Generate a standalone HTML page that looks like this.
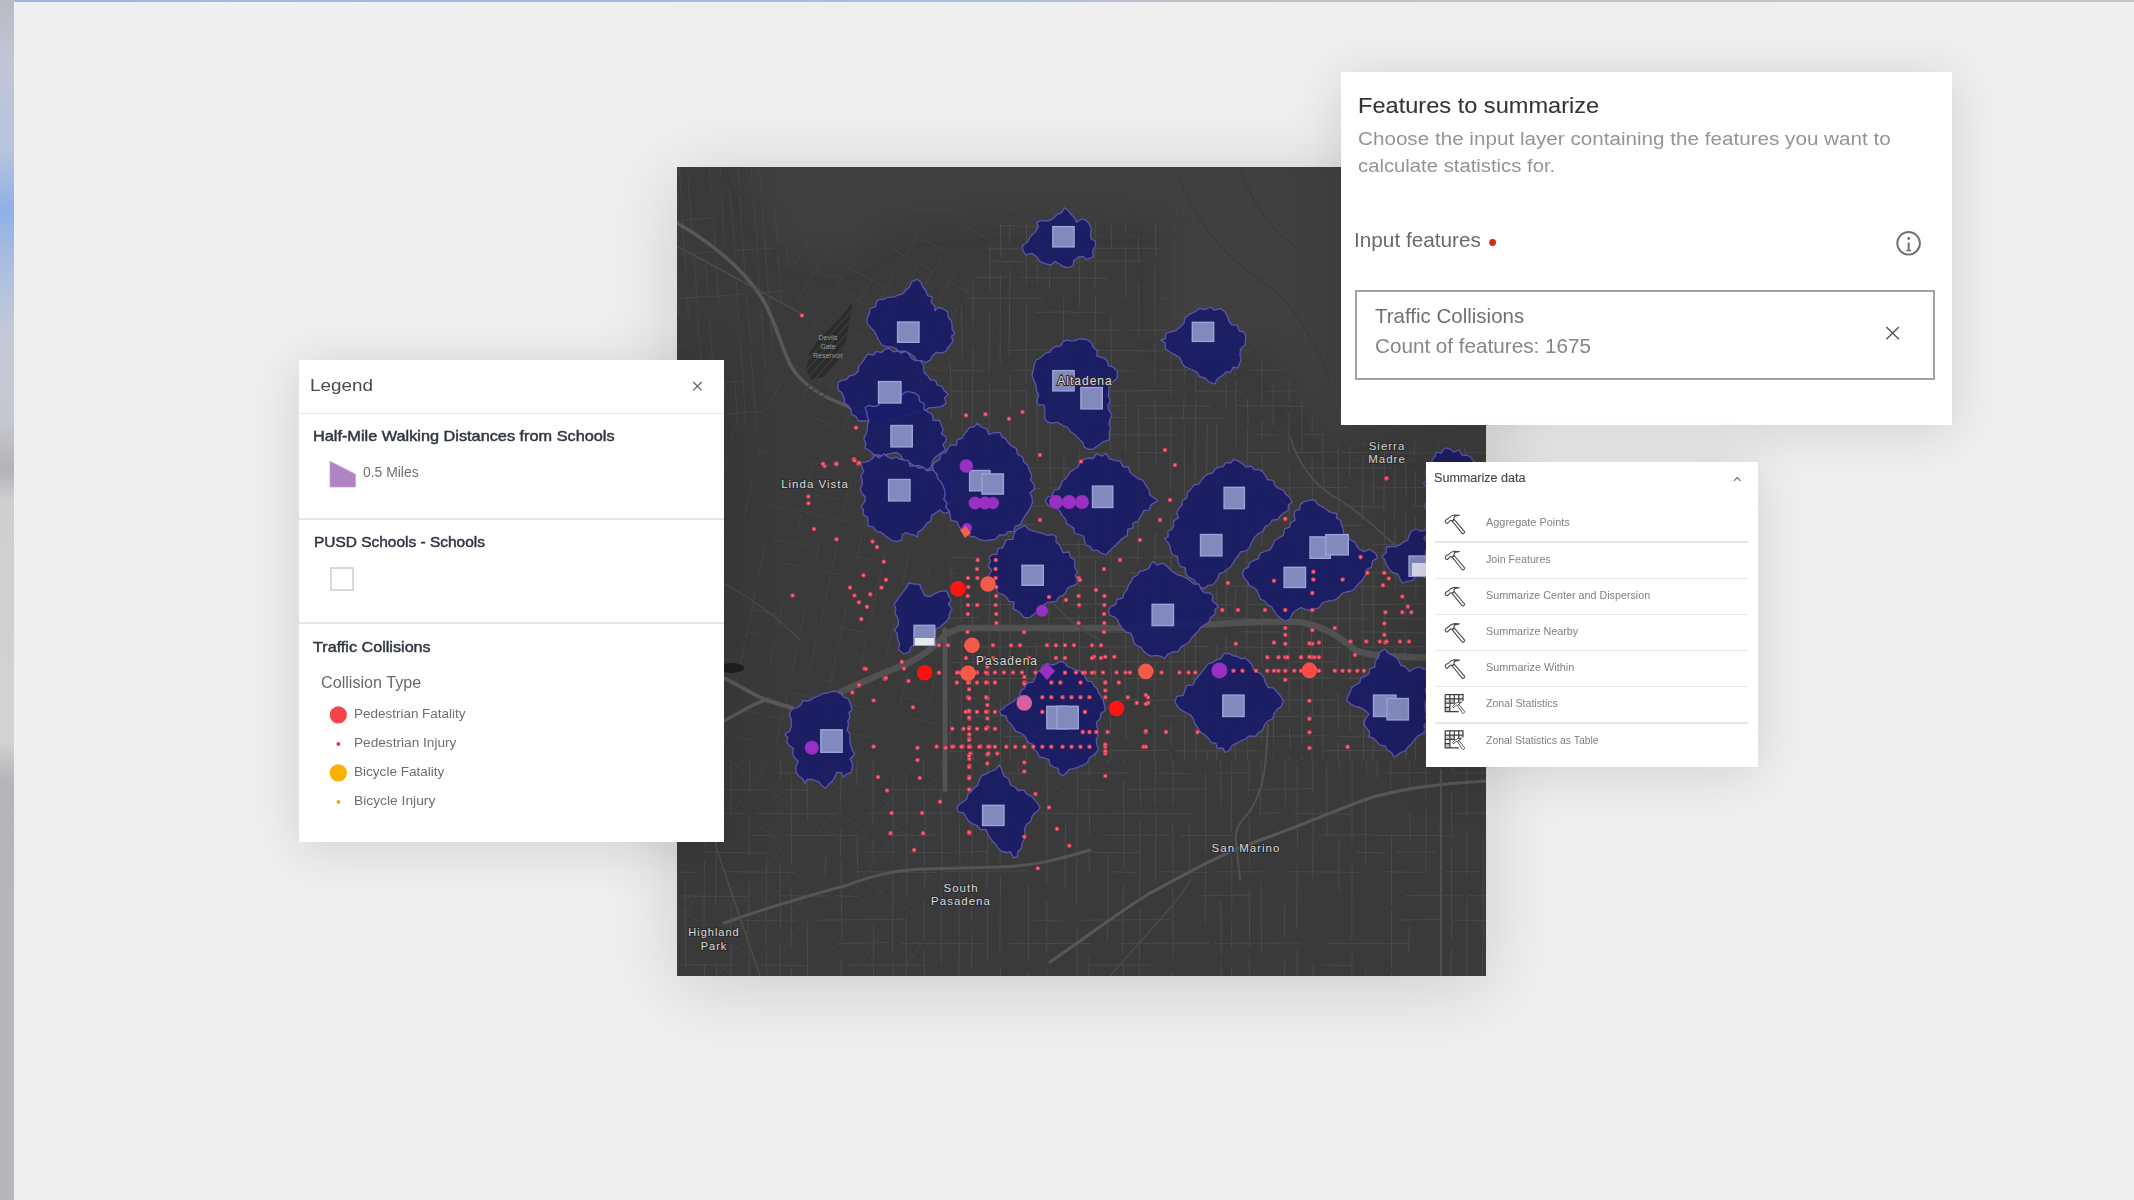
<!DOCTYPE html>
<html><head><meta charset="utf-8">
<style>
html,body{margin:0;padding:0;}
body{width:2134px;height:1200px;overflow:hidden;position:relative;background:#efefef;font-family:"Liberation Sans",sans-serif;}
.abs{position:absolute;}
#strip{left:0;top:0;width:14px;height:1200px;background:linear-gradient(to bottom,#b9bbc2 0px,#c0c6d6 60px,#b7c4dc 150px,#8fb0e6 210px,#a9bde0 260px,#c3c9d8 330px,#c6c8cf 420px,#b3b3b7 470px,#cfcfd1 500px,#d3d3d4 740px,#b6b6ba 780px,#b7b7bb 1200px);}
#topline{left:14px;top:0;width:2120px;height:1.5px;background:linear-gradient(to right,#9db6e2 0px,#a8bde0 900px,#c4c2bc 1300px,#c9c6be 2120px);}
.panel{position:absolute;background:#fff;box-shadow:0 6px 50px rgba(0,0,0,0.13);}
.t{position:absolute;white-space:nowrap;line-height:1;}
.hr{position:absolute;height:1.5px;background:#e6e6e6;}
svg{position:absolute;overflow:visible;}
</style></head>
<body>
<div id="strip" class="abs"></div>
<div id="topline" class="abs"></div>

<!-- MAP -->
<div id="map" class="abs" style="left:677px;top:167px;width:809px;height:809px;background:#393939;box-shadow:0 10px 70px rgba(0,0,0,0.15);overflow:hidden;">
<svg width="809" height="809" viewBox="677 167 809 809" style="left:0;top:0"><rect x="677.0" y="167.0" width="809.0" height="809.0" fill="#3a3a3a"/>
<filter id="mblur" x="-10%" y="-10%" width="120%" height="120%"><feGaussianBlur stdDeviation="14"/></filter>
<polygon points="745.0,150.0 1500.0,150.0 1500.0,445.0 1420.0,440.0 1330.0,440.0 1268.0,345.0 1166.0,341.0 1166.0,217.0 1000.0,212.0 900.0,222.0 840.0,258.0 790.0,248.0 760.0,200.0" fill="#3f4140" filter="url(#mblur)"/>
<clipPath id="z3"><polygon points="950.0,330.0 1000.0,222.0 1166.0,222.0 1166.0,341.0 1268.0,345.0 1330.0,445.0 1420.0,440.0 1486.0,450.0 1486.0,760.0 950.0,760.0"/></clipPath>
<path d="M786.0,58.0 L786.3,100.7 M786.0,102.5 L785.1,160.0 M786.0,172.7 L785.1,195.3 M786.0,250.4 L786.9,286.0 M786.0,349.4 L785.3,429.5 M786.0,478.5 L785.7,539.2 M786.0,552.9 L785.4,577.3 M786.0,594.3 L786.2,644.3 M786.0,655.6 L786.4,696.6 M786.0,702.7 L786.8,762.9 M786.0,824.2 L785.3,873.5 M786.0,885.7 L786.5,908.5 M801.9,58.0 L802.1,100.0 M801.9,190.0 L801.1,243.2 M801.9,346.6 L802.3,386.5 M801.9,387.1 L801.2,439.4 M801.9,440.9 L801.4,514.6 M801.9,524.4 L801.8,605.4 M801.9,722.6 L801.6,762.1 M801.9,784.2 L801.3,871.2 M801.9,877.0 L802.1,913.4 M801.9,919.9 L801.7,940.2 M818.5,58.0 L818.7,126.3 M818.5,186.5 L818.2,267.7 M818.5,277.7 L817.6,305.0 M818.5,306.6 L818.1,341.3 M818.5,342.6 L817.7,362.6 M818.5,408.8 L818.2,439.2 M818.5,501.7 L817.6,554.4 M818.5,556.9 L819.1,600.9 M818.5,639.8 L817.5,670.0 M818.5,789.1 L817.8,827.4 M818.5,846.7 L818.1,904.0 M833.9,58.0 L833.3,135.3 M833.9,148.2 L832.9,193.1 M833.9,200.1 L834.8,238.2 M833.9,358.9 L833.3,404.4 M833.9,409.3 L834.7,443.6 M833.9,464.6 L834.4,518.2 M833.9,606.1 L833.2,678.6 M833.9,765.9 L834.7,813.6 M833.9,831.8 L833.2,863.7 M833.9,886.3 L834.5,962.7 M848.1,58.0 L847.3,102.5 M848.1,102.9 L848.1,190.8 M848.1,285.2 L847.7,320.0 M848.1,326.0 L847.9,387.0 M848.1,390.3 L848.0,474.0 M848.1,488.6 L848.9,571.9 M848.1,584.4 L847.1,641.7 M848.1,652.7 L848.7,685.5 M848.1,689.8 L848.2,743.0 M848.1,751.1 L848.6,807.4 M848.1,810.0 L847.6,869.3 M848.1,888.6 L848.6,944.1 M860.6,58.0 L860.7,120.9 M860.6,138.2 L860.6,189.9 M860.6,305.9 L861.5,344.1 M860.6,365.1 L860.5,394.7 M860.6,396.5 L861.0,433.3 M860.6,452.9 L861.1,535.7 M860.6,726.7 L860.7,758.0 M860.6,766.4 L861.1,800.1 M860.6,800.6 L859.7,859.4 M860.6,867.7 L859.8,931.4 M875.9,58.0 L875.4,146.0 M875.9,147.0 L875.1,221.5 M875.9,367.1 L875.0,436.1 M875.9,453.3 L876.8,503.1 M875.9,518.9 L876.6,595.1 M875.9,596.7 L875.6,677.1 M875.9,690.9 L875.1,775.8 M875.9,789.0 L875.2,825.7 M875.9,826.9 L875.5,861.1 M875.9,880.0 L875.2,920.3 M885.1,58.0 L885.6,95.5 M885.1,109.3 L886.0,142.6 M885.1,145.2 L885.1,222.6 M885.1,243.4 L885.5,290.9 M885.1,377.2 L884.8,441.7 M885.1,443.0 L885.6,472.1 M885.1,478.5 L885.8,509.9 M885.1,531.7 L884.6,598.6 M885.1,606.0 L885.0,658.1 M885.1,810.6 L884.9,855.5 M885.1,867.4 L885.1,922.6 M896.3,58.0 L895.4,84.3 M896.3,84.8 L896.5,126.1 M896.3,139.4 L896.7,211.9 M896.3,233.9 L897.3,281.2 M896.3,284.9 L895.4,355.6 M896.3,376.5 L896.8,458.9 M896.3,479.2 L896.3,509.0 M896.3,620.8 L896.7,703.3 M896.3,709.0 L896.0,731.2 M896.3,733.8 L896.5,812.3 M896.3,828.0 L895.3,895.6 M896.3,915.6 L896.4,987.9 M905.9,58.0 L905.0,129.6 M905.9,136.2 L906.4,207.3 M905.9,231.7 L905.9,286.2 M905.9,303.3 L906.2,377.0 M905.9,379.0 L906.4,409.3 M905.9,416.9 L905.0,476.6 M905.9,483.3 L906.3,550.4 M905.9,557.7 L905.8,613.8 M905.9,616.8 L906.9,699.3 M905.9,722.7 L906.5,744.0 M905.9,768.2 L905.3,819.6 M905.9,843.3 L905.2,878.0 M905.9,891.1 L906.5,977.8 M921.9,58.0 L922.7,127.2 M921.9,139.4 L921.9,161.1 M921.9,172.4 L921.6,213.5 M921.9,221.4 L922.4,300.2 M921.9,367.5 L921.7,450.6 M921.9,460.4 L921.6,550.3 M921.9,561.0 L921.1,600.3 M921.9,667.4 L921.3,706.0 M921.9,910.2 L921.0,968.7 M934.5,58.0 L934.1,130.7 M934.5,131.9 L934.5,216.8 M934.5,225.4 L935.5,266.2 M934.5,272.7 L934.6,338.6 M934.5,348.5 L934.0,380.2 M934.5,402.9 L935.3,457.7 M934.5,482.6 L933.9,534.1 M934.5,536.3 L934.0,580.3 M934.5,665.3 L934.6,714.2 M934.5,723.7 L934.1,767.3 M934.5,791.5 L934.8,820.3 M934.5,841.9 L934.0,877.0 M950.4,58.0 L950.9,79.5 M950.4,101.9 L949.4,155.0 M950.4,271.1 L949.7,359.2 M950.4,363.0 L951.3,419.6 M950.4,437.6 L950.4,502.9 M950.4,516.7 L949.9,539.5 M950.4,562.5 L949.7,627.7 M950.4,634.0 L949.7,698.5 M950.4,700.3 L950.2,757.0 M950.4,762.6 L950.0,824.6 M950.4,836.2 L951.2,923.3 M961.4,112.9 L961.4,154.4 M961.4,171.3 L961.7,220.7 M961.4,243.8 L961.1,279.7 M961.4,290.2 L962.0,358.0 M961.4,376.5 L962.3,431.8 M961.4,439.6 L960.8,517.0 M961.4,589.1 L961.2,622.2 M961.4,638.8 L961.2,725.2 M961.4,730.5 L960.5,818.7 M973.0,109.6 L972.8,131.9 M973.0,141.2 L972.0,184.4 M973.0,239.1 L972.8,326.6 M973.0,347.2 L972.1,424.7 M973.0,601.6 L972.2,624.5 M973.0,647.5 L973.8,685.5 M973.0,748.4 L972.7,786.8 M973.0,793.7 L973.9,813.9 M973.0,829.8 L972.5,915.8 M989.6,58.0 L989.1,144.8 M989.6,214.6 L990.3,290.8 M989.6,310.1 L989.2,372.6 M989.6,381.7 L989.0,456.5 M989.6,475.3 L988.7,512.6 M989.6,591.3 L988.8,680.4 M989.6,682.8 L989.5,737.7 M989.6,743.6 L990.0,792.8 M989.6,811.5 L988.8,890.8 M989.6,911.8 L989.4,952.3 M1000.3,58.0 L999.6,95.3 M1000.3,117.4 L1000.1,177.9 M1000.3,202.7 L1000.9,258.2 M1000.3,274.6 L1000.2,363.9 M1000.3,464.3 L999.6,504.8 M1000.3,599.3 L999.8,679.9 M1000.3,699.3 L1000.5,785.5 M1000.3,801.0 L999.5,836.3 M1000.3,841.4 L1000.6,879.2 M1000.3,884.3 L1000.6,905.1 M1000.3,909.7 L1000.9,951.6 M1009.9,58.0 L1010.0,85.1 M1009.9,101.1 L1010.2,127.5 M1009.9,137.7 L1010.8,177.5 M1009.9,185.3 L1009.7,245.0 M1009.9,266.6 L1009.2,356.4 M1009.9,374.6 L1010.7,408.8 M1009.9,419.4 L1010.6,496.8 M1009.9,508.4 L1010.0,539.7 M1009.9,555.8 L1010.1,639.4 M1009.9,648.7 L1009.4,704.0 M1009.9,717.1 L1009.8,801.8 M1009.9,822.0 L1009.1,909.6 M1026.6,58.0 L1027.4,111.8 M1026.6,121.5 L1027.2,204.8 M1026.6,208.8 L1026.4,283.8 M1026.6,305.0 L1026.0,383.0 M1026.6,393.0 L1025.8,449.2 M1026.6,527.2 L1025.6,586.6 M1026.6,607.5 L1026.7,635.8 M1026.6,651.4 L1026.7,692.9 M1026.6,703.5 L1026.4,769.6 M1026.6,770.2 L1026.0,833.5 M1026.6,852.6 L1025.9,927.2 M1036.5,58.0 L1035.7,87.0 M1036.5,98.0 L1036.8,153.8 M1036.5,155.8 L1036.5,227.2 M1036.5,228.5 L1037.4,283.8 M1036.5,385.5 L1037.5,462.5 M1036.5,642.7 L1035.8,687.3 M1036.5,812.9 L1036.1,851.3 M1036.5,852.2 L1037.4,885.0 M1036.5,902.0 L1037.1,984.7 M1049.7,58.0 L1050.5,122.5 M1049.7,199.6 L1049.5,289.1 M1049.7,362.1 L1049.6,407.3 M1049.7,411.7 L1050.4,483.7 M1049.7,569.5 L1048.7,635.9 M1049.7,636.8 L1049.6,667.2 M1049.7,680.1 L1049.2,762.7 M1049.7,779.1 L1049.4,800.6 M1049.7,803.3 L1049.9,848.3 M1049.7,863.0 L1049.7,897.3 M1049.7,900.7 L1049.0,986.2 M1063.8,58.0 L1063.6,139.0 M1063.8,145.6 L1063.9,166.4 M1063.8,175.2 L1064.7,240.4 M1063.8,297.2 L1063.3,354.4 M1063.8,355.9 L1063.9,430.4 M1063.8,453.9 L1064.0,483.9 M1063.8,565.8 L1062.9,607.5 M1063.8,629.7 L1062.8,704.5 M1063.8,725.6 L1064.3,797.8 M1063.8,809.1 L1063.3,844.9 M1063.8,845.9 L1064.2,889.4 M1063.8,910.5 L1063.9,980.3 M1079.1,58.0 L1079.3,114.6 M1079.1,174.3 L1079.6,212.6 M1079.1,236.2 L1079.8,308.4 M1079.1,369.1 L1080.0,437.6 M1079.1,449.4 L1079.8,528.1 M1079.1,539.1 L1078.7,609.8 M1079.1,615.1 L1079.9,678.7 M1079.1,682.3 L1079.9,704.2 M1079.1,712.8 L1078.1,742.7 M1079.1,760.0 L1079.5,824.4 M1079.1,826.1 L1079.7,887.4 M1079.1,907.9 L1079.8,990.3 M1095.5,58.0 L1094.8,85.5 M1095.5,181.6 L1095.1,259.3 M1095.5,261.8 L1094.9,288.7 M1095.5,296.6 L1095.0,346.3 M1095.5,353.4 L1095.2,423.5 M1095.5,518.3 L1095.4,540.5 M1095.5,559.8 L1095.6,604.1 M1095.5,609.5 L1096.2,689.8 M1095.5,694.1 L1096.1,714.2 M1095.5,738.6 L1095.5,758.9 M1095.5,778.8 L1095.2,811.8 M1095.5,877.9 L1095.5,912.9 M1095.5,915.7 L1096.1,980.2 M1110.8,58.0 L1110.6,122.0 M1110.8,131.8 L1111.5,214.1 M1110.8,214.8 L1111.6,249.2 M1110.8,314.1 L1111.3,366.4 M1110.8,385.2 L1110.4,450.5 M1110.8,454.3 L1111.3,533.4 M1110.8,537.6 L1110.9,588.3 M1110.8,649.8 L1111.2,683.2 M1110.8,704.3 L1110.3,735.1 M1110.8,743.2 L1110.4,799.8 M1110.8,804.5 L1110.0,892.8 M1110.8,916.8 L1111.7,944.0 M1125.6,58.0 L1125.9,108.4 M1125.6,111.1 L1124.7,145.6 M1125.6,155.5 L1125.6,230.9 M1125.6,246.7 L1125.8,299.2 M1125.6,391.9 L1125.4,452.1 M1125.6,633.7 L1125.2,698.6 M1125.6,714.3 L1126.2,741.1 M1125.6,759.0 L1125.4,823.0 M1125.6,834.4 L1125.9,897.9 M1125.6,921.2 L1126.1,954.0 M1138.5,58.0 L1138.6,146.2 M1138.5,238.0 L1138.6,265.0 M1138.5,283.0 L1139.2,338.8 M1138.5,405.8 L1139.0,473.7 M1138.5,476.8 L1137.6,565.7 M1138.5,572.6 L1138.3,620.5 M1138.5,631.1 L1138.0,699.9 M1138.5,835.8 L1139.1,870.6 M1138.5,890.8 L1138.6,955.2 M1155.1,58.0 L1155.8,102.7 M1155.1,123.1 L1155.2,175.9 M1155.1,179.0 L1155.8,257.4 M1155.1,264.1 L1155.0,310.4 M1155.1,315.0 L1154.7,335.2 M1155.1,341.4 L1155.0,382.5 M1155.1,398.4 L1156.0,464.6 M1155.1,532.6 L1155.8,607.4 M1155.1,623.3 L1156.0,644.3 M1155.1,660.7 L1154.4,698.2 M1155.1,704.1 L1154.4,778.4 M1155.1,801.0 L1155.9,876.4 M1155.1,891.6 L1155.9,966.3 M1170.8,58.0 L1170.8,91.8 M1170.8,174.9 L1170.0,213.5 M1170.8,225.8 L1170.1,249.9 M1170.8,262.2 L1171.5,317.0 M1170.8,317.2 L1170.9,396.1 M1170.8,412.7 L1170.6,491.5 M1170.8,515.5 L1171.0,540.8 M1170.8,541.5 L1171.6,604.2 M1170.8,612.5 L1170.7,701.2 M1170.8,723.6 L1171.0,746.0 M1170.8,754.5 L1170.7,834.8 M1170.8,847.9 L1170.6,921.9 M1184.2,58.0 L1184.8,135.9 M1184.2,146.0 L1184.2,201.2 M1184.2,225.6 L1183.9,291.4 M1184.2,299.3 L1184.5,340.3 M1184.2,359.9 L1185.0,382.7 M1184.2,396.3 L1183.2,419.8 M1184.2,424.6 L1184.5,509.1 M1184.2,528.8 L1184.4,612.5 M1184.2,628.1 L1184.6,696.9 M1184.2,702.2 L1184.7,768.9 M1184.2,771.4 L1184.7,804.1 M1184.2,827.0 L1184.8,892.9 M1184.2,912.5 L1183.8,971.9 M1195.8,58.0 L1196.6,108.1 M1195.8,109.5 L1195.0,169.2 M1195.8,260.9 L1196.0,281.9 M1195.8,305.4 L1195.6,394.0 M1195.8,396.6 L1195.1,461.7 M1195.8,462.1 L1195.0,482.4 M1195.8,536.0 L1195.3,557.2 M1195.8,575.5 L1196.3,608.7 M1195.8,626.5 L1194.9,706.4 M1195.8,722.1 L1196.6,791.7 M1195.8,798.1 L1194.8,885.6 M1207.3,58.0 L1208.0,129.1 M1207.3,141.2 L1207.5,165.4 M1207.3,176.4 L1207.9,243.8 M1207.3,252.8 L1207.1,318.0 M1207.3,422.3 L1206.4,482.0 M1207.3,667.0 L1207.2,729.1 M1207.3,751.3 L1207.5,797.7 M1207.3,820.1 L1206.3,896.6 M1207.3,903.2 L1207.9,952.7 M1216.7,158.0 L1217.4,218.0 M1216.7,314.8 L1217.3,340.8 M1216.7,424.1 L1216.7,486.6 M1216.7,491.8 L1217.3,529.6 M1216.7,586.6 L1217.5,622.9 M1216.7,645.0 L1216.9,701.5 M1216.7,706.2 L1217.1,739.7 M1216.7,748.8 L1216.8,808.3 M1216.7,844.5 L1217.3,871.9 M1216.7,875.8 L1216.8,937.6 M1226.1,159.5 L1226.7,219.2 M1226.1,229.8 L1226.7,316.1 M1226.1,340.2 L1225.5,378.0 M1226.1,382.5 L1226.2,408.3 M1226.1,504.9 L1225.9,529.4 M1226.1,532.4 L1226.2,619.6 M1226.1,635.6 L1225.9,722.5 M1226.1,789.7 L1225.6,825.2 M1235.6,58.0 L1235.9,133.0 M1235.6,157.7 L1236.1,181.6 M1235.6,205.1 L1235.7,272.5 M1235.6,291.4 L1235.1,318.8 M1235.6,321.9 L1235.0,375.6 M1235.6,379.2 L1236.0,446.6 M1235.6,587.1 L1234.8,616.9 M1235.6,640.1 L1235.5,719.1 M1235.6,727.6 L1235.8,805.2 M1235.6,808.7 L1236.0,844.3 M1235.6,894.9 L1235.1,943.7 M1247.3,58.0 L1246.9,89.7 M1247.3,141.7 L1246.7,224.4 M1247.3,236.3 L1246.7,276.4 M1247.3,398.0 L1248.1,424.8 M1247.3,426.2 L1248.2,497.1 M1247.3,497.5 L1246.6,574.0 M1247.3,574.0 L1246.6,652.3 M1247.3,663.2 L1247.4,747.0 M1247.3,750.5 L1247.7,783.1 M1247.3,788.0 L1247.5,813.5 M1247.3,825.9 L1247.5,865.1 M1247.3,882.8 L1246.7,959.6 M1262.1,58.0 L1261.2,106.6 M1262.1,191.9 L1262.9,246.4 M1262.1,258.3 L1261.5,339.4 M1262.1,360.2 L1261.8,405.9 M1262.1,420.7 L1262.0,441.1 M1262.1,454.0 L1262.7,482.4 M1262.1,504.0 L1261.8,546.5 M1262.1,613.4 L1262.1,668.1 M1262.1,708.5 L1261.6,741.3 M1262.1,761.7 L1262.5,783.8 M1262.1,788.7 L1262.2,810.0 M1262.1,823.0 L1262.8,892.2 M1262.1,910.1 L1262.1,933.3 M1273.4,58.0 L1272.6,86.5 M1273.4,101.3 L1273.5,181.6 M1273.4,255.2 L1274.0,302.4 M1273.4,382.7 L1273.0,426.4 M1273.4,706.7 L1273.6,744.2 M1273.4,753.3 L1273.2,810.5 M1273.4,823.1 L1274.3,844.5 M1273.4,864.0 L1274.0,949.5 M1289.4,58.0 L1288.9,80.4 M1289.4,97.4 L1290.2,136.5 M1289.4,152.0 L1289.2,189.6 M1289.4,213.4 L1289.7,253.5 M1289.4,330.9 L1289.4,369.7 M1289.4,373.4 L1289.0,402.1 M1289.4,412.3 L1288.5,452.5 M1289.4,466.1 L1289.5,544.9 M1289.4,561.1 L1289.3,595.2 M1289.4,608.9 L1289.0,671.8 M1289.4,677.9 L1289.1,713.4 M1289.4,728.0 L1290.1,748.9 M1289.4,754.8 L1288.9,813.8 M1289.4,838.5 L1288.7,879.2 M1289.4,880.8 L1288.5,961.8 M1301.9,58.0 L1301.3,129.5 M1301.9,153.5 L1301.6,225.2 M1301.9,234.0 L1302.6,301.3 M1301.9,321.8 L1302.4,378.0 M1301.9,397.0 L1302.3,450.3 M1301.9,502.2 L1301.9,575.8 M1301.9,599.8 L1302.5,659.9 M1301.9,681.7 L1301.8,744.2 M1301.9,755.7 L1301.7,826.3 M1301.9,840.2 L1302.5,887.1 M1301.9,908.3 L1301.3,963.3 M1312.1,58.0 L1311.3,118.3 M1312.1,204.9 L1312.0,292.0 M1312.1,314.8 L1312.3,335.5 M1312.1,348.0 L1312.2,432.4 M1312.1,457.3 L1312.5,513.6 M1312.1,523.3 L1311.8,568.3 M1312.1,592.0 L1311.3,659.4 M1312.1,668.8 L1312.3,716.8 M1312.1,738.8 L1312.0,826.3 M1312.1,841.9 L1312.2,931.7 M1322.6,120.9 L1323.3,176.8 M1322.6,293.7 L1322.1,343.1 M1322.6,355.9 L1321.9,411.3 M1322.6,427.0 L1323.5,489.3 M1322.6,505.2 L1323.1,528.1 M1322.6,535.8 L1322.2,604.1 M1322.6,625.2 L1322.0,686.2 M1322.6,698.7 L1322.9,757.4 M1322.6,770.7 L1322.4,860.5 M1322.6,863.5 L1321.8,894.5 M1322.6,897.0 L1323.2,928.9 M1338.0,58.0 L1338.5,82.3 M1338.0,90.4 L1337.3,160.5 M1338.0,208.7 L1337.7,253.1 M1338.0,254.5 L1338.9,336.8 M1338.0,347.8 L1337.0,411.2 M1338.0,434.5 L1338.7,514.3 M1338.0,534.7 L1338.9,576.0 M1338.0,588.4 L1337.7,674.8 M1338.0,692.8 L1338.7,728.3 M1338.0,740.4 L1337.3,815.9 M1338.0,865.2 L1338.0,924.5 M1350.2,58.0 L1350.8,82.6 M1350.2,91.4 L1349.8,128.5 M1350.2,134.4 L1349.9,156.9 M1350.2,160.8 L1349.7,230.2 M1350.2,251.1 L1350.9,280.0 M1350.2,300.1 L1350.6,331.3 M1350.2,340.7 L1351.1,427.8 M1350.2,440.4 L1349.5,476.3 M1350.2,546.9 L1350.4,592.7 M1350.2,598.0 L1350.2,679.1 M1350.2,692.6 L1350.0,731.6 M1350.2,748.0 L1350.0,807.7 M1350.2,850.3 L1350.3,916.7 M1363.2,58.0 L1362.8,98.8 M1363.2,104.4 L1362.8,133.3 M1363.2,143.4 L1364.0,227.0 M1363.2,248.5 L1362.3,277.8 M1363.2,294.8 L1363.0,361.2 M1363.2,377.7 L1363.9,446.6 M1363.2,455.4 L1362.4,519.5 M1363.2,542.3 L1362.3,613.7 M1363.2,614.7 L1362.8,646.0 M1363.2,655.5 L1363.5,678.3 M1363.2,682.8 L1363.6,761.5 M1363.2,767.9 L1362.9,818.3 M1363.2,818.4 L1362.8,896.8 M1363.2,897.8 L1362.3,977.6 M1373.2,58.0 L1374.0,133.4 M1373.2,152.1 L1373.0,178.2 M1373.2,196.9 L1372.3,274.9 M1373.2,452.9 L1373.6,504.6 M1373.2,574.3 L1373.6,647.7 M1373.2,667.8 L1374.1,706.1 M1373.2,722.0 L1372.3,780.1 M1373.2,789.0 L1372.8,837.9 M1373.2,841.3 L1372.6,910.8 M1373.2,916.8 L1374.0,972.9 M1384.6,58.0 L1384.7,139.9 M1384.6,148.3 L1385.1,225.3 M1384.6,229.6 L1384.5,296.2 M1384.6,315.4 L1384.2,393.6 M1384.6,402.6 L1384.2,437.0 M1384.6,442.0 L1383.8,511.1 M1384.6,519.2 L1383.9,572.0 M1384.6,613.3 L1385.6,639.2 M1384.6,653.3 L1384.5,680.9 M1384.6,685.6 L1385.4,743.6 M1384.6,840.0 L1383.9,877.6 M1395.2,145.8 L1395.8,177.6 M1395.2,196.2 L1395.8,239.1 M1395.2,247.1 L1394.9,292.9 M1395.2,313.6 L1395.3,350.4 M1395.2,366.1 L1396.0,443.5 M1395.2,467.1 L1394.5,521.7 M1395.2,529.2 L1395.5,589.9 M1395.2,647.2 L1394.5,670.0 M1395.2,729.7 L1394.7,804.8 M1395.2,821.3 L1394.8,877.3 M1405.5,58.0 L1405.7,98.7 M1405.5,107.4 L1405.2,141.1 M1405.5,365.9 L1405.9,442.7 M1405.5,457.9 L1406.4,498.7 M1405.5,510.7 L1405.2,576.1 M1405.5,598.2 L1405.9,620.1 M1405.5,631.3 L1405.3,657.3 M1405.5,671.8 L1405.7,720.9 M1405.5,730.9 L1406.3,758.9 M1405.5,806.8 L1405.0,833.4 M1405.5,845.6 L1405.7,904.4 M1405.5,907.2 L1404.7,963.2 M1415.2,122.5 L1414.4,192.6 M1415.2,217.3 L1415.9,287.8 M1415.2,343.7 L1415.8,417.9 M1415.2,419.4 L1414.2,456.0 M1415.2,470.8 L1415.6,505.7 M1415.2,516.4 L1416.0,598.6 M1415.2,701.1 L1415.7,773.3 M1415.2,790.3 L1415.0,868.1 M1415.2,886.5 L1414.3,972.9 M1425.1,119.2 L1424.6,204.0 M1425.1,274.7 L1424.3,302.6 M1425.1,322.6 L1424.7,355.6 M1425.1,372.8 L1425.8,419.4 M1425.1,524.9 L1424.4,545.8 M1425.1,690.1 L1424.4,737.6 M1425.1,821.6 L1424.5,846.9 M1425.1,869.2 L1424.4,930.5 M1437.8,58.0 L1437.5,118.4 M1437.8,118.5 L1436.9,179.1 M1437.8,190.6 L1437.1,279.6 M1437.8,296.4 L1437.8,335.5 M1437.8,342.0 L1438.7,401.9 M1437.8,426.7 L1438.4,449.0 M1437.8,470.9 L1438.1,545.1 M1437.8,554.1 L1438.6,593.8 M1437.8,617.3 L1438.4,685.0 M1437.8,703.5 L1437.5,759.1 M1437.8,772.9 L1437.5,821.3 M1437.8,829.4 L1437.6,918.6 M1448.8,58.0 L1447.8,102.4 M1448.8,124.2 L1448.9,175.9 M1448.8,183.5 L1448.4,215.3 M1448.8,223.0 L1449.6,293.9 M1448.8,302.4 L1447.9,386.9 M1448.8,460.9 L1449.5,535.1 M1448.8,597.6 L1448.1,635.7 M1448.8,642.4 L1448.6,711.7 M1448.8,795.1 L1449.7,828.9 M1448.8,891.3 L1448.1,935.2 M1464.7,128.1 L1465.0,171.0 M1464.7,181.1 L1463.8,248.6 M1464.7,259.0 L1464.4,282.2 M1464.7,294.5 L1464.6,356.4 M1464.7,356.7 L1465.7,441.5 M1464.7,442.9 L1464.4,505.9 M1464.7,508.2 L1465.2,539.1 M1464.7,541.4 L1464.8,618.4 M1464.7,633.1 L1464.9,691.9 M1464.7,700.2 L1465.1,772.1 M1464.7,791.2 L1465.2,865.5 M1464.7,889.9 L1464.7,941.6 M1474.8,58.0 L1475.1,78.6 M1474.8,149.1 L1473.9,222.0 M1474.8,225.4 L1474.9,249.6 M1474.8,254.1 L1474.1,339.9 M1474.8,420.1 L1474.3,442.1 M1474.8,466.6 L1474.5,521.6 M1474.8,541.6 L1475.6,593.8 M1474.8,596.5 L1475.1,667.8 M1474.8,677.9 L1474.9,758.4 M1474.8,868.6 L1474.3,904.3 M1474.8,915.1 L1475.3,951.3 M1486.2,58.0 L1486.4,147.6 M1486.2,318.3 L1487.0,361.5 M1486.2,365.5 L1486.2,433.3 M1486.2,447.8 L1487.0,529.6 M1486.2,705.7 L1487.2,727.4 M1486.2,727.6 L1486.7,811.4 M1486.2,813.9 L1485.4,845.7 M1486.2,854.2 L1487.0,938.5 M1495.6,58.0 L1496.0,94.4 M1495.6,95.4 L1495.5,150.7 M1495.6,182.6 L1495.6,264.1 M1495.6,267.5 L1496.0,317.5 M1495.6,321.2 L1494.8,392.9 M1495.6,522.3 L1495.0,593.5 M1495.6,600.2 L1495.6,625.0 M1495.6,635.2 L1494.6,694.2 M1495.6,711.4 L1495.7,777.1 M1495.6,901.0 L1495.4,949.0 M1507.7,58.0 L1507.0,105.0 M1507.7,129.9 L1508.6,150.3 M1507.7,156.7 L1507.2,219.4 M1507.7,272.1 L1508.1,355.7 M1507.7,363.8 L1507.4,429.1 M1507.7,453.4 L1508.4,473.4 M1507.7,553.5 L1507.5,617.6 M1507.7,635.4 L1508.0,682.9 M1507.7,699.8 L1507.8,742.4 M1507.7,748.0 L1508.5,810.9 M1507.7,822.7 L1507.7,893.2 M1520.9,251.6 L1520.7,332.4 M1520.9,353.2 L1520.2,430.4 M1520.9,436.7 L1521.5,463.9 M1520.9,477.0 L1520.7,528.7 M1520.9,553.6 L1520.9,622.2 M1520.9,642.2 L1521.3,715.3 M1520.9,724.5 L1520.7,780.9 M1520.9,789.4 L1520.3,836.1 M1520.9,850.4 L1521.3,874.4 M1520.9,881.3 L1521.6,924.0 M1535.0,58.0 L1534.8,138.1 M1535.0,157.9 L1534.1,221.2 M1535.0,232.2 L1534.6,277.9 M1535.0,362.3 L1535.8,409.3 M1535.0,414.1 L1534.7,502.1 M1535.0,518.7 L1535.5,561.8 M1535.0,571.3 L1535.8,628.1 M1535.0,647.0 L1534.9,668.8 M1535.0,680.4 L1534.9,759.1 M1535.0,781.4 L1535.0,832.2 M1535.0,852.8 L1534.8,919.7 M1535.0,920.7 L1535.5,988.3 M1545.0,58.0 L1545.6,93.4 M1545.0,96.0 L1545.1,122.2 M1545.0,123.5 L1545.0,191.2 M1545.0,192.6 L1545.2,261.0 M1545.0,366.7 L1544.0,410.1 M1545.0,434.8 L1544.6,474.1 M1545.0,480.4 L1545.0,560.6 M1545.0,571.1 L1545.7,594.7 M1545.0,614.7 L1544.4,694.7 M1545.0,696.0 L1544.9,753.6 M1545.0,765.8 L1545.6,826.6 M1545.0,831.6 L1544.1,916.0 M1558.3,58.0 L1557.9,106.6 M1558.3,113.5 L1558.7,189.2 M1558.3,209.3 L1559.1,270.7 M1558.3,281.8 L1558.1,363.3 M1558.3,404.5 L1559.1,466.2 M1558.3,480.3 L1558.6,556.3 M1558.3,573.2 L1558.9,613.8 M1558.3,617.5 L1557.5,701.7 M1558.3,789.4 L1559.1,855.5 M1558.3,872.6 L1558.6,903.5 M1558.3,904.5 L1557.7,983.0 M1569.8,58.0 L1570.7,117.2 M1569.8,125.4 L1570.4,204.2 M1569.8,228.7 L1569.6,276.1 M1569.8,292.2 L1569.0,327.8 M1569.8,339.4 L1570.2,410.4 M1569.8,413.3 L1570.7,491.2 M1569.8,516.1 L1569.4,601.9 M1569.8,610.6 L1570.7,683.1 M1569.8,754.3 L1569.1,812.2 M1569.8,907.2 L1570.0,991.9 M1581.6,58.0 L1580.7,144.1 M1581.6,152.4 L1582.1,203.9 M1581.6,208.4 L1580.8,283.5 M1581.6,297.5 L1582.2,324.2 M1581.6,339.1 L1581.7,391.4 M1581.6,393.8 L1581.8,459.1 M1581.6,467.9 L1581.0,514.1 M1581.6,518.4 L1582.3,604.3 M1581.6,626.1 L1580.8,679.7 M1581.6,701.7 L1581.7,729.9 M1581.6,732.9 L1581.7,785.6 M1581.6,798.3 L1581.4,844.0 M1581.6,849.0 L1582.4,877.9 M1581.6,890.5 L1582.5,972.8 M1596.9,58.0 L1596.4,117.9 M1596.9,136.7 L1596.0,167.4 M1596.9,177.3 L1597.7,233.5 M1596.9,235.6 L1597.1,296.1 M1596.9,315.7 L1596.4,385.5 M1596.9,400.5 L1597.1,489.3 M1596.9,506.6 L1597.5,583.6 M1596.9,595.1 L1597.8,679.6 M1596.9,689.9 L1596.4,738.4 M1596.9,756.7 L1596.6,824.3 M1596.9,827.8 L1596.6,861.6 M1596.9,886.0 L1596.9,975.9 M1612.1,58.0 L1612.3,141.6 M1612.1,230.0 L1611.8,256.4 M1612.1,260.5 L1612.6,348.1 M1612.1,544.3 L1612.7,605.6 M1612.1,625.2 L1613.0,706.2 M1612.1,719.5 L1613.0,805.7 M1612.1,868.8 L1611.5,902.7 M1612.1,915.0 L1612.5,998.6 M1627.3,58.0 L1628.2,133.6 M1627.3,154.2 L1627.6,202.6 M1627.3,223.5 L1628.0,267.3 M1627.3,287.1 L1626.3,307.5 M1627.3,310.2 L1627.5,387.1 M1627.3,398.5 L1627.0,442.0 M1627.3,463.1 L1626.5,526.5 M1627.3,533.2 L1627.6,602.3 M1627.3,622.5 L1626.4,650.9 M1627.3,671.5 L1628.2,704.4 M1627.3,764.4 L1627.3,847.0 M1642.9,58.0 L1641.9,89.4 M1642.9,93.7 L1643.5,179.9 M1642.9,186.2 L1643.0,230.8 M1642.9,252.4 L1643.7,308.3 M1642.9,330.7 L1643.1,397.3 M1642.9,408.4 L1643.2,495.5 M1642.9,511.3 L1643.2,557.6 M1642.9,580.3 L1643.8,635.1 M1642.9,636.6 L1643.0,715.0 M1642.9,817.0 L1642.5,889.5 M786.0,58.0 L846.4,57.8 M868.8,58.0 L933.7,58.5 M942.4,58.0 L1000.5,59.0 M1215.9,58.0 L1255.3,58.2 M1280.1,58.0 L1355.6,57.3 M1371.1,58.0 L1452.5,58.5 M1457.7,58.0 L1499.5,57.6 M786.0,73.2 L836.7,72.7 M951.3,73.2 L1029.9,73.7 M1165.8,73.2 L1205.0,74.0 M1220.9,73.2 L1261.1,72.7 M1376.9,73.2 L1413.9,73.3 M1436.5,73.2 L1504.0,73.8 M1072.5,89.1 L1101.9,88.2 M1189.5,89.1 L1249.9,89.2 M1589.1,89.1 L1670.6,89.5 M786.0,107.2 L825.3,107.4 M850.0,107.2 L889.1,106.7 M1030.6,107.2 L1109.3,106.2 M1128.2,107.2 L1157.9,106.4 M1231.3,107.2 L1309.3,106.7 M1328.1,107.2 L1371.9,107.4 M1378.5,107.2 L1454.0,107.9 M1478.3,107.2 L1535.9,107.8 M1536.7,107.2 L1592.1,106.4 M1611.0,107.2 L1681.7,107.0 M937.9,125.1 L1026.9,125.1 M1104.0,125.1 L1155.8,124.5 M1167.9,125.1 L1207.7,125.6 M1223.1,125.1 L1273.8,125.6 M1279.7,125.1 L1318.3,125.6 M1519.9,125.1 L1554.3,125.9 M1576.0,125.1 L1640.1,124.9 M786.0,137.5 L818.3,138.3 M842.4,137.5 L894.3,136.7 M898.9,137.5 L973.3,138.5 M1000.6,137.5 L1076.3,138.1 M1080.1,137.5 L1107.7,137.5 M1114.0,137.5 L1151.7,138.3 M1272.2,137.5 L1343.5,138.1 M1368.7,137.5 L1398.1,136.9 M1415.7,137.5 L1462.2,138.2 M1485.8,137.5 L1538.2,138.3 M1554.3,137.5 L1579.2,137.7 M1605.8,137.5 L1659.7,136.9 M786.0,158.6 L832.8,158.8 M836.6,158.6 L870.6,158.8 M889.7,158.6 L959.1,157.8 M980.9,158.6 L1004.6,158.4 M1024.8,158.6 L1094.8,158.9 M1115.6,158.6 L1168.6,159.5 M1186.5,158.6 L1210.9,159.6 M1406.1,158.6 L1428.8,158.1 M1592.6,158.6 L1623.3,159.2 M786.0,178.8 L817.4,178.0 M923.4,178.8 L1002.9,179.4 M1018.0,178.8 L1081.4,179.4 M1083.7,178.8 L1107.5,178.4 M1267.3,178.8 L1317.3,179.7 M1333.7,178.8 L1378.4,179.2 M1403.9,178.8 L1483.3,178.5 M1492.3,178.8 L1565.7,179.0 M1595.1,178.8 L1668.9,177.9 M786.0,197.7 L847.9,197.6 M1209.2,197.7 L1290.6,198.6 M1303.9,197.7 L1373.4,197.3 M1383.8,197.7 L1426.5,197.6 M1645.8,197.7 L1684.9,197.6 M978.5,212.0 L1054.1,211.2 M1078.9,212.0 L1120.9,211.7 M1137.0,212.0 L1224.6,212.0 M1427.0,212.0 L1453.3,211.6 M1480.5,212.0 L1501.4,212.4 M1531.1,212.0 L1563.4,212.4 M951.0,226.5 L1019.6,225.6 M1021.6,226.5 L1042.7,225.8 M1165.7,226.5 L1192.7,226.3 M1267.4,226.5 L1352.7,227.2 M1353.6,226.5 L1431.6,227.2 M1455.7,226.5 L1522.6,225.5 M1528.3,226.5 L1611.7,226.8 M1629.3,226.5 L1695.6,225.8 M849.9,248.4 L885.5,247.5 M951.1,248.4 L1021.7,249.0 M1029.3,248.4 L1074.9,247.7 M1082.3,248.4 L1158.1,248.2 M1181.0,248.4 L1216.7,247.9 M1287.9,248.4 L1368.8,248.8 M1393.9,248.4 L1430.3,248.3 M1488.8,248.4 L1517.1,247.8 M1524.0,248.4 L1574.8,247.6 M988.6,261.1 L1025.3,261.8 M1031.7,261.1 L1057.5,261.9 M1071.4,261.1 L1142.5,261.0 M1240.1,261.1 L1272.7,261.4 M1288.2,261.1 L1309.9,261.5 M1326.0,261.1 L1362.4,261.3 M1523.3,261.1 L1606.5,260.5 M1624.4,261.1 L1707.5,260.5 M786.0,277.4 L815.8,277.9 M833.3,277.4 L919.1,277.8 M919.5,277.4 L1005.9,277.4 M1021.2,277.4 L1107.6,278.4 M1167.4,277.4 L1257.4,276.9 M1286.2,277.4 L1328.8,277.1 M1348.8,277.4 L1370.4,276.8 M1395.3,277.4 L1415.3,277.0 M1492.4,277.4 L1529.2,278.4 M1533.7,277.4 L1563.3,277.6 M1589.9,277.4 L1613.9,276.8 M1631.4,277.4 L1683.1,278.2 M786.0,298.1 L873.0,299.0 M912.0,298.1 L933.2,297.7 M962.2,298.1 L1043.1,298.2 M1160.5,298.1 L1188.6,298.4 M1311.2,298.1 L1344.6,298.9 M1402.1,298.1 L1438.7,298.2 M1579.9,298.1 L1600.6,298.5 M1621.8,298.1 L1687.2,299.0 M1035.3,312.4 L1070.9,311.9 M1072.0,312.4 L1101.5,312.2 M1239.9,312.4 L1272.2,311.4 M1292.5,312.4 L1323.7,313.3 M1519.5,312.4 L1593.1,311.9 M786.0,330.3 L819.9,330.4 M841.7,330.3 L880.7,329.3 M885.9,330.3 L954.6,329.8 M1090.0,330.3 L1120.4,330.3 M1130.0,330.3 L1179.3,329.8 M1180.9,330.3 L1206.8,329.5 M1225.5,330.3 L1294.3,330.9 M1316.1,330.3 L1360.1,329.7 M1387.9,330.3 L1447.1,329.6 M1600.4,330.3 L1661.4,330.7 M786.0,350.3 L822.2,350.6 M839.1,350.3 L868.8,350.4 M872.0,350.3 L936.4,349.8 M1007.4,350.3 L1078.1,349.8 M1097.3,350.3 L1165.7,351.1 M1221.4,350.3 L1252.4,350.8 M1371.2,350.3 L1412.9,350.7 M1414.5,350.3 L1477.2,349.4 M1549.5,350.3 L1601.8,349.5 M1617.0,350.3 L1673.5,350.7 M786.0,370.1 L813.4,369.9 M872.3,370.1 L914.6,370.5 M937.7,370.1 L983.7,370.9 M1011.7,370.1 L1075.0,370.0 M1094.1,370.1 L1133.6,371.0 M1160.9,370.1 L1189.9,370.3 M1246.9,370.1 L1297.5,369.9 M1300.3,370.1 L1387.7,369.7 M1410.8,370.1 L1440.2,369.2 M1552.4,370.1 L1596.0,369.6 M1625.2,370.1 L1653.4,370.6 M857.2,391.2 L897.4,391.6 M919.4,391.2 L948.5,392.1 M951.7,391.2 L1028.7,390.7 M1093.6,391.2 L1173.4,390.5 M1195.8,391.2 L1239.7,391.0 M1264.3,391.2 L1344.8,390.2 M1526.1,391.2 L1564.8,391.0 M1575.3,391.2 L1621.8,390.7 M1649.1,391.2 L1697.8,392.0 M1044.6,405.6 L1123.4,405.7 M1133.5,405.6 L1210.9,406.3 M1236.3,405.6 L1317.9,406.5 M1409.0,405.6 L1489.9,405.5 M1601.0,405.6 L1636.0,405.1 M1639.0,405.6 L1681.9,406.2 M816.7,418.2 L869.0,418.8 M897.7,418.2 L939.3,419.0 M1045.8,418.2 L1127.0,417.4 M1144.6,418.2 L1222.6,418.2 M1323.0,418.2 L1368.4,419.1 M1419.0,418.2 L1480.4,418.6 M1493.3,418.2 L1519.7,418.9 M1543.4,418.2 L1588.4,418.7 M860.5,434.5 L894.7,434.2 M916.6,434.5 L949.7,434.5 M1094.6,434.5 L1178.3,435.1 M1255.9,434.5 L1277.5,435.3 M1304.5,434.5 L1391.4,435.4 M1408.2,434.5 L1438.2,435.1 M1450.9,434.5 L1513.1,434.1 M1525.7,434.5 L1581.6,433.7 M1648.1,434.5 L1684.6,434.6 M786.0,452.6 L869.3,452.8 M1088.5,452.6 L1114.5,453.2 M1134.8,452.6 L1164.8,452.9 M1245.6,452.6 L1279.5,452.4 M1298.1,452.6 L1339.3,452.0 M1341.8,452.6 L1375.3,452.6 M1380.9,452.6 L1434.4,453.5 M1449.0,452.6 L1535.2,452.0 M1552.9,452.6 L1583.0,451.7 M1604.1,452.6 L1691.8,452.3 M786.0,468.1 L854.3,467.4 M880.3,468.1 L940.4,468.8 M962.2,468.1 L1007.0,468.9 M1019.1,468.1 L1069.4,468.2 M1305.9,468.1 L1392.0,467.9 M1449.6,468.1 L1471.5,468.0 M1618.7,468.1 L1672.1,467.8 M786.0,488.0 L824.2,487.8 M835.1,488.0 L919.0,487.5 M929.0,488.0 L1006.5,488.4 M1007.2,488.0 L1040.7,488.6 M1045.1,488.0 L1081.0,487.5 M1263.1,488.0 L1347.9,487.4 M1370.3,488.0 L1450.4,487.2 M1476.6,488.0 L1549.4,488.9 M1550.5,488.0 L1574.4,487.0 M1595.7,488.0 L1659.8,487.3 M863.9,506.1 L952.4,505.9 M1026.2,506.1 L1095.6,505.5 M1342.3,506.1 L1385.9,507.0 M1411.6,506.1 L1495.7,505.4 M973.2,524.8 L1036.3,524.6 M1299.5,524.8 L1362.3,525.5 M1508.3,524.8 L1581.6,525.6 M786.0,544.7 L813.2,543.9 M1033.0,544.7 L1098.8,544.4 M1372.0,544.7 L1458.5,543.9 M1512.7,544.7 L1601.9,545.1 M1605.8,544.7 L1670.4,544.2 M786.0,556.9 L839.5,557.6 M866.3,556.9 L888.7,556.8 M910.2,556.9 L981.3,557.8 M1020.0,556.9 L1053.0,556.6 M1057.9,556.9 L1143.0,557.5 M1150.5,556.9 L1234.4,557.7 M1637.3,556.9 L1722.0,557.3 M786.0,572.9 L817.7,572.9 M832.5,572.9 L871.3,573.0 M894.1,572.9 L955.4,573.7 M1130.1,572.9 L1188.5,572.0 M1194.6,572.9 L1223.3,573.2 M1337.4,572.9 L1423.9,573.0 M1449.7,572.9 L1516.6,573.1 M1525.6,572.9 L1613.5,573.9 M1615.4,572.9 L1636.1,572.3 M990.3,586.0 L1060.2,585.1 M1073.0,586.0 L1160.9,586.2 M1227.9,586.0 L1305.6,585.4 M1311.0,586.0 L1389.3,586.9 M1397.3,586.0 L1478.9,585.7 M1639.7,586.0 L1712.0,585.3 M971.0,604.7 L1041.8,604.4 M1068.8,604.7 L1106.7,604.0 M1177.2,604.7 L1232.4,604.8 M1244.8,604.7 L1302.8,603.8 M1359.3,604.7 L1437.0,603.9 M1451.3,604.7 L1498.4,605.2 M786.0,618.4 L810.9,618.1 M813.5,618.4 L878.9,618.1 M894.3,618.4 L979.9,617.7 M1052.9,618.4 L1102.9,617.5 M1190.6,618.4 L1254.4,618.4 M1313.1,618.4 L1368.9,618.8 M1381.9,618.4 L1448.2,619.2 M1448.3,618.4 L1483.9,617.8 M786.0,631.9 L810.9,632.9 M838.5,631.9 L865.5,631.9 M871.3,631.9 L938.2,632.5 M1046.6,631.9 L1076.5,631.2 M1097.0,631.9 L1165.9,632.9 M1240.7,631.9 L1283.2,632.1 M1360.3,631.9 L1430.1,632.9 M1443.3,631.9 L1463.5,632.4 M1489.4,631.9 L1554.0,632.7 M1575.5,631.9 L1603.6,632.3 M1603.7,631.9 L1626.7,632.7 M976.1,647.1 L1062.4,646.5 M1078.0,647.1 L1131.8,646.8 M1147.1,647.1 L1208.3,646.6 M1223.4,647.1 L1278.6,647.4 M1284.2,647.1 L1341.4,647.6 M1362.5,647.1 L1437.2,646.6 M1465.0,647.1 L1520.7,646.6 M1616.9,647.1 L1688.1,647.0 M853.2,662.1 L887.7,662.7 M907.3,662.1 L974.6,662.5 M982.8,662.1 L1007.1,661.2 M1121.7,662.1 L1198.0,661.8 M1291.6,662.1 L1337.4,662.1 M1467.5,662.1 L1518.2,661.7 M1547.5,662.1 L1580.3,661.7 M1608.0,662.1 L1687.7,662.8 M872.2,678.4 L920.1,677.9 M920.7,678.4 L968.0,677.4 M979.1,678.4 L1052.4,678.7 M1071.2,678.4 L1104.3,678.7 M1122.7,678.4 L1163.2,679.1 M1190.5,678.4 L1226.8,678.5 M1236.5,678.4 L1259.1,678.6 M1277.1,678.4 L1332.8,677.8 M1342.2,678.4 L1391.3,679.2 M1394.8,678.4 L1483.8,679.1 M1491.1,678.4 L1552.2,677.4 M1576.1,678.4 L1652.9,678.9 M786.0,700.3 L809.8,699.8 M1021.1,700.3 L1110.6,700.2 M1117.0,700.3 L1137.2,699.5 M1148.2,700.3 L1198.5,699.9 M1280.8,700.3 L1336.5,700.1 M1407.7,700.3 L1451.2,700.4 M1540.7,700.3 L1583.6,701.0 M837.3,716.3 L888.5,715.8 M975.5,716.3 L1046.8,715.8 M1158.3,716.3 L1211.4,715.7 M1230.7,716.3 L1299.3,716.6 M1303.4,716.3 L1366.3,716.3 M1375.7,716.3 L1434.3,716.3 M1452.8,716.3 L1482.2,716.7 M1578.9,716.3 L1614.5,717.0 M1631.5,716.3 L1704.2,716.2 M786.0,736.6 L851.7,736.8 M1004.0,736.6 L1081.9,735.6 M1243.5,736.6 L1326.4,735.7 M1336.5,736.6 L1361.1,736.9 M1364.7,736.6 L1395.9,736.2 M896.1,750.8 L965.1,751.4 M1100.5,750.8 L1169.2,750.3 M1175.7,750.8 L1262.5,750.8 M1321.8,750.8 L1403.1,750.2 M1496.9,750.8 L1553.7,751.7 M1629.2,750.8 L1699.8,751.5 M786.0,765.5 L850.5,765.3 M867.9,765.5 L903.1,764.5 M981.4,765.5 L1043.5,764.8 M1284.2,765.5 L1311.3,765.6 M1362.9,765.5 L1393.3,765.7 M1399.0,765.5 L1452.3,765.4 M1467.4,765.5 L1545.9,766.4 M1591.7,765.5 L1649.4,766.1 M786.0,784.9 L822.0,785.2 M833.1,784.9 L886.7,785.1 M907.5,784.9 L938.2,785.3 M1021.5,784.9 L1058.9,784.4 M1061.4,784.9 L1115.7,784.5 M1197.2,784.9 L1225.2,783.9 M1286.1,784.9 L1375.8,783.9 M1459.1,784.9 L1501.0,785.8 M1516.3,784.9 L1567.2,785.4 M1592.1,784.9 L1645.4,784.7 M786.0,800.9 L852.3,800.8 M869.5,800.9 L906.7,801.6 M984.2,800.9 L1005.2,801.2 M1030.5,800.9 L1083.4,800.5 M1104.7,800.9 L1175.7,801.2 M1195.4,800.9 L1261.5,800.8 M1271.2,800.9 L1333.0,800.2 M1464.1,800.9 L1535.2,801.8 M1536.0,800.9 L1606.7,800.3 M1618.5,800.9 L1673.6,800.2 M786.0,815.9 L873.7,815.7 M880.5,815.9 L968.4,816.2 M1049.2,815.9 L1076.9,815.8 M1103.1,815.9 L1137.3,816.4 M1145.6,815.9 L1176.3,815.7 M1204.5,815.9 L1287.3,816.0 M1299.8,815.9 L1322.1,816.7 M1394.1,815.9 L1478.8,815.5 M1500.3,815.9 L1521.6,815.1 M1535.8,815.9 L1557.0,815.3 M1559.4,815.9 L1585.7,815.9 M1589.8,815.9 L1667.3,815.4 M812.2,836.3 L898.3,836.5 M924.2,836.3 L951.3,836.7 M968.9,836.3 L1039.4,836.3 M1045.0,836.3 L1095.6,836.5 M1146.3,836.3 L1222.4,835.8 M1225.9,836.3 L1281.5,836.8 M1468.1,836.3 L1554.2,837.0 M1626.2,836.3 L1702.9,835.5 M786.0,850.0 L824.1,849.4 M838.0,850.0 L908.0,850.4 M985.0,850.0 L1008.0,851.0 M1019.8,850.0 L1069.5,850.4 M1091.7,850.0 L1157.2,850.2 M1323.2,850.0 L1401.9,850.5 M1588.4,850.0 L1630.3,850.6 M786.0,870.5 L852.9,869.9 M869.9,870.5 L904.7,869.8 M909.4,870.5 L979.6,871.2 M989.5,870.5 L1068.9,870.1 M1080.7,870.5 L1101.6,870.3 M1101.9,870.5 L1182.2,869.5 M1211.1,870.5 L1247.0,869.6 M1250.0,870.5 L1319.7,870.6 M1471.3,870.5 L1550.7,871.0 M1575.0,870.5 L1643.7,871.2 M1648.3,870.5 L1706.1,870.3 M951.3,889.7 L1011.0,890.5 M1022.1,889.7 L1049.2,890.1 M1170.5,889.7 L1244.9,889.6 M1267.7,889.7 L1310.0,889.9 M1398.4,889.7 L1427.3,889.7 M1537.2,889.7 L1612.7,889.0 M1641.9,889.7 L1674.1,889.6 M944.3,906.5 L981.0,906.5 M992.8,906.5 L1058.0,906.1 M1076.2,906.5 L1166.0,906.1 M1166.3,906.5 L1192.9,906.3 M1311.9,906.5 L1373.0,905.5 M1384.5,906.5 L1422.8,905.6 M1439.0,906.5 L1485.3,906.3 M1577.6,906.5 L1605.7,907.2 M1635.3,906.5 L1708.4,907.2 M897.3,921.2 L934.6,921.0 M943.5,921.2 L1016.8,920.9 M1033.0,921.2 L1118.0,922.0 M1135.0,921.2 L1224.5,921.1 M1330.6,921.2 L1384.1,921.3 M1405.2,921.2 L1491.5,920.8 M1615.4,921.2 L1662.1,921.6" stroke="#4a4a4a" stroke-width="1" fill="none" clip-path="url(#z3)"/>
<clipPath id="z1"><polygon points="677.0,167.0 760.0,167.0 790.0,250.0 760.0,430.0 677.0,430.0"/></clipPath>
<path d="M508.9,103.3 L512.8,145.9 M513.3,165.4 L519.4,251.8 M523.4,309.9 L528.4,368.8 M527.5,369.3 L531.1,408.1 M530.5,412.3 L536.1,490.9 M537.7,514.1 L538.7,538.5 M518.6,102.6 L522.7,171.5 M524.8,191.5 L529.3,246.8 M534.0,322.6 L537.2,358.5 M538.0,379.2 L540.4,405.9 M536.5,183.6 L539.3,222.8 M545.5,312.2 L549.6,380.9 M551.7,400.3 L556.0,473.8 M557.3,480.8 L563.1,554.6 M542.6,149.5 L543.5,174.7 M545.5,191.3 L547.6,217.0 M548.8,238.8 L551.3,287.4 M552.8,295.9 L555.8,332.7 M556.7,352.3 L560.0,409.4 M561.4,419.0 L564.7,459.3 M564.6,464.7 L568.3,507.3 M554.9,170.3 L559.2,221.6 M559.0,228.1 L561.6,266.1 M562.9,285.2 L566.1,316.1 M570.8,397.0 L574.3,443.2 M575.3,461.7 L580.8,546.2 M559.6,99.7 L564.0,150.8 M564.8,173.4 L571.6,258.0 M570.9,261.5 L577.6,345.8 M577.5,356.1 L584.5,445.2 M588.8,517.1 L593.7,589.6 M572.6,98.8 L578.5,169.8 M577.9,175.4 L581.3,221.5 M582.7,243.7 L588.4,329.7 M588.9,332.3 L590.8,357.1 M591.4,368.2 L597.3,456.8 M601.6,513.9 L605.1,571.8 M588.0,163.2 L589.8,197.7 M596.7,286.7 L602.0,361.2 M602.8,374.5 L604.7,397.4 M610.3,481.5 L613.3,522.6 M592.6,97.4 L593.3,120.5 M595.5,138.8 L599.9,202.5 M600.4,208.3 L603.3,241.2 M603.5,252.5 L609.0,322.4 M609.4,337.3 L614.1,402.9 M614.3,407.7 L620.5,495.6 M621.6,511.5 L622.9,538.5 M605.3,167.4 L609.7,237.6 M611.5,255.1 L614.0,295.9 M624.8,446.1 L630.6,527.3 M613.2,96.0 L616.7,137.9 M617.0,151.7 L621.2,224.5 M623.5,243.6 L624.9,278.9 M626.4,285.3 L631.3,351.7 M631.8,362.8 L636.2,433.9 M637.7,447.2 L641.4,509.0 M623.1,95.3 L625.4,121.9 M626.0,136.4 L627.4,168.4 M629.5,187.1 L631.1,217.4 M636.9,292.4 L640.0,332.2 M644.9,407.8 L646.0,428.7 M650.3,484.2 L654.8,562.6 M632.6,94.6 L634.7,129.4 M635.2,132.4 L637.6,164.9 M638.3,176.0 L641.7,217.2 M646.9,299.0 L650.7,358.2 M651.2,361.5 L656.1,443.4 M658.6,466.4 L664.7,548.3 M643.8,93.9 L649.2,172.1 M650.4,188.7 L652.6,222.0 M654.5,246.5 L655.8,279.7 M657.2,286.4 L659.3,314.6 M659.5,319.0 L665.0,394.4 M666.3,415.9 L668.8,444.6 M669.1,456.4 L674.9,541.5 M664.4,246.6 L670.5,325.8 M673.1,370.3 L678.0,445.0 M679.5,462.0 L682.0,510.7 M663.9,92.5 L669.9,168.4 M669.8,176.0 L673.8,234.0 M674.0,236.0 L679.4,316.0 M687.4,428.4 L692.5,497.5 M692.3,497.9 L698.4,582.3 M675.4,120.5 L678.0,143.3 M678.3,161.8 L681.5,196.4 M681.9,213.0 L686.0,273.7 M687.8,297.3 L688.3,317.5 M694.3,390.5 L699.7,461.6 M700.1,473.9 L704.0,528.1 M682.0,91.2 L687.2,172.4 M688.1,178.3 L691.8,230.3 M693.3,252.5 L698.1,308.1 M697.5,313.6 L698.6,334.7 M699.2,337.8 L703.5,386.9 M703.5,399.0 L709.6,480.3 M710.5,499.2 L712.8,540.3 M693.6,90.4 L698.4,164.5 M705.7,264.1 L708.6,298.7 M709.4,317.3 L714.0,382.5 M715.0,396.6 L721.2,480.8 M721.9,495.5 L725.9,550.0 M704.1,89.6 L707.6,139.0 M708.1,148.0 L711.2,195.3 M713.1,219.5 L715.4,245.8 M715.7,255.7 L719.0,307.0 M722.8,357.4 L725.2,397.3 M731.8,487.0 L735.1,524.7 M714.3,88.9 L717.6,125.1 M718.3,146.6 L721.2,174.5 M721.5,192.4 L724.3,244.4 M734.7,380.2 L739.2,443.2 M722.8,88.3 L725.4,124.3 M729.7,187.6 L735.5,257.7 M736.3,281.5 L738.5,324.4 M740.0,334.6 L744.1,398.1 M744.5,398.9 L745.8,427.6 M732.1,87.7 L737.0,148.5 M736.7,152.4 L740.2,190.6 M739.6,194.8 L741.4,228.2 M742.5,236.5 L745.7,284.0 M746.7,295.9 L750.8,343.4 M750.8,354.1 L757.6,438.3 M757.6,451.5 L761.8,519.1 M745.6,86.7 L748.7,131.8 M749.7,144.9 L751.8,179.4 M753.3,196.3 L757.8,254.2 M758.1,265.0 L759.3,289.8 M761.3,310.3 L764.9,368.7 M765.9,375.9 L769.2,415.4 M754.1,86.1 L755.2,109.2 M756.6,122.4 L761.9,199.7 M762.4,205.8 L768.3,294.3 M768.7,295.4 L775.6,383.9 M775.1,386.9 L780.5,452.4 M780.2,459.8 L782.7,486.8 M766.0,85.3 L770.3,152.9 M770.9,155.0 L777.3,243.7 M777.7,252.5 L780.8,285.4 M780.4,291.7 L782.9,323.1 M786.0,371.1 L788.2,403.2 M789.0,415.1 L793.9,473.6 M775.8,84.6 L778.4,114.5 M782.1,175.5 L784.6,203.0 M784.8,213.2 L786.5,244.0 M787.1,247.3 L788.6,278.8 M790.0,288.4 L793.9,346.9 M795.5,366.8 L798.2,392.8 M798.8,414.4 L804.8,498.7 M787.2,83.8 L788.4,112.0 M790.7,133.8 L793.8,176.2 M793.9,178.8 L799.3,248.0 M800.2,270.0 L803.7,312.1 M804.4,329.4 L806.9,375.3 M813.3,456.6 L816.7,499.0 M797.2,83.1 L802.7,151.5 M803.3,170.5 L807.0,229.2 M809.0,251.3 L813.5,327.2 M814.6,332.0 L821.3,419.2 M821.6,432.5 L825.6,491.1 M805.5,82.6 L810.7,166.8 M818.3,265.5 L823.2,350.5 M824.6,356.3 L829.9,430.7 M831.2,449.9 L834.1,480.7 M834.6,499.4 L837.5,547.2 M818.3,81.7 L823.5,149.1 M823.9,161.3 L829.9,236.9 M830.4,254.0 L834.6,305.4 M834.9,318.6 L841.8,405.6 M846.3,481.3 L850.0,524.8 M832.6,80.7 L836.4,146.0 M837.2,147.8 L841.0,207.6 M845.4,265.0 L849.2,324.0 M860.5,479.6 L861.7,508.3 M852.6,163.4 L854.6,198.9 M855.2,200.3 L859.5,257.1 M860.1,271.1 L864.9,332.7 M865.6,349.9 L870.4,419.8 M871.0,426.9 L872.8,449.6 M859.8,78.8 L863.1,132.8 M864.8,151.2 L870.1,240.0 M871.7,248.7 L874.0,293.1 M879.9,365.9 L883.7,407.1 M883.8,421.8 L889.3,499.4 M873.9,77.8 L879.7,163.1 M888.1,280.0 L892.4,339.1 M900.3,454.8 L905.5,532.1 M883.3,77.1 L886.0,122.7 M887.7,140.4 L893.1,205.8 M892.4,207.7 L896.5,276.3 M897.4,278.2 L903.5,367.8 M912.1,488.6 L915.8,527.7 M895.4,76.3 L901.0,155.1 M904.8,210.7 L908.1,268.2 M910.4,291.2 L913.8,341.8 M915.0,356.5 L917.7,406.5 M919.7,424.2 L922.4,453.4 M923.3,474.9 L928.0,556.5 M907.0,75.5 L910.1,120.9 M915.2,193.0 L916.2,218.2 M921.5,282.5 L923.8,324.5 M925.1,334.5 L930.5,403.3 M930.3,408.0 L932.1,435.0 M933.8,457.9 L936.0,485.2 M936.3,494.4 L938.8,523.3 M917.8,74.7 L922.4,142.5 M922.9,147.2 L927.3,199.4 M928.3,224.3 L931.8,283.2 M933.5,298.9 L938.9,370.4 M927.8,74.0 L933.6,162.7 M934.8,174.6 L940.7,246.5 M941.0,263.2 L941.5,283.3 M943.1,294.0 L944.9,315.9 M945.0,320.9 L951.5,400.6 M951.2,409.6 L955.2,472.9 M957.0,492.3 L958.1,512.5 M508.9,103.3 L531.5,101.9 M594.9,97.3 L651.4,93.2 M787.2,83.8 L856.0,78.1 M880.9,77.3 L947.9,72.2 M512.3,150.8 L569.3,146.5 M631.5,142.4 L708.3,136.9 M805.9,130.2 L881.1,124.0 M514.5,182.6 L594.3,176.7 M594.3,177.1 L683.0,171.4 M877.8,157.2 L950.1,151.8 M517.9,231.7 L542.0,229.2 M642.1,223.0 L715.6,217.7 M912.5,204.1 L960.9,199.8 M520.3,265.3 L548.9,263.7 M570.7,261.7 L633.7,257.8 M658.4,255.6 L721.6,251.3 M733.4,250.4 L772.2,248.4 M791.0,246.3 L876.1,239.9 M891.4,239.3 L915.4,237.7 M929.9,236.6 L1013.3,231.1 M523.4,309.7 L569.0,307.4 M592.6,304.8 L621.4,302.3 M641.1,301.4 L670.2,299.4 M670.4,299.4 L708.4,296.1 M708.5,296.7 L746.6,293.7 M759.0,293.2 L804.0,289.1 M829.1,288.3 L900.6,282.3 M907.6,282.8 L990.4,276.4 M526.6,356.5 L555.1,354.6 M558.6,354.2 L600.9,351.6 M619.7,350.0 L682.9,344.7 M819.4,336.0 L863.5,333.6 M888.0,331.2 L966.2,326.6 M529.4,396.1 L596.4,391.2 M599.4,391.2 L674.9,385.2 M683.3,385.3 L747.9,380.8 M773.5,379.0 L846.0,374.0 M851.0,373.6 L887.8,370.2 M531.6,427.6 L592.8,422.4 M595.7,423.1 L655.1,418.1 M678.3,417.3 L715.0,414.8 M725.2,414.1 L811.2,407.9 M629.2,469.4 L688.8,464.7" stroke="#464646" stroke-width="1" fill="none" clip-path="url(#z1)"/>
<clipPath id="z2"><polygon points="760.0,210.0 840.0,262.0 900.0,228.0 1000.0,222.0 950.0,330.0 900.0,400.0 830.0,440.0 760.0,425.0 790.0,250.0"/></clipPath>
<path d="M793.9,40.9 L779.1,64.5 M774.0,75.2 L757.7,101.9 M752.3,112.8 L745.8,123.8 M741.6,131.4 L726.4,157.3 M707.4,190.6 L696.5,208.8 M672.6,250.9 L664.7,264.1 M802.9,71.5 L785.7,102.8 M767.1,133.4 L757.5,151.9 M722.9,210.0 L702.7,246.5 M697.6,253.8 L677.0,291.1 M670.3,301.1 L660.1,318.6 M644.1,346.5 L621.8,385.0 M615.9,395.2 L609.5,408.0 M803.9,113.9 L787.7,143.5 M784.9,146.7 L775.2,163.7 M767.9,176.3 L753.0,200.6 M744.7,216.5 L729.5,244.1 M692.9,306.2 L679.7,328.1 M670.8,344.4 L647.7,384.4 M635.6,405.4 L612.2,444.4 M852.3,74.6 L831.2,110.2 M812.8,142.9 L793.5,178.0 M790.0,182.4 L766.7,221.0 M766.4,223.3 L760.7,235.1 M755.4,242.3 L736.1,275.8 M696.6,344.2 L688.4,356.5 M656.1,414.4 L634.3,453.3 M844.6,131.1 L835.5,147.4 M827.5,160.8 L804.5,198.7 M793.2,220.2 L783.6,238.3 M753.7,288.7 L736.7,318.5 M728.8,331.7 L707.7,366.7 M705.6,371.9 L686.9,402.8 M684.4,408.6 L663.2,444.7 M870.5,132.4 L858.3,153.9 M845.8,175.2 L828.2,206.0 M809.3,238.4 L794.3,264.8 M765.9,313.5 L755.9,331.1 M753.0,335.9 L732.5,370.9 M696.1,434.5 L686.4,451.9 M909.4,107.6 L890.5,139.7 M861.0,191.4 L850.8,207.1 M820.2,261.9 L796.9,302.4 M773.0,343.8 L767.4,352.2 M760.1,366.0 L745.7,392.8 M735.4,408.8 L729.0,420.7 M721.2,433.4 L702.4,464.2 M932.3,120.8 L914.6,149.9 M903.9,169.9 L888.4,197.6 M844.1,273.5 L837.8,285.5 M816.4,321.5 L811.3,330.5 M780.6,383.4 L763.8,411.9 M762.2,415.3 L748.2,440.1 M924.7,187.5 L900.7,230.7 M873.5,276.3 L859.1,300.8 M850.4,316.4 L840.8,332.9 M832.6,347.2 L827.0,358.6 M822.9,363.9 L801.7,398.9 M748.3,493.2 L729.4,524.5 M917.7,233.9 L906.5,255.3 M894.3,274.4 L876.9,306.1 M844.0,361.5 L824.8,396.2 M794.1,448.0 L780.2,470.4 M770.0,489.8 L751.3,522.3 M965.6,183.5 L950.2,209.2 M919.2,263.9 L894.8,306.2 M893.5,308.5 L881.3,329.6 M869.4,350.3 L848.7,385.1 M806.3,459.6 L793.7,481.8 M969.1,208.5 L963.4,220.1 M941.2,256.9 L923.6,287.6 M860.7,396.4 L841.9,430.2 M811.4,481.6 L800.3,502.4 M1014.6,168.3 L988.9,210.9 M955.1,271.2 L937.5,301.7 M925.6,322.4 L915.0,340.7 M913.3,343.8 L905.8,357.8 M892.0,380.5 L869.6,420.0 M867.5,423.0 L857.7,440.9 M851.9,450.1 L838.5,473.3 M835.0,479.3 L810.3,520.6 M1031.9,178.3 L1012.8,212.1 M1007.9,219.8 L984.3,260.6 M980.4,267.5 L965.0,294.8 M959.6,303.5 L940.4,336.7 M908.8,391.6 L901.4,402.9 M886.8,429.6 L863.2,469.5 M1050.3,188.9 L1044.2,201.2 M1038.8,208.8 L1021.5,239.9 M1010.2,258.3 L997.8,279.9 M994.6,285.4 L985.7,301.5 M878.5,486.5 L865.1,509.9 M846.9,541.1 L824.6,580.2 M1057.0,230.0 L1045.5,249.9 M1039.0,261.3 L1017.1,298.0 M1013.8,304.9 L993.0,341.5 M979.5,364.3 L973.0,377.3 M967.3,385.3 L951.2,413.3 M923.7,461.0 L913.7,479.9 M883.0,531.5 L874.4,547.3 M871.9,550.6 L854.8,578.3 M1068.4,258.3 L1053.8,285.5 M1046.9,295.6 L1025.3,334.3 M1018.8,344.3 L1008.7,360.1 M962.9,441.0 L939.2,482.8 M901.5,547.4 L885.2,577.2 M1033.1,375.3 L1027.2,384.0 M971.5,482.1 L947.6,523.6 M1137.7,239.4 L1124.9,259.9 M1068.0,360.1 L1045.5,398.3 M1039.4,409.6 L1019.5,443.2 M1009.0,462.2 L995.7,484.2 M990.2,494.9 L971.3,528.2 M937.5,586.0 L930.6,596.6 M793.9,40.9 L804.0,46.7 M888.0,95.2 L915.4,111.6 M1012.7,167.2 L1023.7,173.1 M1093.9,214.1 L1128.9,234.6 M781.9,61.7 L819.7,83.1 M841.6,96.2 L884.0,121.7 M885.4,121.4 L927.6,144.7 M961.4,165.3 L974.7,172.1 M1121.7,257.9 L1148.8,273.1 M769.6,82.9 L799.3,100.7 M814.4,108.8 L851.4,130.9 M864.9,138.0 L895.3,155.9 M1044.4,241.6 L1079.0,261.6 M1085.7,265.4 L1115.1,281.7 M1120.8,285.7 L1160.1,309.3 M756.7,105.3 L784.1,122.1 M826.3,145.5 L857.8,164.6 M950.1,217.0 L989.0,240.2 M775.9,154.6 L791.6,164.5 M918.1,236.7 L943.2,250.6 M994.9,281.0 L1033.2,304.1 M1081.7,331.1 L1114.4,348.9 M728.7,153.8 L765.4,176.0 M807.1,199.0 L833.7,215.1 M892.1,248.1 L904.9,256.1 M919.8,264.1 L933.1,271.7 M947.2,279.9 L986.4,303.1 M1052.6,340.8 L1082.2,359.0 M709.6,186.9 L729.2,197.7 M846.0,265.6 L884.0,287.8 M941.7,320.9 L966.8,335.6 M1017.0,364.3 L1056.7,386.7 M792.0,261.3 L802.9,267.6 M838.5,288.1 L852.7,295.9 M854.9,297.6 L867.5,305.6 M922.7,336.7 L953.6,355.3 M851.2,329.6 L878.3,345.3 M915.3,366.7 L948.9,386.1 M665.6,263.0 L698.1,281.2 M653.5,284.0 L675.3,295.8 M702.0,312.0 L733.6,329.6 M751.1,340.3 L770.8,352.5 M790.8,363.2 L830.1,385.3 M878.6,413.9 L906.5,429.5 M917.3,436.2 L959.8,461.0 M636.3,313.8 L651.6,321.6 M665.5,330.7 L677.3,336.7 M700.9,351.1 L736.4,372.7 M741.0,374.3 L754.2,382.6 M813.8,416.3 L834.6,427.4 M884.3,457.0 L902.3,468.2 M936.0,486.8 L960.5,501.6 M979.5,512.0 L1012.3,529.8 M780.2,435.6 L808.0,451.2 M818.0,457.4 L834.1,467.3 M931.9,523.2 L953.5,536.7 M969.8,545.1 L1001.5,562.5 M755.1,453.8 L770.1,462.9 M789.2,473.4 L820.9,491.8 M874.1,522.4 L909.4,543.2 M923.4,551.0 L934.5,557.7 M642.3,415.3 L658.5,424.0 M716.8,458.3 L758.3,482.6 M758.4,482.4 L782.0,495.1 M802.6,507.9 L815.2,515.2 M828.9,523.0 L838.4,529.0 M870.6,547.2 L914.3,571.6" stroke="#454545" stroke-width="1" fill="none" clip-path="url(#z2)"/>
<clipPath id="z5"><polygon points="677.0,430.0 760.0,425.0 830.0,440.0 900.0,400.0 950.0,330.0 950.0,760.0 677.0,760.0"/></clipPath>
<path d="M548.5,137.0 L544.2,161.9 M539.6,179.0 L533.8,205.7 M510.8,314.8 L504.6,345.7 M503.2,350.5 L496.8,377.5 M492.4,401.3 L485.7,436.7 M453.6,583.8 L451.0,596.3 M447.8,611.1 L441.7,640.5 M428.1,703.4 L421.9,732.2 M419.6,743.7 L416.7,755.3 M416.2,759.7 L409.3,795.8 M566.4,164.9 L559.5,198.7 M547.9,252.0 L540.5,291.1 M528.4,343.4 L522.0,376.0 M508.1,439.2 L504.7,450.9 M504.6,455.5 L495.7,493.9 M478.2,579.7 L472.3,602.6 M471.5,611.4 L467.3,635.8 M453.1,697.7 L448.9,721.0 M447.6,723.8 L444.4,738.6 M432.0,797.4 L427.5,820.8 M590.1,145.8 L582.0,181.0 M580.1,192.8 L571.4,231.7 M563.7,270.0 L561.1,285.4 M548.7,340.5 L541.7,373.5 M540.6,378.9 L538.5,390.6 M535.1,404.6 L531.7,416.3 M527.7,439.1 L522.0,470.7 M516.0,494.5 L512.3,508.6 M500.0,569.5 L495.2,594.0 M489.9,617.1 L487.2,626.3 M611.1,193.6 L608.4,208.5 M586.2,310.7 L581.2,332.6 M577.5,351.7 L570.3,387.3 M542.4,516.6 L539.0,533.0 M536.2,545.9 L532.8,563.0 M528.8,580.5 L523.3,610.2 M522.5,610.5 L520.0,622.4 M633.6,220.6 L627.4,251.0 M607.8,342.0 L600.2,376.0 M598.5,385.7 L593.5,414.1 M589.9,426.2 L582.5,456.7 M581.4,466.4 L576.9,492.3 M572.9,506.4 L567.7,528.5 M566.4,536.9 L560.4,565.0 M543.8,643.2 L538.3,671.7 M527.7,718.9 L522.4,747.2 M519.4,758.0 L514.5,780.0 M667.5,162.3 L662.9,188.4 M656.9,212.2 L653.7,224.0 M643.9,273.3 L641.0,283.2 M640.2,291.0 L637.3,302.9 M623.5,369.2 L617.8,397.2 M613.0,418.7 L604.8,454.1 M594.1,507.6 L588.8,534.9 M584.2,554.2 L580.9,572.2 M575.2,596.5 L569.1,623.7 M565.2,643.6 L556.6,681.7 M551.9,706.2 L547.0,727.3 M543.6,745.1 L536.1,783.8 M666.6,299.6 L658.5,336.6 M630.8,468.4 L625.8,491.7 M622.0,509.7 L616.0,540.6 M613.5,549.7 L608.1,578.8 M602.4,601.6 L595.3,633.7 M593.3,644.4 L587.7,671.1 M565.7,774.3 L558.3,805.5 M718.1,173.0 L712.9,197.0 M697.3,270.5 L690.2,306.9 M672.6,387.0 L666.0,419.4 M660.5,443.7 L657.8,460.5 M629.0,591.8 L624.3,612.7 M622.4,622.9 L616.1,657.5 M595.3,750.3 L589.9,773.7 M585.9,794.6 L580.3,822.6 M579.0,827.1 L577.5,835.1 M576.4,839.5 L570.7,864.2 M717.9,279.5 L711.1,316.0 M698.0,373.3 L692.6,399.9 M684.0,438.9 L676.3,473.0 M676.6,474.1 L674.2,485.2 M669.3,508.2 L666.2,521.4 M652.7,586.5 L650.4,598.6 M641.1,640.9 L635.9,661.3 M614.9,764.1 L608.7,792.4 M604.5,812.9 L601.2,830.2 M760.9,182.1 L755.7,203.4 M754.5,212.2 L747.5,244.7 M740.0,280.4 L735.4,303.5 M731.5,320.0 L728.0,334.7 M715.0,397.9 L710.1,418.0 M708.3,429.3 L700.1,466.9 M699.3,471.7 L692.0,506.0 M659.4,659.2 L655.5,678.4 M651.4,697.3 L649.3,708.8 M646.5,720.3 L640.5,753.1 M619.8,845.6 L612.7,879.1 M766.0,279.3 L757.9,315.7 M757.4,319.7 L750.6,347.3 M745.6,375.2 L740.9,397.6 M739.5,403.8 L736.6,414.3 M735.2,424.3 L731.7,437.2 M728.6,455.3 L720.2,490.4 M693.1,622.0 L685.8,656.4 M681.4,677.1 L676.3,696.6 M664.4,757.3 L659.5,778.7 M658.3,785.9 L651.2,823.6 M780.9,347.5 L777.1,361.2 M760.1,445.4 L757.4,459.0 M752.8,480.1 L744.2,515.6 M714.0,662.4 L712.0,673.2 M710.1,680.7 L702.2,717.8 M699.6,730.1 L692.4,767.6 M839.2,198.8 L835.8,217.6 M830.8,238.0 L824.3,269.3 M810.8,332.1 L802.4,368.0 M765.4,546.0 L758.8,575.5 M755.4,592.8 L751.2,612.1 M750.6,615.5 L746.2,638.3 M744.7,643.4 L737.0,680.6 M727.6,723.7 L721.8,750.8 M717.5,771.3 L711.4,798.4 M707.1,820.0 L705.2,829.4 M702.9,840.0 L701.9,848.0 M698.9,859.0 L694.4,875.8 M867.3,204.7 L860.2,236.3 M842.3,322.5 L836.1,347.9 M820.4,425.3 L817.0,443.8 M812.4,462.8 L806.1,492.4 M801.4,514.8 L798.8,528.1 M783.5,599.0 L778.3,625.7 M774.1,643.0 L770.2,664.0 M882.4,246.0 L874.8,282.0 M874.0,285.5 L870.4,298.5 M868.3,312.6 L863.1,340.0 M859.7,353.2 L853.1,382.3 M849.9,399.1 L844.6,425.6 M819.3,543.2 L815.8,559.8 M805.6,607.7 L799.7,634.1 M797.8,644.1 L791.8,674.4 M786.9,695.7 L785.5,706.4 M783.6,711.0 L776.0,744.2 M771.7,767.2 L770.7,775.5 M766.0,793.7 L762.5,809.5 M759.0,826.9 L755.4,843.6 M892.9,281.7 L885.3,317.9 M873.3,373.5 L869.0,391.2 M850.6,480.7 L842.5,517.1 M839.2,534.0 L832.1,570.4 M831.0,572.9 L825.4,600.8 M823.5,608.0 L821.0,621.8 M816.9,639.1 L808.3,675.3 M799.0,723.1 L793.9,744.7 M771.8,851.4 L764.5,886.5 M929.2,217.9 L923.8,240.2 M921.0,256.6 L916.1,284.2 M914.6,286.6 L911.2,301.4 M908.9,313.4 L901.4,349.6 M898.0,364.8 L894.5,380.7 M890.0,402.4 L882.3,434.3 M881.3,443.3 L874.0,476.6 M865.4,518.1 L863.7,529.6 M861.6,535.9 L856.5,560.3 M846.8,605.4 L838.5,644.5 M836.6,653.4 L829.6,688.5 M828.3,692.7 L823.8,717.7 M921.8,378.4 L915.7,407.3 M899.9,481.5 L895.8,501.9 M885.9,547.4 L884.1,559.0 M881.0,570.3 L875.7,591.7 M876.4,591.9 L868.5,627.7 M866.3,639.4 L861.2,665.2 M857.5,680.8 L848.9,719.3 M848.8,721.9 L844.3,738.6 M833.3,794.9 L826.5,827.7 M978.2,228.3 L973.7,251.0 M969.1,271.3 L962.9,299.6 M953.0,347.0 L946.8,371.3 M938.6,414.6 L933.1,445.2 M928.2,463.3 L921.2,498.6 M910.4,547.5 L902.3,584.9 M894.3,623.1 L886.0,658.6 M883.6,673.2 L879.8,688.4 M844.3,858.4 L838.4,881.9 M1001.0,233.2 L992.6,269.6 M976.5,348.8 L971.9,370.3 M963.8,408.3 L955.3,446.4 M946.7,488.7 L941.8,509.2 M929.3,570.6 L928.0,579.3 M913.0,647.2 L908.8,663.0 M907.6,672.8 L900.3,704.0 M889.9,755.9 L886.0,777.4 M863.8,878.7 L858.6,906.4 M1020.2,274.1 L1017.2,286.5 M1008.2,330.6 L1001.1,360.3 M983.3,447.6 L979.9,466.3 M959.0,562.1 L954.3,588.3 M935.7,671.9 L929.3,704.0 M905.5,813.7 L902.1,827.0 M1003.3,480.6 L998.9,499.1 M996.8,511.2 L994.6,523.6 M994.1,524.0 L988.8,551.0 M987.0,557.3 L981.2,579.9 M977.7,601.2 L974.4,620.7 M971.6,629.6 L966.2,654.3 M949.9,731.7 L946.0,746.6 M943.3,762.7 L938.5,787.7 M936.9,793.0 L930.5,819.7 M920.3,871.0 L915.2,892.4 M915.0,895.9 L908.9,925.5 M1065.2,288.5 L1062.2,303.5 M1052.5,348.5 L1045.2,382.3 M1027.5,466.2 L1025.5,478.5 M1023.2,486.0 L1020.0,501.5 M1017.1,515.0 L1014.3,529.5 M994.7,620.2 L991.7,636.7 M969.1,740.9 L965.9,752.3 M1070.9,353.8 L1066.6,373.2 M1063.9,386.5 L1056.2,418.3 M1020.8,589.5 L1017.2,609.9 M1007.3,653.1 L999.1,689.4 M974.3,808.2 L971.9,818.8 M963.5,858.9 L956.0,895.1 M1122.3,258.9 L1115.1,295.2 M1109.8,317.5 L1107.3,332.1 M1103.8,346.0 L1095.9,382.6 M1079.7,459.3 L1075.3,476.4 M1062.2,541.5 L1054.1,578.6 M1041.0,641.4 L1038.2,652.4 M1037.6,657.2 L1031.6,682.8 M1027.6,704.4 L1022.5,723.5 M984.5,907.2 L977.1,939.5 M1146.4,264.1 L1137.2,302.7 M1136.1,312.4 L1128.7,347.7 M1125.5,362.3 L1118.5,396.5 M1093.9,511.1 L1088.2,540.1 M1085.9,548.6 L1082.8,563.7 M1081.8,567.9 L1078.0,584.5 M1049.6,719.5 L1045.9,733.0 M1045.2,740.1 L1043.4,749.2 M1042.7,752.0 L1036.2,783.5 M1026.2,829.7 L1021.3,854.8 M1018.9,863.7 L1016.7,878.8 M1011.6,898.4 L1007.5,919.2 M1176.5,270.5 L1172.2,288.2 M1164.6,326.5 L1163.1,337.6 M1159.3,351.8 L1154.1,372.0 M1153.8,377.5 L1148.0,404.6 M1143.8,424.6 L1141.9,432.4 M1112.9,569.7 L1106.8,598.4 M1087.0,691.9 L1081.0,716.9 M1079.5,727.2 L1074.5,748.3 M1072.5,760.2 L1067.3,786.0 M1063.3,803.3 L1059.4,817.1 M1057.9,828.8 L1051.9,857.8 M1048.6,872.5 L1046.6,881.7 M1041.8,904.4 L1035.0,934.2 M1180.3,339.5 L1179.3,348.2 M1174.8,365.3 L1172.4,375.8 M1165.5,409.2 L1162.2,425.3 M1146.2,499.8 L1139.8,528.3 M1137.1,542.6 L1131.8,563.3 M1128.2,584.7 L1122.0,613.4 M1052.9,938.8 L1048.8,954.5 M648.5,158.3 L660.4,160.5 M670.8,163.0 L699.4,168.5 M818.5,194.4 L851.6,201.4 M868.9,205.1 L876.9,207.3 M933.9,218.9 L952.5,223.3 M1136.2,261.9 L1162.3,267.9 M1172.3,269.6 L1191.8,274.4 M856.1,233.8 L872.5,237.8 M885.2,239.9 L905.3,244.2 M1063.6,277.9 L1087.4,283.8 M1156.2,297.5 L1189.1,304.5 M537.1,190.7 L551.5,194.1 M560.7,195.7 L571.8,198.0 M691.3,223.5 L706.2,226.6 M741.2,234.1 L767.8,240.1 M790.8,244.6 L811.5,248.2 M990.8,287.1 L1013.5,291.3 M1130.8,316.9 L1145.3,320.1 M1165.7,324.3 L1185.5,328.2 M531.5,217.1 L553.6,222.3 M634.7,239.0 L650.6,243.1 M653.9,243.1 L683.1,249.8 M781.6,270.3 L804.1,274.5 M812.8,276.9 L829.1,281.1 M925.7,300.9 L959.6,308.8 M978.6,312.2 L987.3,314.4 M1065.4,330.6 L1103.8,339.6 M1104.0,338.8 L1136.8,345.8 M1182.9,355.6 L1197.7,359.3 M596.1,249.7 L629.2,257.1 M630.0,257.0 L639.8,259.3 M658.7,263.0 L668.4,264.3 M710.9,274.2 L734.8,279.4 M738.1,279.9 L765.3,286.6 M771.6,287.1 L796.8,292.3 M911.6,316.8 L930.4,320.8 M978.0,330.9 L1004.5,337.0 M1071.4,350.8 L1108.2,359.6 M522.6,259.3 L546.2,264.8 M549.3,264.9 L574.9,269.7 M675.1,291.7 L694.8,296.1 M706.4,298.3 L743.1,305.7 M811.3,320.6 L842.0,327.6 M848.7,328.6 L881.6,336.4 M907.1,341.0 L915.5,343.6 M1070.2,375.7 L1089.7,379.9 M1117.6,385.7 L1128.4,388.0 M1157.3,394.2 L1196.1,402.7 M559.3,289.0 L597.2,297.8 M635.8,305.2 L674.1,314.2 M689.3,316.6 L713.2,321.7 M776.4,335.1 L812.5,343.3 M830.2,346.5 L865.6,354.0 M889.5,359.2 L905.2,363.2 M924.3,366.6 L947.4,372.0 M959.7,374.1 L975.1,376.6 M1094.2,402.7 L1102.2,403.7 M1186.8,422.4 L1210.4,427.1 M569.2,311.0 L581.4,313.7 M586.7,314.7 L603.0,319.0 M649.6,328.1 L675.5,334.3 M710.2,341.0 L733.0,345.8 M752.3,349.9 L783.2,355.6 M971.9,396.6 L984.1,399.6 M1062.2,415.8 L1085.5,420.6 M558.2,337.1 L586.1,342.0 M606.9,347.4 L641.4,354.2 M692.2,365.6 L706.3,369.0 M755.0,378.9 L775.7,384.1 M776.5,383.5 L797.6,387.0 M1168.7,466.8 L1205.2,474.9 M549.9,368.0 L575.0,373.4 M603.7,379.4 L641.2,387.0 M648.2,388.9 L682.2,396.7 M710.2,402.1 L736.2,408.1 M738.2,408.0 L767.1,415.1 M776.9,416.3 L805.5,423.2 M862.5,434.4 L893.7,440.5 M919.7,446.6 L948.5,451.9 M967.4,456.7 L977.3,457.9 M982.1,459.9 L1013.1,467.5 M1073.3,479.2 L1099.9,485.6 M1127.1,490.7 L1151.7,495.1 M1159.1,497.5 L1197.4,505.2 M571.8,391.8 L603.3,399.5 M682.8,415.4 L710.6,420.7 M733.8,426.2 L742.2,427.2 M845.3,450.0 L859.0,453.5 M868.9,455.0 L906.1,463.1 M913.6,464.5 L944.1,470.8 M965.3,475.5 L999.2,482.0 M1058.1,495.2 L1091.3,502.2 M1117.9,507.9 L1150.6,514.7 M627.3,423.0 L651.9,427.7 M654.3,428.7 L665.7,430.7 M682.1,434.7 L715.7,442.6 M760.0,451.2 L770.0,452.7 M804.1,460.6 L839.1,467.0 M864.1,473.3 L883.6,477.9 M899.2,480.8 L917.5,483.9 M938.3,489.1 L974.6,496.2 M1020.7,506.6 L1036.8,509.9 M1096.6,522.7 L1122.1,529.0 M1145.2,533.1 L1184.2,541.3 M529.6,434.2 L565.5,441.1 M570.5,442.9 L585.7,447.1 M814.7,494.8 L837.5,499.2 M1044.9,543.8 L1060.5,547.5 M1124.0,560.6 L1139.7,563.6 M483.3,443.9 L519.6,452.2 M525.7,452.9 L542.0,456.5 M606.3,470.1 L628.3,474.1 M766.0,504.0 L781.8,508.3 M793.9,509.9 L826.8,517.1 M834.9,518.6 L850.1,521.7 M951.9,543.5 L971.9,548.6 M1108.2,576.8 L1126.8,581.5 M476.4,476.2 L490.7,478.5 M499.5,481.1 L520.4,485.4 M635.5,510.0 L644.0,511.9 M668.7,517.1 L686.8,521.4 M702.8,524.3 L725.2,529.2 M774.4,539.5 L808.2,546.5 M853.5,556.3 L876.4,560.2 M992.0,585.8 L1021.6,591.1 M1138.6,616.9 L1152.9,620.4 M472.0,497.1 L487.4,499.8 M493.9,501.7 L514.7,506.5 M543.0,512.2 L552.6,513.2 M607.6,525.9 L634.7,531.5 M647.2,534.3 L665.2,537.4 M669.3,539.0 L683.8,541.3 M782.4,563.1 L804.4,566.8 M824.5,572.0 L844.1,575.3 M909.8,590.1 L944.1,596.9 M1118.8,634.6 L1133.9,636.8 M508.9,532.2 L547.2,539.7 M650.9,562.4 L686.9,569.5 M1098.3,657.5 L1109.5,660.0 M1132.3,664.7 L1150.9,668.8 M461.3,547.5 L477.7,550.5 M537.3,563.7 L552.2,567.2 M577.6,572.3 L614.3,579.6 M617.1,580.7 L630.8,584.0 M657.7,589.3 L684.1,594.6 M719.6,602.4 L732.6,606.0 M751.3,609.2 L778.0,614.4 M836.6,627.3 L864.5,632.3 M920.1,645.1 L949.0,651.6 M975.9,656.9 L998.3,662.1 M1076.2,678.2 L1113.9,686.6 M1120.2,687.6 L1131.5,690.9 M536.3,587.0 L544.5,588.4 M611.3,602.9 L634.4,607.5 M686.3,618.9 L723.3,626.6 M747.8,632.0 L760.5,634.1 M855.6,654.9 L868.8,658.7 M892.2,662.7 L902.1,665.1 M907.2,665.8 L928.8,669.6 M967.8,678.7 L986.7,682.9 M1095.4,705.8 L1129.6,712.5 M449.9,600.8 L463.0,603.6 M493.4,610.1 L514.8,613.9 M643.9,642.1 L662.0,646.8 M679.9,649.7 L715.2,657.8 M718.8,658.0 L730.8,660.3 M821.1,679.7 L837.4,682.7 M904.3,697.4 L925.0,701.3 M996.1,716.9 L1019.4,721.7 M1076.4,734.0 L1098.3,739.6 M1102.5,739.5 L1125.4,744.3 M472.6,624.5 L490.0,627.8 M702.6,673.4 L738.8,681.2 M791.1,692.2 L812.1,697.5 M827.2,699.9 L861.8,707.1 M912.1,717.9 L938.0,724.3 M980.4,732.4 L1014.6,740.6 M1116.6,761.4 L1152.3,769.3 M532.0,665.9 L554.1,671.6 M643.8,689.7 L659.9,692.7 M686.5,698.7 L718.2,704.9 M733.4,708.7 L762.9,714.4 M766.4,715.7 L785.5,720.4 M853.1,734.1 L870.9,737.8 M1047.5,775.5 L1078.7,781.2 M434.6,673.0 L450.7,676.5 M465.7,679.6 L501.8,687.2 M514.9,690.1 L534.6,694.0 M550.5,697.6 L564.4,700.6 M592.0,706.5 L615.1,710.4 M630.1,714.6 L648.7,718.5 M704.2,730.3 L713.9,732.4 M731.7,736.1 L757.0,741.2 M972.4,787.3 L990.3,791.3 M1011.2,795.6 L1043.2,801.8 M1100.9,814.6 L1128.5,820.6 M588.5,729.8 L606.1,733.7 M612.6,734.9 L650.6,743.8 M725.7,759.0 L743.3,762.7 M830.6,781.3 L864.5,787.9 M927.5,801.9 L966.2,810.9 M1058.3,829.7 L1075.1,832.4 M1090.8,836.6 L1115.0,841.8 M424.9,718.5 L453.7,724.6 M457.6,725.4 L492.9,733.8 M520.0,738.7 L558.0,747.1 M599.4,755.6 L611.6,757.8 M639.1,764.0 L671.5,771.5 M671.9,771.0 L697.0,775.4 M771.0,792.0 L798.2,797.8 M863.3,811.7 L882.5,815.2 M887.8,816.9 L898.4,819.6 M963.6,833.0 L997.8,841.0 M512.3,763.1 L534.2,767.4 M628.6,787.9 L638.1,789.9 M650.6,792.5 L676.2,798.2 M948.7,855.9 L970.4,860.1 M988.7,864.4 L1023.9,872.2 M1079.1,883.6 L1087.2,885.4 M451.5,783.6 L484.1,791.3 M536.5,801.7 L575.7,809.1 M593.0,813.7 L607.7,817.8 M623.4,820.1 L640.5,823.2 M681.4,832.5 L700.3,837.5 M820.1,861.9 L855.4,870.2 M925.8,884.4 L951.7,889.4 M958.5,891.4 L969.6,893.4 M1035.5,907.7 L1066.4,915.1 M1075.7,916.3 L1086.6,918.0 M408.0,798.0 L446.3,805.9 M468.3,810.8 L478.3,813.7 M488.1,815.0 L501.3,818.3 M563.9,831.1 L578.2,833.8 M585.5,835.7 L618.2,842.4 M666.6,852.9 L695.0,858.4 M719.6,864.2 L757.8,873.0 M866.4,895.4 L886.2,898.7" stroke="#444444" stroke-width="1" fill="none" clip-path="url(#z5)"/>
<clipPath id="z4"><polygon points="677.0,760.0 1486.0,760.0 1486.0,976.0 677.0,976.0"/></clipPath>
<path d="M434.3,220.8 L434.3,246.0 M434.3,356.0 L434.3,396.9 M434.3,499.5 L434.3,573.6 M434.3,685.7 L434.8,774.8 M434.3,788.5 L434.5,831.0 M434.3,909.7 L434.3,943.3 M434.3,951.7 L435.2,980.1 M434.3,1001.1 L434.3,1087.7 M434.3,1089.2 L435.3,1139.1 M434.3,1140.7 L435.2,1206.7 M434.3,1211.7 L433.7,1280.3 M434.3,1291.8 L434.1,1341.4 M434.3,1426.1 L433.6,1474.1 M434.3,1492.5 L434.1,1560.9 M451.1,243.5 L451.2,321.9 M451.1,429.3 L450.4,499.4 M451.1,510.9 L451.5,596.6 M451.1,610.1 L450.6,691.9 M451.1,713.2 L450.7,740.7 M451.1,777.8 L452.0,862.0 M451.1,863.4 L451.3,929.5 M451.1,1002.8 L452.1,1079.4 M451.1,1097.4 L451.9,1150.4 M451.1,1272.4 L451.8,1342.9 M451.1,1360.8 L450.3,1387.6 M463.7,220.8 L464.1,271.7 M463.7,292.5 L463.8,364.6 M463.7,372.5 L463.0,430.9 M463.7,531.2 L464.3,567.5 M463.7,583.0 L463.1,668.3 M463.7,680.1 L464.2,721.3 M463.7,729.3 L462.7,799.2 M463.7,812.0 L464.4,892.7 M463.7,908.7 L463.5,998.3 M463.7,1003.2 L464.0,1076.2 M463.7,1092.6 L463.3,1113.8 M463.7,1120.1 L463.1,1185.3 M463.7,1203.1 L464.4,1228.3 M463.7,1356.3 L463.7,1416.2 M463.7,1439.7 L463.1,1527.4 M478.0,312.9 L477.2,338.7 M478.0,352.1 L477.9,429.4 M478.0,530.7 L477.8,554.4 M478.0,564.3 L477.2,610.8 M478.0,627.1 L478.5,683.4 M478.0,695.9 L478.1,727.2 M478.0,743.9 L477.7,808.3 M478.0,827.4 L477.2,888.2 M478.0,1003.6 L477.5,1081.2 M478.0,1088.6 L477.9,1168.9 M478.0,1182.7 L477.4,1203.9 M478.0,1223.8 L477.3,1298.8 M478.0,1369.7 L477.2,1450.7 M478.0,1470.0 L478.9,1540.0 M492.6,220.8 L492.8,277.5 M492.6,279.2 L491.8,358.9 M492.6,371.5 L493.1,404.7 M492.6,423.6 L493.6,454.9 M492.6,470.6 L492.1,503.6 M492.6,505.4 L491.9,571.5 M492.6,588.5 L493.1,676.1 M492.6,679.7 L491.7,703.8 M492.6,722.1 L491.9,805.6 M492.6,806.8 L492.0,855.3 M492.6,875.7 L491.9,903.0 M492.6,919.3 L493.6,948.4 M492.6,955.0 L493.6,1006.6 M492.6,1020.3 L493.0,1048.5 M492.6,1111.6 L493.5,1169.9 M492.6,1189.3 L492.8,1226.1 M492.6,1271.4 L491.7,1301.2 M492.6,1323.9 L493.5,1353.7 M492.6,1372.9 L493.0,1434.3 M492.6,1454.5 L492.5,1489.0 M492.6,1503.9 L492.2,1586.2 M504.5,220.8 L504.7,248.3 M504.5,262.8 L503.9,315.3 M504.5,320.6 L504.5,381.5 M504.5,404.4 L503.6,457.1 M504.5,469.3 L503.9,493.1 M504.5,541.4 L504.2,582.7 M504.5,675.9 L505.2,741.0 M504.5,752.3 L505.1,782.0 M504.5,783.5 L504.9,816.1 M504.5,827.7 L504.7,893.4 M504.5,957.6 L505.5,1001.4 M504.5,1083.5 L504.1,1119.3 M504.5,1128.2 L505.3,1204.4 M504.5,1216.5 L504.3,1297.2 M504.5,1452.5 L505.3,1493.9 M504.5,1514.0 L505.2,1570.9 M516.0,298.1 L515.4,348.0 M516.0,424.1 L515.0,490.6 M516.0,494.7 L515.2,536.0 M516.0,633.7 L516.1,712.3 M516.0,727.5 L515.7,786.1 M516.0,1024.8 L516.6,1044.9 M516.0,1108.9 L516.7,1166.9 M516.0,1178.3 L515.8,1261.2 M516.0,1276.6 L515.9,1317.6 M516.0,1383.9 L515.7,1417.8 M516.0,1462.9 L516.3,1520.7 M530.9,220.8 L530.3,300.2 M530.9,302.0 L530.4,380.5 M530.9,403.0 L531.4,435.1 M530.9,450.1 L530.3,474.7 M530.9,498.4 L530.0,581.3 M530.9,748.2 L531.4,826.4 M530.9,826.8 L531.9,895.4 M530.9,915.0 L531.1,966.7 M530.9,982.1 L530.4,1002.7 M530.9,1020.3 L531.4,1104.4 M530.9,1120.3 L531.1,1150.5 M530.9,1169.4 L530.6,1218.7 M530.9,1226.6 L531.1,1258.4 M530.9,1261.2 L531.4,1346.3 M530.9,1354.9 L530.0,1440.6 M545.4,220.8 L545.0,287.1 M545.4,291.9 L544.5,357.7 M545.4,361.7 L545.4,411.9 M545.4,480.9 L546.4,505.6 M545.4,520.7 L544.8,609.7 M545.4,617.9 L544.9,654.3 M545.4,744.6 L544.9,818.3 M545.4,818.4 L544.9,898.6 M545.4,1096.1 L544.7,1120.1 M545.4,1123.0 L544.5,1152.4 M545.4,1159.8 L545.4,1239.7 M545.4,1260.9 L545.5,1282.0 M545.4,1367.7 L545.7,1454.9 M545.4,1460.3 L545.8,1482.4 M545.4,1486.9 L545.0,1509.3 M563.7,220.8 L564.1,280.4 M563.7,370.1 L563.3,435.5 M563.7,443.0 L562.9,493.1 M563.7,510.4 L563.9,534.2 M563.7,596.1 L564.2,642.4 M563.7,664.1 L563.8,689.8 M563.7,849.6 L563.2,916.5 M563.7,925.9 L563.3,1002.6 M563.7,1097.7 L564.7,1169.1 M563.7,1181.1 L563.7,1248.3 M563.7,1252.7 L564.2,1298.5 M563.7,1302.4 L563.6,1336.3 M563.7,1358.3 L564.4,1379.7 M563.7,1398.6 L563.5,1443.3 M563.7,1443.4 L564.4,1469.1 M563.7,1473.9 L564.1,1513.8 M577.0,220.8 L577.6,264.7 M577.0,274.1 L577.0,314.5 M577.0,318.3 L576.4,361.1 M577.0,374.3 L577.7,417.2 M577.0,418.7 L576.1,467.6 M577.0,475.0 L576.5,525.9 M577.0,535.4 L576.9,618.4 M577.0,704.7 L576.9,784.3 M577.0,784.9 L576.4,821.9 M577.0,842.5 L577.6,929.1 M577.0,936.6 L577.8,997.3 M577.0,1084.6 L576.9,1138.9 M577.0,1153.3 L576.4,1194.2 M577.0,1218.5 L576.4,1279.9 M577.0,1504.1 L577.6,1568.2 M594.9,279.3 L595.1,366.6 M594.9,388.1 L594.2,461.3 M594.9,465.2 L593.9,507.5 M594.9,524.0 L594.4,552.4 M594.9,682.8 L594.1,767.1 M594.9,776.2 L594.4,811.5 M594.9,833.1 L595.9,915.8 M594.9,1010.5 L595.1,1081.9 M594.9,1101.1 L594.0,1144.8 M594.9,1148.7 L595.3,1224.4 M594.9,1235.2 L594.0,1304.9 M594.9,1321.6 L594.8,1359.6 M594.9,1372.0 L594.7,1454.3 M594.9,1465.4 L594.5,1527.3 M613.8,220.8 L614.8,282.9 M613.8,302.8 L612.9,338.4 M613.8,410.6 L613.3,485.0 M613.8,485.9 L613.9,547.5 M613.8,566.8 L613.9,596.6 M613.8,600.4 L613.2,634.5 M613.8,696.2 L613.6,724.0 M613.8,724.8 L612.9,762.4 M613.8,786.4 L614.7,826.3 M613.8,829.8 L613.5,859.0 M613.8,938.1 L614.5,961.2 M613.8,972.0 L613.3,996.3 M613.8,1005.0 L614.3,1047.3 M613.8,1100.5 L614.2,1175.7 M613.8,1177.6 L614.5,1244.8 M613.8,1265.9 L614.7,1318.6 M613.8,1341.0 L613.5,1406.3 M613.8,1423.4 L613.0,1453.2 M613.8,1455.5 L613.2,1522.2 M626.9,220.8 L626.3,278.6 M626.9,491.3 L626.1,523.7 M626.9,526.0 L626.9,595.1 M626.9,604.0 L627.4,675.0 M626.9,698.9 L627.4,739.7 M626.9,832.1 L627.1,885.1 M626.9,894.9 L627.9,983.0 M626.9,1003.2 L627.3,1080.9 M626.9,1152.6 L626.7,1184.8 M626.9,1200.3 L627.7,1261.8 M626.9,1273.1 L627.9,1347.4 M645.3,299.5 L644.7,380.1 M645.3,393.9 L644.5,460.7 M645.3,513.6 L644.8,583.1 M645.3,591.3 L644.9,628.2 M645.3,641.8 L645.7,681.5 M645.3,688.0 L644.9,774.4 M645.3,792.4 L645.8,875.5 M645.3,883.8 L644.4,973.3 M645.3,973.4 L644.9,1031.4 M645.3,1041.8 L644.7,1090.4 M645.3,1104.0 L646.1,1170.7 M645.3,1177.1 L645.7,1230.4 M645.3,1240.6 L645.4,1301.2 M645.3,1303.4 L645.0,1392.1 M645.3,1464.5 L644.9,1492.7 M663.1,220.8 L662.4,287.7 M663.1,474.9 L662.8,496.1 M663.1,579.7 L662.2,626.5 M663.1,644.3 L663.0,666.6 M663.1,689.6 L663.5,726.1 M663.1,894.1 L663.4,963.2 M663.1,972.0 L662.3,1015.6 M663.1,1035.8 L663.1,1109.3 M663.1,1109.9 L664.0,1168.1 M663.1,1176.0 L663.9,1232.7 M663.1,1232.9 L663.6,1274.1 M663.1,1283.4 L662.4,1363.7 M663.1,1375.1 L663.2,1401.1 M663.1,1415.5 L663.2,1450.4 M663.1,1461.5 L662.4,1515.3 M674.2,220.8 L673.5,296.4 M674.2,356.6 L673.3,426.6 M674.2,432.2 L674.9,497.1 M674.2,608.2 L674.0,690.0 M674.2,693.6 L673.4,756.5 M674.2,758.5 L674.0,811.0 M674.2,822.8 L674.6,887.2 M674.2,930.6 L674.4,965.0 M674.2,980.6 L674.3,1007.6 M674.2,1024.7 L673.7,1049.9 M674.2,1103.7 L673.4,1180.5 M674.2,1190.6 L674.8,1216.1 M674.2,1216.1 L674.7,1263.3 M674.2,1288.1 L675.1,1310.4 M674.2,1381.4 L674.8,1428.4 M674.2,1437.3 L674.6,1457.5 M674.2,1481.6 L674.0,1532.5 M684.9,305.5 L684.2,325.9 M684.9,345.1 L685.8,426.0 M684.9,431.7 L684.8,465.5 M684.9,562.1 L684.7,597.9 M684.9,690.7 L685.8,724.3 M684.9,880.0 L685.8,969.5 M684.9,981.7 L685.0,1062.5 M684.9,1083.9 L684.9,1109.5 M684.9,1165.3 L685.3,1209.8 M684.9,1222.8 L684.7,1302.3 M684.9,1370.2 L684.4,1402.8 M684.9,1423.0 L684.7,1491.1 M684.9,1513.5 L685.8,1600.7 M704.4,352.7 L703.9,412.8 M704.4,436.4 L704.1,517.0 M704.4,532.3 L705.1,573.6 M704.4,576.4 L704.3,640.7 M704.4,811.8 L705.1,847.6 M704.4,861.1 L703.9,943.3 M704.4,963.8 L704.5,1039.4 M704.4,1050.3 L704.0,1122.0 M704.4,1141.1 L704.8,1209.8 M704.4,1216.3 L704.1,1271.4 M704.4,1281.8 L704.1,1308.0 M704.4,1392.9 L703.6,1433.6 M704.4,1455.7 L705.2,1528.9 M716.4,220.8 L717.0,247.2 M716.4,249.3 L715.8,299.9 M716.4,387.3 L715.8,423.6 M716.4,424.4 L716.5,444.5 M716.4,455.9 L715.6,539.4 M716.4,630.8 L716.3,667.2 M716.4,678.1 L715.5,717.9 M716.4,837.6 L715.6,905.7 M716.4,962.3 L716.5,998.7 M716.4,1066.1 L715.7,1155.4 M716.4,1178.4 L715.8,1246.8 M716.4,1263.3 L715.7,1296.6 M716.4,1307.0 L716.4,1394.7 M716.4,1410.1 L716.0,1476.0 M731.3,220.8 L730.4,261.5 M731.3,351.0 L731.5,385.0 M731.3,409.1 L731.3,436.6 M731.3,456.5 L731.7,478.5 M731.3,489.0 L731.8,521.5 M731.3,534.3 L731.8,592.0 M731.3,649.5 L731.4,723.8 M731.3,730.1 L731.0,816.1 M731.3,901.2 L730.4,931.6 M731.3,944.1 L731.3,1023.4 M731.3,1047.9 L730.8,1089.2 M731.3,1104.3 L731.3,1156.9 M731.3,1181.1 L732.0,1262.5 M731.3,1274.7 L730.7,1329.4 M731.3,1344.3 L731.3,1399.4 M731.3,1403.8 L731.2,1468.8 M731.3,1470.2 L732.0,1528.0 M749.1,269.9 L748.6,300.1 M749.1,320.4 L749.3,373.8 M749.1,379.4 L748.6,417.9 M749.1,423.4 L749.0,454.5 M749.1,469.4 L749.3,528.0 M749.1,539.8 L748.6,619.6 M749.1,713.8 L749.9,792.8 M749.1,815.3 L748.9,858.5 M749.1,882.4 L748.1,935.2 M749.1,944.8 L749.7,1029.5 M749.1,1052.0 L749.1,1137.6 M749.1,1249.5 L749.5,1273.4 M749.1,1276.7 L748.6,1319.6 M749.1,1322.3 L748.1,1352.9 M749.1,1372.8 L748.6,1422.0 M749.1,1429.9 L748.9,1491.8 M766.5,220.8 L765.7,242.5 M766.5,303.3 L765.8,334.0 M766.5,343.1 L766.5,393.8 M766.5,501.4 L766.2,551.2 M766.5,572.1 L767.1,630.3 M766.5,647.7 L766.9,729.8 M766.5,858.0 L766.0,945.3 M766.5,948.4 L765.8,1031.3 M766.5,1044.5 L765.6,1114.7 M766.5,1134.2 L767.3,1201.5 M766.5,1213.9 L766.1,1287.6 M766.5,1306.5 L766.8,1374.4 M766.5,1375.1 L765.9,1455.0 M766.5,1462.5 L766.3,1517.5 M780.0,220.8 L780.6,264.9 M780.0,309.9 L780.0,396.1 M780.0,467.6 L779.7,543.4 M780.0,564.6 L780.2,649.3 M780.0,668.1 L780.4,723.6 M780.0,727.5 L780.7,780.8 M780.0,861.8 L780.5,927.6 M780.0,943.8 L779.8,1033.6 M780.0,1112.4 L779.6,1144.0 M780.0,1211.5 L780.6,1258.3 M780.0,1263.2 L780.3,1343.8 M780.0,1365.3 L780.4,1400.2 M780.0,1400.6 L779.9,1448.0 M780.0,1460.7 L780.4,1539.2 M791.2,220.8 L791.2,273.1 M791.2,277.4 L792.2,328.5 M791.2,333.7 L791.6,384.8 M791.2,388.0 L790.4,467.3 M791.2,478.1 L791.7,541.7 M791.2,647.0 L791.3,671.3 M791.2,680.9 L790.5,713.9 M791.2,776.9 L791.5,864.6 M791.2,887.4 L791.2,948.2 M791.2,968.1 L792.1,1049.3 M791.2,1050.2 L791.7,1115.0 M791.2,1161.5 L791.3,1244.6 M791.2,1255.7 L791.3,1329.0 M791.2,1334.8 L790.8,1378.4 M791.2,1385.3 L790.5,1453.6 M791.2,1477.9 L792.0,1542.9 M807.2,220.8 L806.5,308.1 M807.2,308.4 L807.3,334.7 M807.2,355.6 L806.4,380.5 M807.2,476.2 L806.7,537.6 M807.2,545.6 L806.7,582.9 M807.2,591.5 L807.7,652.9 M807.2,659.9 L806.8,681.8 M807.2,750.6 L807.3,820.8 M807.2,920.1 L807.8,1009.2 M807.2,1124.7 L806.5,1150.5 M807.2,1161.1 L806.3,1190.2 M807.2,1203.7 L807.8,1230.1 M825.5,259.6 L825.6,314.7 M825.5,336.2 L826.2,358.7 M825.5,476.4 L824.5,554.1 M825.5,554.7 L825.7,613.3 M825.5,616.6 L825.9,691.0 M825.5,696.5 L825.5,786.5 M825.5,854.9 L825.2,877.5 M825.5,1082.5 L826.3,1131.4 M825.5,1143.2 L825.7,1221.3 M825.5,1239.9 L824.6,1283.9 M825.5,1299.6 L825.1,1348.3 M825.5,1356.3 L824.8,1385.0 M841.0,220.8 L841.3,304.1 M841.0,327.5 L840.0,379.4 M841.0,474.7 L841.1,512.6 M841.0,513.1 L840.6,540.2 M841.0,551.2 L841.5,584.9 M841.0,683.9 L841.1,754.8 M841.0,775.5 L840.0,812.7 M841.0,827.7 L840.3,855.8 M841.0,858.7 L841.9,940.8 M841.0,959.3 L841.3,1020.4 M841.0,1040.7 L840.5,1074.0 M841.0,1137.3 L840.3,1187.6 M841.0,1254.4 L840.3,1308.7 M841.0,1318.0 L840.6,1368.8 M841.0,1383.1 L840.1,1445.3 M841.0,1459.6 L841.9,1490.4 M841.0,1508.7 L841.5,1594.3 M857.1,220.8 L856.9,243.2 M857.1,254.1 L856.6,314.2 M857.1,314.7 L856.6,362.9 M857.1,363.4 L857.1,442.3 M857.1,456.8 L857.7,479.7 M857.1,485.6 L857.2,549.8 M857.1,558.7 L857.0,614.6 M857.1,716.3 L856.7,746.5 M857.1,760.6 L856.4,784.7 M857.1,833.7 L857.8,878.7 M857.1,988.6 L857.5,1031.7 M857.1,1033.2 L856.5,1098.6 M857.1,1114.0 L856.4,1161.4 M857.1,1243.8 L857.3,1264.0 M857.1,1307.5 L858.1,1373.6 M857.1,1379.3 L857.5,1401.5 M857.1,1422.3 L857.1,1450.1 M857.1,1457.0 L856.2,1486.1 M857.1,1496.8 L856.3,1526.2 M873.4,316.6 L873.1,347.1 M873.4,442.2 L873.4,491.3 M873.4,561.0 L874.0,597.5 M873.4,610.0 L873.8,652.7 M873.4,657.3 L873.3,739.3 M873.4,752.3 L872.8,825.4 M873.4,837.7 L872.7,858.8 M873.4,924.6 L873.4,964.2 M873.4,964.3 L874.0,1015.0 M873.4,1039.2 L873.2,1060.4 M873.4,1071.5 L873.5,1148.9 M873.4,1167.8 L873.5,1248.7 M873.4,1251.2 L874.0,1297.5 M873.4,1314.3 L874.2,1343.8 M873.4,1365.1 L873.5,1411.4 M892.9,257.2 L892.7,295.5 M892.9,300.7 L892.1,389.0 M892.9,487.9 L893.5,536.2 M892.9,555.1 L893.7,590.4 M892.9,599.3 L893.2,635.5 M892.9,645.4 L893.3,665.7 M892.9,732.8 L893.3,761.5 M892.9,776.7 L892.9,860.3 M892.9,871.6 L892.4,951.5 M892.9,960.7 L892.3,1038.4 M892.9,1058.8 L893.5,1147.9 M892.9,1165.2 L891.9,1228.4 M892.9,1314.6 L893.4,1394.6 M906.3,220.8 L905.7,305.3 M906.3,393.5 L907.1,418.1 M906.3,438.3 L905.4,488.3 M906.3,511.7 L906.3,551.6 M906.3,563.5 L905.7,617.7 M906.3,637.6 L907.1,680.3 M906.3,780.4 L907.0,824.6 M906.3,829.0 L907.2,898.1 M906.3,915.8 L906.2,1000.4 M906.3,1006.6 L905.7,1041.2 M906.3,1056.8 L906.8,1116.6 M906.3,1140.9 L906.4,1197.8 M906.3,1209.7 L906.0,1253.6 M906.3,1266.3 L906.7,1317.4 M906.3,1410.9 L906.2,1473.5 M924.1,220.8 L923.7,274.3 M924.1,298.0 L923.9,341.5 M924.1,358.0 L923.3,417.0 M924.1,417.7 L924.1,483.2 M924.1,490.2 L923.2,562.1 M924.1,566.1 L924.5,609.3 M924.1,630.1 L923.2,716.9 M924.1,733.6 L923.4,778.4 M924.1,788.3 L925.0,825.4 M924.1,834.6 L924.6,889.9 M924.1,898.8 L923.7,937.6 M924.1,950.0 L925.0,1014.1 M924.1,1022.8 L924.9,1057.8 M924.1,1079.2 L923.5,1103.4 M924.1,1122.9 L924.7,1191.3 M924.1,1212.9 L924.7,1290.0 M924.1,1296.5 L923.9,1381.7 M924.1,1480.1 L924.3,1537.7 M941.1,220.8 L941.0,307.7 M941.1,374.2 L941.6,428.4 M941.1,436.0 L940.3,464.6 M941.1,601.8 L940.3,668.9 M941.1,671.8 L941.5,698.5 M941.1,722.1 L941.8,768.9 M941.1,788.7 L942.0,877.3 M941.1,887.6 L941.2,963.5 M941.1,982.3 L940.3,1052.7 M941.1,1113.5 L941.7,1177.1 M941.1,1243.9 L940.8,1324.1 M941.1,1329.4 L940.4,1351.8 M941.1,1364.7 L941.9,1418.5 M941.1,1434.4 L940.9,1490.6 M941.1,1513.4 L941.9,1563.0 M959.3,220.8 L958.5,245.6 M959.3,300.7 L958.5,376.2 M959.3,389.3 L958.3,472.2 M959.3,496.9 L958.3,583.3 M959.3,601.1 L959.1,664.8 M959.3,665.3 L959.8,689.6 M959.3,697.7 L958.7,728.7 M959.3,782.1 L959.2,818.2 M959.3,820.3 L959.9,867.4 M959.3,873.4 L959.1,938.1 M959.3,939.3 L958.7,996.7 M959.3,1056.1 L959.9,1078.3 M959.3,1100.7 L958.9,1139.7 M959.3,1155.6 L959.6,1196.9 M959.3,1203.7 L959.6,1233.1 M959.3,1370.7 L960.1,1418.4 M959.3,1433.0 L958.9,1514.2 M972.2,220.8 L972.7,276.1 M972.2,282.2 L972.5,355.0 M972.2,357.4 L972.5,414.3 M972.2,434.1 L972.4,480.9 M972.2,600.6 L972.6,645.0 M972.2,650.6 L972.9,719.9 M972.2,721.4 L971.9,775.2 M972.2,781.6 L972.3,859.9 M972.2,862.8 L971.4,921.8 M972.2,930.2 L971.4,968.9 M972.2,1125.1 L971.8,1171.3 M972.2,1177.5 L972.2,1261.4 M972.2,1272.9 L971.8,1348.6 M972.2,1356.4 L972.0,1405.1 M972.2,1408.0 L971.8,1474.6 M972.2,1480.1 L973.0,1517.6 M987.6,278.1 L986.6,310.0 M987.6,334.9 L987.5,406.7 M987.6,518.1 L987.8,551.9 M987.6,555.7 L988.4,579.7 M987.6,587.9 L988.4,652.5 M987.6,674.7 L988.1,715.7 M987.6,726.5 L987.2,808.2 M987.6,811.1 L987.1,889.0 M987.6,905.5 L987.4,961.3 M987.6,975.4 L987.3,1034.6 M987.6,1108.6 L987.0,1169.8 M987.6,1171.3 L986.9,1193.9 M987.6,1201.0 L987.8,1256.7 M987.6,1268.5 L987.9,1304.2 M987.6,1387.0 L987.2,1447.0 M987.6,1457.8 L988.3,1481.0 M987.6,1483.8 L987.7,1543.0 M1000.5,220.8 L1001.4,272.8 M1000.5,284.3 L999.8,313.2 M1000.5,592.7 L1001.2,639.4 M1000.5,728.9 L1000.1,797.6 M1000.5,804.8 L1000.0,872.9 M1000.5,876.5 L999.8,953.2 M1000.5,966.5 L999.9,990.3 M1000.5,1011.8 L1000.4,1070.6 M1000.5,1466.7 L1000.5,1516.9 M1017.4,220.8 L1016.8,273.0 M1017.4,283.7 L1017.5,323.9 M1017.4,334.0 L1017.4,395.6 M1017.4,501.4 L1016.7,574.4 M1017.4,635.0 L1016.6,699.9 M1017.4,719.2 L1018.3,779.4 M1017.4,994.2 L1017.6,1038.5 M1017.4,1180.6 L1017.1,1263.7 M1017.4,1360.1 L1017.0,1427.6 M1017.4,1428.9 L1017.7,1484.6 M1017.4,1494.8 L1018.3,1571.5 M1028.6,220.8 L1029.3,275.8 M1028.6,276.5 L1028.5,309.1 M1028.6,329.6 L1028.4,396.1 M1028.6,415.3 L1028.3,474.2 M1028.6,474.8 L1028.2,526.7 M1028.6,535.2 L1027.8,615.7 M1028.6,619.0 L1029.5,669.0 M1028.6,687.2 L1028.7,726.0 M1028.6,883.0 L1028.4,959.4 M1028.6,972.4 L1028.7,1055.7 M1028.6,1092.5 L1028.7,1175.4 M1028.6,1181.8 L1029.1,1249.8 M1028.6,1270.2 L1028.1,1359.4 M1028.6,1371.5 L1028.0,1456.5 M1028.6,1469.6 L1029.2,1511.7 M1046.7,220.8 L1045.9,248.1 M1046.7,269.2 L1045.8,320.5 M1046.7,331.5 L1046.1,378.7 M1046.7,403.3 L1046.6,446.3 M1046.7,454.9 L1047.5,478.9 M1046.7,503.4 L1046.1,566.4 M1046.7,574.4 L1046.2,596.8 M1046.7,605.0 L1047.7,683.6 M1046.7,734.4 L1047.3,811.6 M1046.7,814.1 L1046.8,884.6 M1046.7,900.0 L1046.6,952.4 M1046.7,967.6 L1046.8,1046.9 M1046.7,1056.6 L1045.7,1088.6 M1046.7,1110.6 L1047.2,1134.0 M1046.7,1144.9 L1047.5,1185.8 M1046.7,1253.4 L1047.3,1280.0 M1046.7,1299.9 L1046.1,1347.7 M1046.7,1464.0 L1046.4,1522.6 M1065.5,452.8 L1065.4,522.8 M1065.5,523.1 L1065.3,573.4 M1065.5,680.8 L1065.4,722.2 M1065.5,824.2 L1065.1,889.6 M1065.5,1039.7 L1065.0,1068.4 M1065.5,1171.6 L1066.0,1252.0 M1065.5,1273.7 L1066.4,1352.3 M1065.5,1376.4 L1065.8,1410.2 M1065.5,1423.8 L1064.9,1473.4 M1076.9,220.8 L1077.5,255.5 M1076.9,262.4 L1076.6,334.1 M1076.9,402.8 L1077.0,424.6 M1076.9,427.7 L1076.9,473.8 M1076.9,551.3 L1077.1,623.4 M1076.9,642.1 L1077.4,720.0 M1076.9,723.9 L1077.7,811.5 M1076.9,815.6 L1076.4,904.7 M1076.9,927.5 L1076.8,1002.9 M1076.9,1091.6 L1076.9,1161.4 M1076.9,1168.6 L1077.1,1226.0 M1076.9,1226.1 L1076.8,1267.6 M1076.9,1274.7 L1076.9,1308.2 M1076.9,1483.5 L1077.2,1567.6 M1089.0,220.8 L1088.2,260.0 M1089.0,342.6 L1089.0,376.6 M1089.0,401.2 L1088.8,431.9 M1089.0,450.1 L1088.2,511.3 M1089.0,535.8 L1088.0,610.8 M1089.0,631.1 L1089.8,705.4 M1089.0,721.2 L1088.9,777.0 M1089.0,786.5 L1089.7,837.1 M1089.0,846.3 L1089.6,873.1 M1089.0,955.1 L1088.6,1004.3 M1089.0,1007.1 L1088.6,1088.3 M1089.0,1188.2 L1088.8,1240.3 M1089.0,1253.5 L1089.1,1305.5 M1089.0,1315.4 L1089.5,1356.1 M1089.0,1360.0 L1089.8,1413.1 M1089.0,1475.4 L1089.0,1511.9 M1089.0,1514.3 L1088.5,1541.6 M1108.2,220.8 L1108.5,303.1 M1108.2,318.6 L1108.5,395.5 M1108.2,400.9 L1108.0,436.8 M1108.2,444.2 L1107.8,506.1 M1108.2,607.6 L1109.0,671.3 M1108.2,687.9 L1108.0,763.4 M1108.2,853.8 L1107.5,941.6 M1108.2,1007.5 L1107.8,1091.0 M1108.2,1094.8 L1107.8,1164.2 M1108.2,1231.8 L1108.5,1290.4 M1108.2,1462.0 L1107.3,1490.0 M1123.5,220.8 L1124.1,244.6 M1123.5,249.5 L1123.2,280.5 M1123.5,288.9 L1123.7,331.5 M1123.5,343.8 L1124.3,406.6 M1123.5,426.0 L1124.2,484.8 M1123.5,495.7 L1122.6,545.0 M1123.5,603.0 L1123.8,631.5 M1123.5,645.1 L1122.9,693.5 M1123.5,703.7 L1122.9,727.3 M1123.5,727.9 L1123.2,764.6 M1123.5,779.5 L1124.1,868.8 M1123.5,882.8 L1122.5,956.1 M1123.5,965.3 L1123.2,994.4 M1123.5,1043.1 L1123.1,1072.9 M1123.5,1077.6 L1122.5,1146.3 M1123.5,1333.1 L1122.6,1361.5 M1123.5,1381.2 L1123.6,1446.2 M1123.5,1458.7 L1122.5,1497.0 M1123.5,1514.9 L1123.3,1602.0 M1140.1,220.8 L1140.6,294.9 M1140.1,303.9 L1140.3,378.4 M1140.1,400.7 L1139.8,433.1 M1140.1,434.7 L1139.4,509.2 M1140.1,512.6 L1139.8,587.1 M1140.1,599.3 L1139.2,644.3 M1140.1,651.5 L1140.5,738.5 M1140.1,754.0 L1140.5,806.6 M1140.1,821.0 L1139.6,896.0 M1140.1,907.5 L1139.1,982.7 M1140.1,994.3 L1140.3,1076.9 M1140.1,1150.2 L1141.1,1182.3 M1140.1,1183.0 L1140.1,1224.2 M1140.1,1243.9 L1139.6,1303.2 M1140.1,1316.5 L1139.1,1388.9 M1140.1,1483.8 L1141.0,1527.7 M1155.8,220.8 L1155.6,242.1 M1155.8,244.4 L1155.2,297.4 M1155.8,417.7 L1155.7,459.0 M1155.8,482.3 L1156.5,517.2 M1155.8,587.5 L1156.3,608.2 M1155.8,625.1 L1155.7,651.1 M1155.8,655.2 L1155.6,684.4 M1155.8,751.6 L1154.9,804.4 M1155.8,811.6 L1155.4,880.3 M1155.8,1035.2 L1155.0,1116.6 M1155.8,1138.2 L1156.6,1192.8 M1155.8,1242.0 L1156.5,1268.0 M1155.8,1340.7 L1156.7,1386.7 M1172.5,220.8 L1172.9,310.3 M1172.5,331.1 L1172.3,411.6 M1172.5,477.3 L1172.4,558.9 M1172.5,728.5 L1173.2,803.8 M1172.5,822.9 L1173.0,884.3 M1172.5,886.1 L1173.0,957.8 M1172.5,972.5 L1172.5,1017.6 M1172.5,1021.0 L1171.9,1059.1 M1172.5,1082.1 L1171.9,1139.1 M1172.5,1146.0 L1172.1,1193.7 M1172.5,1412.3 L1172.8,1461.0 M1189.2,220.8 L1189.9,310.8 M1189.2,400.3 L1188.6,478.1 M1189.2,498.8 L1189.1,574.3 M1189.2,580.8 L1189.5,659.8 M1189.2,723.5 L1189.9,753.3 M1189.2,822.1 L1189.9,876.7 M1189.2,1047.3 L1189.5,1069.6 M1189.2,1090.4 L1189.1,1144.9 M1189.2,1159.4 L1189.9,1199.4 M1189.2,1213.2 L1188.8,1255.7 M1189.2,1268.7 L1188.9,1299.7 M1189.2,1309.4 L1189.9,1355.0 M1189.2,1444.4 L1190.1,1488.8 M1189.2,1502.1 L1188.8,1567.4 M1205.5,220.8 L1206.2,267.5 M1205.5,273.7 L1205.2,330.6 M1205.5,345.0 L1206.1,423.0 M1205.5,439.5 L1205.6,517.1 M1205.5,520.7 L1205.0,595.0 M1205.5,619.7 L1205.0,702.5 M1205.5,772.5 L1205.7,852.2 M1205.5,860.1 L1205.3,923.5 M1205.5,1006.0 L1206.0,1092.7 M1205.5,1102.6 L1205.3,1137.5 M1205.5,1331.2 L1206.4,1396.0 M1205.5,1420.5 L1205.6,1481.2 M1205.5,1486.3 L1205.0,1539.0 M1220.5,220.8 L1221.1,288.4 M1220.5,313.4 L1220.4,401.5 M1220.5,470.4 L1220.5,557.9 M1220.5,571.0 L1220.8,598.1 M1220.5,621.3 L1220.5,645.7 M1220.5,655.9 L1220.1,694.4 M1220.5,695.8 L1221.3,735.5 M1220.5,751.7 L1220.9,806.4 M1220.5,899.5 L1221.5,955.7 M1220.5,961.6 L1221.4,984.3 M1220.5,999.8 L1220.9,1071.1 M1220.5,1081.8 L1221.1,1138.6 M1220.5,1266.7 L1220.6,1318.9 M1220.5,1326.5 L1221.1,1409.8 M1220.5,1497.5 L1219.8,1533.3 M1231.7,266.2 L1231.3,346.7 M1231.7,405.1 L1231.7,439.0 M1231.7,448.7 L1232.4,477.2 M1231.7,490.8 L1231.2,534.5 M1231.7,535.6 L1232.2,576.9 M1231.7,587.1 L1231.3,668.3 M1231.7,672.7 L1231.8,747.9 M1231.7,760.5 L1231.2,831.9 M1231.7,855.6 L1231.8,909.4 M1231.7,922.3 L1231.7,949.0 M1231.7,966.9 L1231.2,1012.1 M1231.7,1030.3 L1232.5,1105.9 M1231.7,1116.1 L1231.4,1162.6 M1231.7,1181.7 L1231.6,1255.7 M1231.7,1270.9 L1232.4,1294.7 M1231.7,1297.9 L1231.9,1323.3 M1231.7,1406.8 L1231.3,1495.5 M1231.7,1502.1 L1231.8,1585.6 M1249.3,220.8 L1248.9,309.1 M1249.3,309.4 L1248.7,388.4 M1249.3,410.2 L1248.8,477.5 M1249.3,501.4 L1249.6,545.3 M1249.3,555.0 L1248.8,643.2 M1249.3,648.9 L1250.2,671.3 M1249.3,689.6 L1249.9,733.9 M1249.3,754.4 L1248.8,796.3 M1249.3,816.6 L1249.7,870.0 M1249.3,890.0 L1249.6,947.9 M1249.3,954.0 L1249.7,1033.8 M1249.3,1153.5 L1249.8,1231.3 M1249.3,1240.1 L1249.5,1312.8 M1249.3,1315.1 L1248.5,1347.9 M1249.3,1369.6 L1249.2,1453.3 M1249.3,1467.6 L1250.3,1536.3 M1260.8,220.8 L1261.1,291.4 M1260.8,305.4 L1261.5,359.0 M1260.8,369.1 L1261.6,442.7 M1260.8,445.4 L1259.9,486.1 M1260.8,499.7 L1260.2,551.6 M1260.8,556.6 L1260.7,638.9 M1260.8,653.2 L1260.0,703.5 M1260.8,728.1 L1261.6,789.0 M1260.8,791.5 L1260.2,815.8 M1260.8,883.0 L1261.7,953.4 M1260.8,975.4 L1261.8,1004.5 M1260.8,1025.0 L1260.0,1083.6 M1260.8,1090.4 L1261.4,1116.7 M1260.8,1129.3 L1260.5,1175.0 M1260.8,1197.9 L1260.3,1234.0 M1260.8,1257.9 L1261.7,1339.8 M1260.8,1340.6 L1260.3,1409.5 M1260.8,1424.4 L1261.3,1460.1 M1273.2,220.8 L1272.4,241.6 M1273.2,249.1 L1272.8,277.6 M1273.2,300.8 L1273.3,376.5 M1273.2,405.1 L1272.7,450.9 M1273.2,497.7 L1274.1,563.3 M1273.2,659.5 L1272.4,742.2 M1273.2,1013.3 L1272.9,1049.5 M1273.2,1056.2 L1273.0,1112.7 M1273.2,1120.6 L1273.6,1150.2 M1273.2,1251.3 L1274.0,1292.0 M1273.2,1312.4 L1272.3,1347.2 M1273.2,1370.8 L1273.8,1410.3 M1273.2,1417.6 L1273.1,1488.2 M1273.2,1488.8 L1273.9,1566.2 M1284.7,278.9 L1284.1,328.3 M1284.7,337.0 L1285.5,391.5 M1284.7,408.7 L1285.0,467.6 M1284.7,468.9 L1284.6,492.0 M1284.7,513.6 L1284.2,549.9 M1284.7,566.3 L1284.5,642.4 M1284.7,735.3 L1285.5,805.7 M1284.7,904.5 L1284.5,936.4 M1284.7,958.4 L1284.5,990.5 M1284.7,1003.8 L1284.2,1074.8 M1284.7,1076.8 L1285.3,1131.3 M1284.7,1181.2 L1285.0,1214.8 M1284.7,1224.6 L1284.4,1292.2 M1284.7,1300.1 L1285.2,1350.1 M1284.7,1435.2 L1285.3,1512.5 M1284.7,1512.8 L1285.1,1548.6 M1297.2,220.8 L1297.6,275.7 M1297.2,276.0 L1296.5,359.4 M1297.2,473.1 L1297.7,524.8 M1297.2,537.2 L1297.0,574.2 M1297.2,676.0 L1296.2,734.7 M1297.2,741.9 L1296.6,762.4 M1297.2,766.8 L1297.5,847.4 M1297.2,864.0 L1296.6,928.4 M1297.2,949.0 L1297.1,996.2 M1297.2,1091.0 L1298.0,1133.1 M1297.2,1220.5 L1296.5,1280.0 M1297.2,1405.3 L1298.1,1437.7 M1297.2,1503.2 L1297.3,1579.2 M1313.1,220.8 L1313.7,257.9 M1313.1,264.5 L1312.3,349.6 M1313.1,367.8 L1312.1,439.5 M1313.1,505.5 L1313.3,555.7 M1313.1,567.0 L1313.2,609.3 M1313.1,610.3 L1312.6,652.7 M1313.1,661.6 L1313.5,700.9 M1313.1,706.7 L1312.7,793.4 M1313.1,811.6 L1312.7,877.4 M1313.1,964.3 L1312.6,994.9 M1313.1,1009.0 L1313.8,1091.7 M1313.1,1100.2 L1312.8,1140.1 M1313.1,1153.2 L1313.3,1190.9 M1313.1,1193.7 L1313.5,1229.8 M1313.1,1286.0 L1313.1,1338.7 M1313.1,1358.1 L1312.5,1403.3 M1313.1,1479.8 L1312.7,1549.8 M1326.5,220.8 L1326.3,256.3 M1326.5,258.4 L1326.2,347.3 M1326.5,350.5 L1325.6,380.8 M1326.5,466.3 L1325.6,542.6 M1326.5,600.4 L1325.8,624.8 M1326.5,711.4 L1326.5,751.4 M1326.5,761.6 L1327.2,837.2 M1326.5,1004.5 L1327.0,1093.3 M1326.5,1114.1 L1327.3,1155.0 M1326.5,1218.8 L1326.1,1266.4 M1326.5,1266.6 L1326.8,1326.8 M1326.5,1331.0 L1326.6,1355.9 M1326.5,1356.9 L1326.2,1391.1 M1326.5,1408.3 L1326.3,1437.6 M1339.2,220.8 L1340.0,242.5 M1339.2,305.8 L1339.3,367.3 M1339.2,387.8 L1338.3,446.7 M1339.2,458.8 L1339.6,542.1 M1339.2,555.3 L1338.8,640.6 M1339.2,730.5 L1339.4,770.5 M1339.2,837.4 L1339.1,892.2 M1339.2,1011.8 L1338.5,1077.2 M1339.2,1082.7 L1339.6,1156.3 M1339.2,1174.6 L1338.6,1234.6 M1339.2,1388.3 L1339.8,1415.9 M1339.2,1421.4 L1339.6,1443.0 M1339.2,1463.6 L1339.0,1533.6 M1352.1,220.8 L1352.3,272.5 M1352.1,289.7 L1351.2,345.8 M1352.1,400.1 L1352.7,480.4 M1352.1,487.5 L1352.2,573.3 M1352.1,582.9 L1352.2,661.9 M1352.1,757.2 L1352.0,844.5 M1352.1,862.8 L1351.8,939.7 M1352.1,953.0 L1351.7,1006.6 M1352.1,1006.8 L1353.0,1092.1 M1352.1,1107.8 L1351.9,1135.5 M1352.1,1180.0 L1352.5,1210.7 M1352.1,1231.6 L1351.2,1282.0 M1352.1,1359.9 L1352.5,1383.7 M1352.1,1389.5 L1352.8,1428.8 M1352.1,1443.2 L1351.6,1482.4 M1365.7,220.8 L1366.1,305.9 M1365.7,378.1 L1365.1,466.6 M1365.7,484.0 L1366.4,528.2 M1365.7,532.2 L1365.2,567.9 M1365.7,579.2 L1366.0,614.5 M1365.7,698.4 L1366.5,773.5 M1365.7,797.4 L1365.4,866.8 M1365.7,970.9 L1364.9,1055.1 M1365.7,1067.1 L1366.4,1157.0 M1365.7,1173.3 L1365.2,1222.1 M1365.7,1334.4 L1366.0,1403.8 M1365.7,1456.0 L1365.5,1479.2 M1377.5,220.8 L1377.9,295.4 M1377.5,296.7 L1377.9,372.7 M1377.5,374.4 L1376.8,429.4 M1377.5,440.0 L1378.4,528.0 M1377.5,701.8 L1377.1,778.3 M1377.5,974.4 L1377.9,1058.7 M1377.5,1081.3 L1376.8,1166.3 M1377.5,1213.8 L1377.4,1302.2 M1377.5,1317.3 L1377.0,1363.2 M1377.5,1364.0 L1377.1,1446.1 M1377.5,1465.8 L1377.5,1493.0 M1377.5,1514.4 L1377.7,1575.4 M1391.4,220.8 L1390.6,253.9 M1391.4,260.0 L1390.7,326.1 M1391.4,430.1 L1392.3,489.2 M1391.4,514.0 L1391.7,600.3 M1391.4,623.5 L1391.5,659.6 M1391.4,667.8 L1392.2,729.1 M1391.4,740.6 L1390.4,789.1 M1391.4,833.6 L1391.6,906.5 M1391.4,910.3 L1391.7,968.0 M1391.4,971.0 L1392.4,1055.9 M1391.4,1153.9 L1392.1,1190.5 M1391.4,1208.0 L1391.0,1235.8 M1391.4,1255.7 L1391.2,1283.1 M1391.4,1348.5 L1392.1,1436.1 M1391.4,1451.8 L1391.8,1499.0 M1391.4,1512.4 L1390.5,1547.6 M1409.5,373.1 L1409.5,437.9 M1409.5,451.7 L1408.9,509.4 M1409.5,596.1 L1409.6,618.4 M1409.5,715.9 L1409.7,792.0 M1409.5,812.6 L1410.3,841.1 M1409.5,925.3 L1408.5,952.8 M1409.5,976.0 L1408.8,1029.7 M1409.5,1043.1 L1408.7,1093.9 M1409.5,1292.8 L1409.5,1338.0 M1409.5,1350.5 L1410.2,1379.9 M1409.5,1384.3 L1408.9,1447.5 M1409.5,1500.4 L1409.9,1582.7 M1426.0,220.8 L1425.9,294.8 M1426.0,309.6 L1425.7,379.5 M1426.0,395.1 L1425.8,421.6 M1426.0,438.6 L1426.4,481.6 M1426.0,489.6 L1426.9,514.5 M1426.0,527.1 L1426.2,556.9 M1426.0,567.7 L1426.1,591.0 M1426.0,605.5 L1426.3,633.1 M1426.0,633.1 L1426.8,688.8 M1426.0,702.0 L1426.7,732.3 M1426.0,738.1 L1425.7,799.8 M1426.0,808.9 L1425.7,872.3 M1426.0,979.8 L1426.5,1053.0 M1426.0,1069.8 L1425.0,1159.0 M1426.0,1171.8 L1427.0,1241.3 M1426.0,1335.8 L1425.3,1382.8 M1440.5,220.8 L1439.9,288.4 M1440.5,507.1 L1440.7,566.2 M1440.5,575.9 L1440.7,625.6 M1440.5,645.7 L1441.0,690.4 M1440.5,707.6 L1440.7,739.8 M1440.5,761.8 L1439.9,783.3 M1440.5,803.1 L1440.1,834.1 M1440.5,851.4 L1440.6,901.3 M1440.5,923.6 L1440.9,1004.0 M1440.5,1027.1 L1441.0,1096.7 M1440.5,1099.6 L1440.5,1159.6 M1440.5,1161.7 L1441.1,1201.7 M1440.5,1226.2 L1441.1,1314.5 M1440.5,1324.2 L1440.8,1352.7 M1440.5,1366.8 L1440.9,1394.7 M1440.5,1418.2 L1441.3,1469.3 M1440.5,1487.8 L1441.1,1555.0 M1451.5,220.8 L1450.7,297.5 M1451.5,321.0 L1450.6,373.4 M1451.5,377.2 L1451.6,453.6 M1451.5,536.3 L1452.0,562.4 M1451.5,579.7 L1451.3,654.4 M1451.5,666.2 L1450.8,687.8 M1451.5,700.3 L1452.3,774.0 M1451.5,792.7 L1451.8,838.1 M1451.5,848.9 L1451.7,938.6 M1451.5,947.1 L1450.9,977.4 M1451.5,990.1 L1452.2,1027.5 M1451.5,1044.4 L1452.0,1084.3 M1451.5,1094.4 L1451.7,1182.7 M1451.5,1204.1 L1451.0,1245.8 M1451.5,1246.2 L1452.1,1333.6 M1451.5,1333.7 L1452.1,1416.7 M1451.5,1424.4 L1451.3,1460.7 M1451.5,1469.0 L1450.5,1501.4 M1467.0,220.8 L1467.9,245.9 M1467.0,268.3 L1467.3,351.1 M1467.0,357.4 L1467.2,422.3 M1467.0,423.7 L1467.1,459.9 M1467.0,467.7 L1467.1,514.0 M1467.0,522.9 L1467.3,567.1 M1467.0,585.6 L1466.7,649.7 M1467.0,753.8 L1466.6,815.7 M1467.0,830.1 L1466.5,875.7 M1467.0,899.6 L1467.0,987.3 M1467.0,989.0 L1467.7,1067.0 M1467.0,1072.9 L1467.2,1128.8 M1467.0,1151.5 L1466.8,1222.9 M1467.0,1285.3 L1466.2,1326.6 M1482.7,327.6 L1482.9,362.0 M1482.7,377.3 L1483.5,404.4 M1482.7,417.9 L1483.5,450.6 M1482.7,461.1 L1482.8,486.9 M1482.7,491.0 L1483.0,545.4 M1482.7,552.3 L1482.0,585.5 M1482.7,651.7 L1482.0,708.8 M1482.7,712.1 L1482.9,771.3 M1482.7,837.0 L1483.3,875.2 M1482.7,877.3 L1483.6,942.2 M1482.7,945.6 L1481.9,999.9 M1482.7,1017.8 L1483.7,1092.9 M1482.7,1096.7 L1482.2,1137.4 M1482.7,1193.5 L1481.9,1280.5 M1482.7,1420.8 L1482.4,1508.6 M1498.7,220.8 L1498.3,275.8 M1498.7,374.6 L1497.9,430.9 M1498.7,446.2 L1499.5,529.1 M1498.7,609.2 L1498.5,680.3 M1498.7,683.9 L1498.5,766.7 M1498.7,787.9 L1498.9,836.4 M1498.7,913.2 L1499.3,1002.7 M1498.7,1015.7 L1497.9,1097.0 M1498.7,1116.3 L1499.4,1165.2 M1498.7,1180.2 L1498.9,1214.8 M1498.7,1216.1 L1498.0,1272.7 M1498.7,1295.1 L1498.3,1341.4 M1498.7,1352.2 L1498.6,1440.8 M1498.7,1447.2 L1499.6,1495.6 M1510.5,311.5 L1511.3,397.3 M1510.5,416.8 L1510.9,484.5 M1510.5,508.1 L1510.8,540.5 M1510.5,650.0 L1509.6,679.3 M1510.5,696.8 L1509.9,724.9 M1510.5,827.4 L1509.9,896.4 M1510.5,901.2 L1510.0,927.0 M1510.5,940.8 L1510.5,965.7 M1510.5,973.4 L1511.2,998.9 M1510.5,1017.3 L1509.8,1087.0 M1510.5,1106.3 L1510.2,1132.3 M1510.5,1137.1 L1510.6,1160.6 M1510.5,1173.1 L1511.4,1250.1 M1510.5,1255.8 L1509.8,1297.0 M1510.5,1304.0 L1510.1,1359.1 M1510.5,1463.1 L1511.3,1523.9 M1528.7,295.9 L1528.6,336.2 M1528.7,395.6 L1528.6,424.7 M1528.7,440.0 L1528.6,468.9 M1528.7,483.2 L1529.6,536.4 M1528.7,539.3 L1527.9,563.0 M1528.7,636.4 L1528.4,669.5 M1528.7,694.2 L1528.7,719.7 M1528.7,724.8 L1529.0,768.4 M1528.7,788.3 L1527.9,857.2 M1528.7,941.8 L1527.7,1004.0 M1528.7,1015.2 L1529.2,1043.1 M1528.7,1158.3 L1529.1,1243.8 M1528.7,1259.6 L1528.7,1318.1 M1528.7,1430.2 L1529.3,1454.8 M1528.7,1472.9 L1528.4,1527.2 M1542.3,220.8 L1541.7,273.8 M1542.3,278.0 L1542.3,342.2 M1542.3,407.4 L1542.5,464.7 M1542.3,472.3 L1542.0,521.9 M1542.3,597.6 L1542.3,640.2 M1542.3,662.9 L1543.2,748.0 M1542.3,760.5 L1542.8,823.8 M1542.3,830.4 L1542.4,889.2 M1542.3,899.1 L1542.9,980.6 M1542.3,987.0 L1542.0,1042.3 M1542.3,1052.7 L1542.0,1074.1 M1542.3,1091.1 L1541.5,1151.8 M1542.3,1157.3 L1541.7,1242.2 M1542.3,1329.8 L1542.2,1390.6 M1542.3,1415.3 L1542.9,1443.1 M1542.3,1509.8 L1543.1,1582.0 M1553.0,220.8 L1553.5,289.9 M1553.0,303.1 L1553.3,328.0 M1553.0,400.8 L1553.4,452.7 M1553.0,468.9 L1553.5,498.6 M1553.0,517.4 L1552.5,581.5 M1553.0,606.4 L1553.3,694.5 M1553.0,713.3 L1552.7,766.4 M1553.0,770.3 L1554.0,846.5 M1553.0,851.8 L1553.1,940.5 M1553.0,943.2 L1552.2,967.8 M1553.0,1076.8 L1553.3,1111.9 M1553.0,1205.7 L1553.6,1292.4 M1553.0,1372.8 L1553.7,1452.3 M1553.0,1460.6 L1552.2,1519.4 M1566.6,220.8 L1567.5,271.0 M1566.6,294.6 L1565.9,323.4 M1566.6,369.8 L1566.9,426.2 M1566.6,483.0 L1566.7,552.7 M1566.6,557.1 L1566.5,582.4 M1566.6,606.7 L1566.2,636.9 M1566.6,646.0 L1567.6,681.3 M1566.6,774.5 L1567.6,842.9 M1566.6,933.6 L1566.9,1021.6 M1566.6,1040.2 L1567.3,1065.3 M1566.6,1151.6 L1567.3,1187.6 M1566.6,1281.0 L1565.8,1342.7 M1566.6,1343.0 L1565.8,1390.5 M1566.6,1396.1 L1566.3,1476.6 M1583.3,220.8 L1583.4,288.7 M1583.3,288.7 L1582.5,331.2 M1583.3,349.4 L1583.8,400.3 M1583.3,488.2 L1583.7,539.7 M1583.3,558.4 L1582.4,580.6 M1583.3,601.0 L1583.7,663.4 M1583.3,686.7 L1582.3,768.0 M1583.3,777.2 L1582.9,815.7 M1583.3,899.6 L1583.9,957.6 M1583.3,979.0 L1582.5,1008.4 M1583.3,1016.3 L1583.6,1056.5 M1583.3,1143.1 L1583.9,1172.1 M1583.3,1291.1 L1583.3,1325.1 M1583.3,1342.2 L1582.6,1419.2 M1583.3,1437.3 L1582.9,1473.8 M1583.3,1483.4 L1583.5,1538.7 M1602.7,294.6 L1601.9,357.0 M1602.7,469.4 L1602.0,504.5 M1602.7,510.9 L1603.4,537.7 M1602.7,638.9 L1602.9,719.3 M1602.7,881.0 L1601.7,935.5 M1602.7,1035.6 L1602.7,1101.0 M1602.7,1124.8 L1603.6,1146.7 M1602.7,1221.7 L1602.8,1279.2 M1602.7,1296.0 L1602.1,1384.5 M1602.7,1390.3 L1603.3,1444.7 M1602.7,1451.5 L1603.2,1484.8 M1602.7,1485.6 L1603.3,1506.3 M1615.6,220.8 L1614.8,265.4 M1615.6,270.3 L1616.0,345.8 M1615.6,579.5 L1615.7,667.1 M1615.6,674.2 L1615.2,757.3 M1615.6,765.1 L1616.5,806.0 M1615.6,820.4 L1614.7,884.3 M1615.6,899.4 L1616.4,974.2 M1615.6,1096.6 L1615.2,1135.8 M1615.6,1153.6 L1615.4,1199.0 M1615.6,1218.4 L1616.3,1276.3 M1615.6,1287.3 L1614.8,1376.8 M1615.6,1394.2 L1615.3,1476.4 M1615.6,1494.6 L1616.0,1565.1 M1631.3,220.8 L1631.0,267.3 M1631.3,287.7 L1630.8,367.8 M1631.3,392.2 L1631.1,416.0 M1631.3,433.5 L1630.4,456.3 M1631.3,517.2 L1630.6,583.0 M1631.3,630.4 L1631.4,708.4 M1631.3,709.1 L1631.6,794.5 M1631.3,815.7 L1631.8,864.2 M1631.3,884.4 L1631.0,968.1 M1631.3,980.7 L1631.9,1042.3 M1631.3,1115.1 L1631.1,1193.7 M1631.3,1215.0 L1630.4,1262.4 M1631.3,1280.0 L1631.2,1302.1 M1631.3,1306.4 L1630.4,1358.3 M1631.3,1366.5 L1631.4,1433.2 M1631.3,1497.2 L1630.5,1537.4 M1650.3,220.8 L1650.9,286.3 M1650.3,291.3 L1650.3,313.8 M1650.3,313.8 L1649.3,403.1 M1650.3,420.2 L1649.6,508.6 M1650.3,511.5 L1649.3,557.0 M1650.3,581.1 L1650.5,654.8 M1650.3,666.8 L1651.2,742.8 M1650.3,761.1 L1650.6,824.9 M1650.3,825.5 L1649.7,907.8 M1650.3,1106.8 L1649.4,1163.1 M1650.3,1181.9 L1651.2,1225.7 M1650.3,1227.9 L1650.3,1280.7 M1650.3,1290.6 L1650.7,1362.3 M1650.3,1466.0 L1649.9,1548.4 M1662.3,220.8 L1662.1,243.4 M1662.3,260.5 L1663.3,343.8 M1662.3,367.5 L1661.4,448.2 M1662.3,509.3 L1662.7,595.5 M1662.3,741.6 L1662.5,819.3 M1662.3,821.7 L1661.8,881.0 M1662.3,904.3 L1663.1,942.3 M1662.3,955.7 L1663.1,1037.1 M1662.3,1047.6 L1662.0,1129.5 M1662.3,1138.4 L1661.5,1166.1 M1662.3,1188.7 L1662.1,1226.8 M1662.3,1238.7 L1662.0,1323.5 M1662.3,1406.7 L1662.1,1473.4 M1662.3,1484.5 L1663.3,1519.2 M1673.9,220.8 L1673.7,299.9 M1673.9,319.6 L1674.5,360.4 M1673.9,377.1 L1674.4,408.8 M1673.9,483.2 L1674.5,572.4 M1673.9,597.0 L1673.8,628.8 M1673.9,636.8 L1673.0,698.0 M1673.9,700.3 L1674.5,728.1 M1673.9,742.6 L1674.9,774.1 M1673.9,798.2 L1673.1,827.7 M1673.9,849.3 L1674.7,892.0 M1673.9,903.3 L1674.2,945.5 M1673.9,962.3 L1673.6,1030.0 M1673.9,1036.8 L1673.3,1067.8 M1673.9,1089.3 L1673.5,1170.0 M1673.9,1178.2 L1673.1,1261.3 M1673.9,1331.4 L1674.6,1358.4 M1673.9,1379.9 L1673.8,1442.5 M1673.9,1451.1 L1673.1,1536.8 M1687.8,372.0 L1687.0,444.0 M1687.8,467.6 L1687.2,538.0 M1687.8,555.9 L1686.8,628.6 M1687.8,637.4 L1688.3,695.7 M1687.8,707.4 L1687.0,742.6 M1687.8,760.4 L1687.1,848.6 M1687.8,863.1 L1687.8,900.2 M1687.8,904.8 L1687.2,972.5 M1687.8,1073.0 L1687.3,1110.9 M1687.8,1123.7 L1687.3,1195.3 M1687.8,1286.5 L1687.4,1347.6 M1687.8,1356.9 L1687.7,1377.0 M1687.8,1385.4 L1687.5,1448.6 M1707.2,220.8 L1707.9,309.2 M1707.2,313.7 L1708.0,391.0 M1707.2,578.8 L1707.0,646.7 M1707.2,664.5 L1706.5,725.7 M1707.2,841.4 L1707.8,929.7 M1707.2,944.0 L1706.5,1008.9 M1707.2,1031.6 L1708.1,1055.6 M1707.2,1071.5 L1707.8,1131.8 M1707.2,1139.1 L1707.5,1167.1 M1707.2,1172.5 L1706.9,1217.2 M1707.2,1233.4 L1707.8,1319.0 M1707.2,1410.1 L1706.7,1431.3 M1707.2,1475.1 L1706.4,1539.8 M1726.2,288.9 L1727.2,338.3 M1726.2,339.2 L1726.6,388.5 M1726.2,398.1 L1725.2,422.0 M1726.2,436.7 L1727.1,522.1 M1726.2,536.2 L1725.2,595.1 M1726.2,602.9 L1727.0,655.6 M1726.2,732.2 L1725.8,757.3 M1726.2,848.1 L1725.4,934.5 M1726.2,949.1 L1727.1,1030.4 M1726.2,1032.2 L1726.4,1095.1 M1726.2,1101.0 L1727.0,1158.0 M1726.2,1181.1 L1726.3,1237.0 M1726.2,1329.8 L1725.7,1360.0 M1726.2,1363.1 L1726.9,1395.2 M1726.2,1398.6 L1725.2,1423.6 M1726.2,1443.2 L1727.1,1516.7 M625.0,220.8 L710.9,220.5 M809.4,220.8 L843.8,221.4 M873.3,220.8 L910.8,220.7 M958.1,220.8 L1007.3,220.6 M1011.0,220.8 L1074.7,220.3 M1152.0,220.8 L1180.6,221.1 M1183.2,220.8 L1244.7,220.0 M1271.2,220.8 L1319.2,219.9 M1402.8,220.8 L1449.6,219.8 M1462.7,220.8 L1519.6,221.2 M1533.1,220.8 L1586.1,220.6 M434.3,238.6 L493.4,238.6 M508.1,238.6 L583.3,239.1 M585.6,238.6 L641.9,238.3 M719.9,238.6 L740.2,238.2 M865.0,238.6 L949.8,237.6 M1065.8,238.6 L1094.3,237.9 M1164.8,238.6 L1242.6,239.3 M1270.0,238.6 L1319.6,238.2 M1325.3,238.6 L1402.4,238.4 M1428.2,238.6 L1489.8,238.8 M1492.7,238.6 L1547.6,239.1 M1697.3,238.6 L1783.8,238.9 M434.3,255.3 L463.3,254.6 M595.0,255.3 L646.8,254.4 M897.4,255.3 L971.8,254.5 M991.0,255.3 L1079.4,254.5 M1138.5,255.3 L1191.9,255.0 M1191.9,255.3 L1221.3,254.9 M1235.6,255.3 L1303.2,256.2 M1322.0,255.3 L1380.5,256.2 M1443.3,255.3 L1477.7,256.0 M1602.8,255.3 L1687.0,255.2 M434.3,274.6 L521.3,275.1 M521.7,274.6 L549.8,273.9 M566.7,274.6 L615.8,275.4 M839.6,274.6 L884.7,273.7 M896.8,274.6 L933.0,274.2 M957.0,274.6 L1005.8,274.7 M1020.3,274.6 L1045.6,274.1 M1150.8,274.6 L1233.3,275.3 M1248.5,274.6 L1290.0,275.4 M1448.1,274.6 L1491.6,275.0 M1514.8,274.6 L1545.1,274.2 M1553.5,274.6 L1626.9,274.2 M1650.7,274.6 L1675.6,275.5 M434.3,295.4 L456.5,294.4 M527.2,295.4 L583.0,295.6 M610.3,295.4 L699.1,294.8 M788.0,295.4 L849.5,295.7 M864.5,295.4 L932.4,295.1 M942.2,295.4 L990.7,295.9 M1006.5,295.4 L1040.9,295.5 M1042.3,295.4 L1103.2,295.7 M1123.4,295.4 L1196.4,295.0 M1279.8,295.4 L1354.6,294.9 M1480.4,295.4 L1567.8,296.2 M1572.6,295.4 L1633.0,294.6 M434.3,321.6 L524.3,320.7 M549.0,321.6 L626.0,322.2 M713.9,321.6 L769.6,321.0 M1028.6,321.6 L1114.0,321.8 M1316.2,321.6 L1350.6,321.2 M1402.6,321.6 L1436.1,321.5 M1438.2,321.6 L1489.2,321.5 M1610.0,321.6 L1640.0,321.7 M1662.0,321.6 L1746.3,320.8 M434.3,344.5 L515.5,344.9 M538.1,344.5 L558.2,344.5 M661.1,344.5 L698.4,344.5 M721.9,344.5 L795.0,344.1 M811.3,344.5 L869.1,345.3 M893.2,344.5 L964.9,344.6 M969.1,344.5 L1054.1,343.7 M1069.5,344.5 L1124.0,345.0 M1196.6,344.5 L1253.4,345.1 M1321.5,344.5 L1347.7,344.7 M1456.8,344.5 L1479.2,345.1 M1625.4,344.5 L1648.7,345.0 M1660.4,344.5 L1689.5,345.3 M434.3,373.0 L475.0,373.2 M669.2,373.0 L756.8,372.9 M834.6,373.0 L906.1,373.8 M1086.9,373.0 L1116.6,372.7 M1135.5,373.0 L1216.6,373.4 M1317.9,373.0 L1389.5,373.9 M1391.5,373.0 L1437.6,373.2 M1439.0,373.0 L1464.9,372.3 M1561.6,373.0 L1641.2,373.8 M434.3,392.3 L520.7,392.2 M536.3,392.3 L558.8,392.5 M563.8,392.3 L632.9,393.2 M857.6,392.3 L887.2,391.5 M902.7,392.3 L942.0,392.6 M971.1,392.3 L1005.4,392.2 M1022.5,392.3 L1065.6,391.9 M1184.8,392.3 L1245.6,391.6 M1259.9,392.3 L1340.9,391.3 M1452.3,392.3 L1495.0,391.4 M1501.9,392.3 L1581.2,393.0 M1609.9,392.3 L1677.5,392.2 M1681.1,392.3 L1717.3,391.4 M492.7,414.3 L534.9,414.2 M544.1,414.3 L589.9,415.0 M614.1,414.3 L694.6,415.2 M776.3,414.3 L855.5,414.5 M1003.9,414.3 L1024.1,414.4 M1033.5,414.3 L1076.5,415.0 M1177.1,414.3 L1207.3,415.3 M1272.5,414.3 L1306.4,415.3 M1314.0,414.3 L1388.2,414.2 M1416.4,414.3 L1482.5,415.2 M1509.5,414.3 L1595.6,413.6 M1605.2,414.3 L1637.8,413.6 M1658.0,414.3 L1732.4,414.9 M434.3,436.4 L523.0,435.5 M625.5,436.4 L685.7,436.2 M715.1,436.4 L777.5,436.3 M794.5,436.4 L862.8,435.8 M968.0,436.4 L1051.5,436.9 M1057.8,436.4 L1102.0,437.0 M1211.5,436.4 L1280.0,436.9 M1364.5,436.4 L1391.2,435.6 M1509.4,436.4 L1557.1,436.4 M1636.1,436.4 L1678.4,436.2 M434.3,454.8 L459.8,454.1 M473.7,454.8 L504.6,454.5 M545.6,454.8 L583.9,454.6 M596.6,454.8 L659.7,455.0 M782.1,454.8 L843.0,455.6 M862.5,454.8 L924.7,454.0 M928.1,454.8 L1011.5,454.6 M1038.5,454.8 L1092.4,454.6 M1271.9,454.8 L1316.5,455.7 M1426.2,454.8 L1466.1,454.9 M1552.4,454.8 L1614.5,454.3 M1639.9,454.8 L1666.3,455.0 M434.3,470.8 L476.8,471.6 M496.5,470.8 L578.8,470.7 M604.5,470.8 L634.3,471.1 M660.3,470.8 L695.6,469.9 M712.7,470.8 L777.8,470.1 M791.7,470.8 L855.7,471.6 M946.9,470.8 L1008.6,471.3 M1024.0,470.8 L1047.7,470.0 M1074.4,470.8 L1099.8,471.3 M1112.3,470.8 L1134.0,470.7 M1141.5,470.8 L1219.4,471.7 M1239.9,470.8 L1276.1,471.0 M1281.0,470.8 L1364.3,471.2 M1379.5,470.8 L1458.3,470.1 M1475.2,470.8 L1513.0,470.5 M1536.0,470.8 L1593.3,471.1 M1598.1,470.8 L1618.2,470.6 M1632.9,470.8 L1669.6,471.5 M591.7,494.9 L659.1,495.2 M683.3,494.9 L765.4,494.6 M814.1,494.9 L877.1,495.5 M997.2,494.9 L1086.4,495.2 M1301.7,494.9 L1333.0,495.8 M1433.9,494.9 L1463.4,494.4 M1521.2,494.9 L1591.7,495.2 M1690.0,494.9 L1736.0,494.7 M559.8,515.8 L616.4,515.9 M916.1,515.8 L979.4,516.1 M1002.9,515.8 L1073.7,516.3 M1080.0,515.8 L1133.2,515.3 M1161.0,515.8 L1246.1,514.8 M1255.7,515.8 L1326.8,516.2 M1568.0,515.8 L1619.6,516.6 M1641.8,515.8 L1665.6,516.2 M1672.1,515.8 L1705.1,515.6 M1720.2,515.8 L1757.2,516.6 M434.3,533.8 L468.8,534.1 M483.4,533.8 L569.5,533.0 M573.1,533.8 L635.0,534.3 M722.9,533.8 L768.0,533.8 M776.7,533.8 L853.7,533.8 M866.0,533.8 L943.3,533.1 M943.8,533.8 L993.8,533.6 M1015.7,533.8 L1060.0,533.0 M1119.3,533.8 L1205.5,533.0 M1212.8,533.8 L1247.5,533.2 M1419.7,533.8 L1484.2,534.0 M1577.3,533.8 L1651.1,534.1 M1659.5,533.8 L1696.0,534.0 M434.3,550.9 L523.1,550.8 M715.5,550.9 L773.1,551.7 M781.5,550.9 L846.3,551.5 M852.1,550.9 L876.4,551.3 M894.1,550.9 L934.4,549.9 M1137.9,550.9 L1164.9,551.2 M1193.6,550.9 L1264.3,551.2 M1267.4,550.9 L1301.6,551.3 M1360.6,550.9 L1406.8,550.5 M1429.4,550.9 L1450.5,550.5 M1470.1,550.9 L1507.1,551.2 M1535.1,550.9 L1564.7,551.1 M1565.4,550.9 L1594.8,550.7 M1594.9,550.9 L1629.9,551.5 M1658.8,550.9 L1741.6,550.1 M434.3,573.2 L463.1,574.0 M477.5,573.2 L528.6,573.4 M557.4,573.2 L618.5,573.5 M634.6,573.2 L697.1,572.3 M719.9,573.2 L761.6,572.9 M768.1,573.2 L837.9,573.8 M894.9,573.2 L956.6,572.5 M1125.6,573.2 L1172.3,573.9 M1176.7,573.2 L1208.4,573.5 M1221.1,573.2 L1270.1,573.7 M1519.2,573.2 L1605.7,573.6 M1663.1,573.2 L1738.1,573.3 M476.6,597.3 L510.2,597.4 M519.6,597.3 L566.1,596.6 M582.2,597.3 L603.5,597.5 M619.3,597.3 L640.5,598.1 M715.8,597.3 L792.0,596.8 M795.5,597.3 L859.7,597.6 M934.4,597.3 L976.2,598.1 M999.1,597.3 L1050.6,596.5 M1134.5,597.3 L1217.5,597.7 M1245.6,597.3 L1314.1,598.2 M1323.7,597.3 L1371.4,596.9 M1397.8,597.3 L1450.7,597.0 M1473.3,597.3 L1556.3,597.8 M1582.2,597.3 L1602.4,598.1 M1714.1,597.3 L1793.7,596.6 M434.3,613.0 L516.3,613.7 M563.4,613.0 L620.6,612.7 M633.2,613.0 L717.0,613.7 M733.7,613.0 L777.3,613.0 M797.3,613.0 L818.9,613.3 M827.3,613.0 L915.3,613.5 M921.0,613.0 L999.5,612.2 M1012.8,613.0 L1046.1,613.8 M1171.6,613.0 L1207.2,613.3 M1209.3,613.0 L1293.9,613.7 M1401.5,613.0 L1470.7,612.0 M1487.0,613.0 L1553.8,612.5 M1556.6,613.0 L1578.8,612.1 M1579.6,613.0 L1621.1,613.4 M1723.7,613.0 L1751.0,612.0 M631.6,636.4 L664.3,637.0 M720.2,636.4 L754.4,637.0 M1074.4,636.4 L1137.3,636.1 M1237.1,636.4 L1284.4,637.4 M1293.3,636.4 L1333.4,635.5 M1343.9,636.4 L1393.2,635.5 M1421.7,636.4 L1500.3,636.3 M1522.0,636.4 L1549.3,635.9 M1648.2,636.4 L1669.9,636.2 M1727.4,636.4 L1768.4,637.1 M486.9,661.0 L538.2,661.4 M715.9,661.0 L783.3,660.2 M905.0,661.0 L966.6,661.7 M980.7,661.0 L1062.8,660.9 M1092.4,661.0 L1158.7,660.0 M1171.4,661.0 L1207.2,660.1 M1275.3,661.0 L1347.2,661.2 M1370.9,661.0 L1452.5,660.6 M1453.6,661.0 L1514.4,660.6 M1541.5,661.0 L1589.6,660.5 M1613.2,661.0 L1669.0,661.7 M472.0,677.6 L534.1,678.5 M557.1,677.6 L602.0,677.7 M621.0,677.6 L643.5,676.9 M728.5,677.6 L772.8,678.5 M799.6,677.6 L875.3,678.2 M895.6,677.6 L918.4,677.7 M924.0,677.6 L955.0,676.6 M965.1,677.6 L1021.1,677.7 M1047.9,677.6 L1100.6,678.0 M1182.8,677.6 L1266.9,678.4 M1276.9,677.6 L1321.4,678.2 M1340.4,677.6 L1370.8,677.8 M1565.2,677.6 L1605.1,677.3 M1617.0,677.6 L1702.9,677.0 M434.3,702.4 L486.8,702.6 M516.1,702.4 L577.7,702.0 M648.2,702.4 L687.0,702.5 M1048.1,702.4 L1109.7,701.7 M1123.4,702.4 L1161.1,703.3 M1167.4,702.4 L1255.0,701.9 M1267.0,702.4 L1293.5,702.0 M1293.6,702.4 L1329.0,703.2 M1335.6,702.4 L1413.5,702.1 M1425.3,702.4 L1481.2,702.6 M1503.9,702.4 L1585.9,702.6 M1652.3,702.4 L1677.6,701.9 M1688.9,702.4 L1747.2,703.4 M434.3,729.4 L470.7,729.5 M470.8,729.4 L540.4,729.8 M555.8,729.4 L634.7,730.3 M664.1,729.4 L712.8,728.4 M1154.1,729.4 L1232.3,729.6 M1468.1,729.4 L1493.8,730.0 M1494.9,729.4 L1569.4,728.7 M590.2,745.6 L652.2,746.3 M664.4,745.6 L751.4,745.4 M866.0,745.6 L888.7,745.3 M910.4,745.6 L954.4,745.5 M954.9,745.6 L1031.7,746.6 M1059.0,745.6 L1120.2,746.1 M1228.4,745.6 L1297.4,746.3 M1313.0,745.6 L1355.6,745.2 M1367.1,745.6 L1409.7,745.9 M1502.6,745.6 L1536.2,746.0 M1559.7,745.6 L1631.7,744.8 M1642.7,745.6 L1720.6,746.0 M463.9,773.0 L534.8,772.8 M635.6,773.0 L677.6,773.8 M777.6,773.0 L805.1,773.1 M986.7,773.0 L1033.9,773.5 M1049.4,773.0 L1130.5,772.9 M1155.7,773.0 L1190.0,773.7 M1213.3,773.0 L1247.8,772.7 M1385.4,773.0 L1430.3,772.6 M1453.4,773.0 L1527.7,773.5 M1617.0,773.0 L1694.6,773.6 M497.9,789.6 L551.5,789.3 M569.8,789.6 L608.9,788.6 M719.8,789.6 L767.2,789.8 M784.6,789.6 L810.2,790.4 M885.9,789.6 L972.4,789.6 M981.7,789.6 L1021.9,789.9 M1079.0,789.6 L1104.7,790.4 M1125.9,789.6 L1210.0,788.8 M1247.3,789.6 L1315.3,788.6 M1562.5,789.6 L1627.1,789.5 M1650.9,789.6 L1679.9,789.4 M500.4,813.3 L569.7,814.2 M592.6,813.3 L664.5,813.5 M678.1,813.3 L744.4,813.3 M756.7,813.3 L838.2,814.0 M866.7,813.3 L953.7,812.9 M1040.8,813.3 L1109.9,813.9 M1111.8,813.3 L1193.5,814.1 M1259.2,813.3 L1281.0,812.6 M1293.3,813.3 L1351.7,814.1 M1452.6,813.3 L1537.1,813.1 M1540.3,813.3 L1571.7,813.2 M1589.8,813.3 L1617.1,814.1 M515.5,835.3 L581.8,834.4 M599.3,835.3 L634.0,835.7 M752.2,835.3 L774.7,835.8 M785.0,835.3 L856.1,835.3 M886.1,835.3 L933.2,835.4 M1105.0,835.3 L1170.4,835.1 M1180.5,835.3 L1233.4,835.7 M1317.6,835.3 L1371.0,834.5 M1372.3,835.3 L1449.6,835.7 M1537.4,835.3 L1568.0,834.5 M1568.2,835.3 L1617.3,836.1 M1685.8,835.3 L1711.7,834.7 M478.7,852.2 L536.1,851.5 M547.7,852.2 L603.9,852.9 M706.4,852.2 L767.8,853.1 M863.9,852.2 L893.3,851.8 M909.1,852.2 L951.2,852.8 M955.1,852.2 L988.6,851.5 M1084.3,852.2 L1140.5,852.9 M1356.5,852.2 L1386.5,853.1 M1397.0,852.2 L1436.5,851.8 M1602.1,852.2 L1646.2,851.4 M1697.3,852.2 L1733.7,852.7 M434.3,871.7 L494.1,872.5 M497.7,871.7 L556.0,871.0 M584.2,871.7 L659.0,872.3 M664.5,871.7 L696.8,872.6 M723.4,871.7 L794.5,872.5 M856.6,871.7 L937.3,872.6 M944.9,871.7 L1026.0,870.7 M1111.0,871.7 L1137.1,872.7 M1158.8,871.7 L1210.2,872.6 M1214.4,871.7 L1262.4,871.9 M1287.7,871.7 L1359.5,872.3 M1382.0,871.7 L1423.4,872.5 M1445.2,871.7 L1479.9,871.6 M1525.9,871.7 L1550.8,871.4 M1576.9,871.7 L1611.2,872.6 M1679.4,871.7 L1726.4,871.9 M1726.4,871.7 L1814.0,871.9 M525.3,895.7 L555.0,896.7 M659.7,895.7 L748.7,896.7 M778.5,895.7 L828.8,896.1 M834.9,895.7 L858.3,896.5 M1197.8,895.7 L1252.4,895.0 M1405.3,895.7 L1462.7,895.1 M1468.4,895.7 L1543.4,896.5 M1705.6,895.7 L1758.1,896.6 M434.3,920.2 L454.4,920.2 M627.4,920.2 L661.4,920.3 M732.3,920.2 L797.9,921.1 M818.3,920.2 L903.8,919.2 M1034.1,920.2 L1065.4,921.2 M1083.2,920.2 L1170.4,919.5 M1397.0,920.2 L1440.1,919.3 M1452.5,920.2 L1497.4,920.8 M1499.6,920.2 L1548.5,919.8 M434.3,943.4 L471.2,943.7 M541.8,943.4 L562.5,943.7 M570.9,943.4 L633.3,944.3 M633.8,943.4 L655.4,944.0 M838.1,943.4 L888.6,942.6 M901.3,943.4 L922.2,943.2 M922.7,943.4 L981.9,943.6 M1008.3,943.4 L1091.6,943.6 M1120.5,943.4 L1209.6,943.0 M1214.4,943.4 L1301.6,942.9 M1327.7,943.4 L1409.6,943.6 M1526.3,943.4 L1564.3,942.8 M1580.7,943.4 L1653.6,944.2 M1664.5,943.4 L1720.5,944.1 M545.3,964.9 L616.6,965.2 M620.2,964.9 L650.9,964.4 M666.1,964.9 L735.7,964.8 M761.1,964.9 L805.8,965.6 M848.2,964.9 L924.8,965.1 M1086.9,964.9 L1150.5,965.0 M1322.6,964.9 L1354.7,965.7 M1485.6,964.9 L1527.3,964.2 M1531.0,964.9 L1600.2,964.3 M1609.1,964.9 L1647.2,965.0 M434.3,987.7 L491.1,987.8 M500.4,987.7 L520.5,986.9 M535.1,987.7 L588.5,988.6 M648.1,987.7 L698.8,987.0 M850.3,987.7 L901.7,987.7 M906.7,987.7 L993.2,987.2 M1018.9,987.7 L1102.5,988.5 M1129.5,987.7 L1187.1,986.8 M1386.6,987.7 L1473.0,988.7 M1551.0,987.7 L1588.4,987.1 M1690.2,987.7 L1719.5,987.6 M650.9,1012.4 L685.0,1013.0 M696.0,1012.4 L742.7,1012.1 M746.3,1012.4 L788.5,1012.1 M964.5,1012.4 L1041.8,1012.1 M1066.5,1012.4 L1137.9,1012.3 M1156.1,1012.4 L1185.7,1012.6 M1203.5,1012.4 L1275.6,1013.0 M1277.3,1012.4 L1317.6,1011.8 M1435.7,1012.4 L1518.2,1012.5 M1523.6,1012.4 L1590.2,1013.3 M1697.2,1012.4 L1780.9,1013.1 M476.4,1035.2 L510.7,1035.0 M539.0,1035.2 L580.8,1036.2 M641.5,1035.2 L720.9,1034.6 M820.7,1035.2 L886.1,1036.0 M1236.3,1035.2 L1310.8,1034.5 M1404.4,1035.2 L1482.4,1034.8 M1505.7,1035.2 L1575.0,1036.1 M1696.6,1035.2 L1758.3,1035.0 M590.5,1063.6 L654.5,1063.3 M770.5,1063.6 L805.0,1063.1 M834.7,1063.6 L855.5,1063.2 M871.9,1063.6 L933.7,1062.6 M962.6,1063.6 L1004.6,1063.5 M1012.9,1063.6 L1052.1,1064.5 M1217.7,1063.6 L1286.2,1064.0 M1368.2,1063.6 L1420.9,1064.4 M1436.6,1063.6 L1476.4,1063.9 M434.3,1088.1 L458.6,1087.6 M569.3,1088.1 L659.3,1087.5 M939.6,1088.1 L971.0,1087.8 M1057.9,1088.1 L1131.1,1087.8 M1270.1,1088.1 L1340.2,1088.2 M1456.5,1088.1 L1535.9,1088.0 M1554.1,1088.1 L1607.6,1088.1 M434.3,1103.6 L513.9,1104.4 M525.9,1103.6 L578.8,1104.1 M603.6,1103.6 L688.0,1104.6 M699.3,1103.6 L757.7,1102.9 M773.8,1103.6 L814.6,1102.7 M876.6,1103.6 L947.3,1104.3 M974.1,1103.6 L1041.4,1104.4 M1056.4,1103.6 L1097.0,1103.3 M1111.2,1103.6 L1190.4,1103.6 M1193.9,1103.6 L1224.5,1103.4 M1233.3,1103.6 L1312.0,1102.7 M1314.1,1103.6 L1335.1,1103.1 M1357.5,1103.6 L1401.3,1103.6 M1429.6,1103.6 L1486.0,1104.2 M1548.3,1103.6 L1604.0,1102.8 M1619.1,1103.6 L1669.7,1104.1 M1677.0,1103.6 L1714.9,1103.7 M434.3,1128.8 L483.0,1128.7 M483.2,1128.8 L566.4,1129.4 M841.7,1128.8 L902.8,1129.1 M921.9,1128.8 L946.2,1129.6 M1058.1,1128.8 L1086.0,1128.4 M1093.9,1128.8 L1175.1,1129.4 M1274.8,1128.8 L1356.7,1128.3 M1382.4,1128.8 L1468.4,1129.7 M1482.7,1128.8 L1539.4,1129.6 M1542.6,1128.8 L1618.1,1128.3 M434.3,1151.5 L464.1,1152.3 M481.5,1151.5 L561.0,1151.6 M815.0,1151.5 L835.9,1150.8 M865.8,1151.5 L953.4,1151.4 M1115.1,1151.5 L1153.8,1151.2 M1181.2,1151.5 L1251.1,1151.6 M1380.0,1151.5 L1422.4,1151.5 M1434.7,1151.5 L1470.3,1151.8 M1513.8,1151.5 L1555.5,1151.7 M1559.4,1151.5 L1585.3,1151.6 M1667.9,1151.5 L1726.7,1152.5 M434.3,1167.3 L502.7,1166.9 M668.7,1167.3 L745.9,1166.9 M846.2,1167.3 L891.7,1167.8 M910.9,1167.3 L934.7,1168.0 M955.7,1167.3 L1044.0,1166.5 M1059.5,1167.3 L1110.0,1168.1 M1196.9,1167.3 L1239.4,1167.8 M1244.3,1167.3 L1287.8,1167.6 M1301.2,1167.3 L1321.6,1168.2 M1339.3,1167.3 L1383.2,1166.4 M1383.9,1167.3 L1445.6,1167.4 M1542.5,1167.3 L1576.2,1167.9 M1581.3,1167.3 L1608.4,1167.1 M1682.8,1167.3 L1747.0,1166.7 M434.3,1186.3 L485.3,1186.5 M505.1,1186.3 L594.4,1186.4 M611.7,1186.3 L681.2,1185.4 M696.3,1186.3 L755.5,1186.7 M757.6,1186.3 L792.2,1186.0 M1172.7,1186.3 L1239.3,1187.3 M1255.7,1186.3 L1304.5,1186.1 M1492.7,1186.3 L1561.0,1186.7 M1568.1,1186.3 L1609.6,1186.5 M1691.5,1186.3 L1734.9,1186.6 M434.3,1203.9 L524.1,1204.6 M539.9,1203.9 L559.9,1203.5 M645.5,1203.9 L680.2,1203.5 M753.0,1203.9 L773.3,1203.6 M797.5,1203.9 L873.9,1204.9 M980.5,1203.9 L1050.9,1203.2 M1119.6,1203.9 L1157.0,1203.4 M1174.9,1203.9 L1196.4,1204.6 M1199.3,1203.9 L1280.1,1204.4 M1324.9,1203.9 L1352.7,1204.8 M1365.9,1203.9 L1441.1,1203.6 M1491.3,1203.9 L1571.5,1204.3 M1640.9,1203.9 L1687.1,1203.5 M434.3,1220.8 L458.0,1220.9 M469.7,1220.8 L546.0,1221.7 M547.8,1220.8 L614.7,1221.5 M848.7,1220.8 L907.0,1220.2 M913.3,1220.8 L997.5,1221.4 M1003.3,1220.8 L1063.2,1221.3 M1089.6,1220.8 L1114.5,1221.0 M1221.7,1220.8 L1297.7,1221.8 M1301.8,1220.8 L1384.6,1220.9 M1600.5,1220.8 L1676.0,1221.7 M1703.6,1220.8 L1752.3,1220.7 M521.6,1238.9 L609.5,1239.7 M684.9,1238.9 L705.6,1239.1 M735.1,1238.9 L758.6,1239.4 M777.3,1238.9 L854.8,1239.0 M1080.4,1238.9 L1162.8,1238.5 M1282.9,1238.9 L1350.4,1239.5 M1368.2,1238.9 L1397.9,1238.1 M1411.0,1238.9 L1442.0,1238.1 M1553.8,1238.9 L1622.4,1238.7 M1626.7,1238.9 L1702.1,1238.3 M1710.5,1238.9 L1745.3,1239.6 M534.3,1261.1 L593.8,1261.9 M609.5,1261.1 L665.4,1260.7 M846.1,1261.1 L918.9,1262.0 M989.4,1261.1 L1020.2,1260.7 M1061.4,1261.1 L1090.8,1261.8 M1095.9,1261.1 L1134.7,1261.0 M1305.9,1261.1 L1348.3,1261.1 M1434.8,1261.1 L1455.1,1261.1 M1514.6,1261.1 L1541.1,1260.3 M1551.0,1261.1 L1573.0,1260.9 M1592.6,1261.1 L1675.6,1261.8 M434.3,1282.3 L508.3,1283.0 M516.3,1282.3 L567.6,1283.0 M624.7,1282.3 L676.4,1283.2 M690.1,1282.3 L718.1,1282.4 M820.8,1282.3 L860.3,1282.1 M1091.9,1282.3 L1121.4,1282.0 M1260.4,1282.3 L1285.3,1281.9 M1408.0,1282.3 L1461.7,1282.4 M1487.0,1282.3 L1562.9,1281.5 M1629.8,1282.3 L1653.2,1281.5 M434.3,1302.7 L510.1,1303.3 M523.5,1302.7 L605.7,1302.1 M611.1,1302.7 L646.9,1302.8 M671.0,1302.7 L701.3,1303.5 M854.7,1302.7 L933.5,1301.8 M940.1,1302.7 L969.0,1303.3 M1099.6,1302.7 L1144.2,1302.5 M1159.5,1302.7 L1248.5,1303.4 M1358.2,1302.7 L1439.2,1302.5 M1461.4,1302.7 L1546.1,1302.9 M1560.5,1302.7 L1599.2,1302.7 M1601.9,1302.7 L1671.1,1303.0 M1678.1,1302.7 L1699.9,1303.7 M434.3,1319.6 L461.3,1320.5 M478.8,1319.6 L546.2,1318.8 M565.4,1319.6 L607.8,1318.8 M634.8,1319.6 L706.6,1319.1 M735.9,1319.6 L823.3,1319.5 M848.1,1319.6 L908.0,1320.6 M1097.9,1319.6 L1173.9,1319.0 M1181.6,1319.6 L1222.7,1320.3 M1267.7,1319.6 L1342.6,1320.6 M1361.8,1319.6 L1425.0,1320.3 M1427.3,1319.6 L1505.2,1319.5 M1517.3,1319.6 L1538.9,1319.6 M1550.1,1319.6 L1584.1,1319.6 M1590.6,1319.6 L1626.6,1318.7 M1692.1,1319.6 L1719.4,1320.1 M474.0,1342.5 L550.1,1343.3 M764.4,1342.5 L805.5,1341.9 M829.6,1342.5 L858.5,1341.8 M863.7,1342.5 L944.9,1341.6 M968.0,1342.5 L1009.0,1341.8 M1027.1,1342.5 L1054.9,1342.7 M1055.0,1342.5 L1105.7,1341.5 M1129.5,1342.5 L1151.2,1343.4 M1220.4,1342.5 L1308.3,1343.2 M1464.4,1342.5 L1548.6,1342.2 M1576.7,1342.5 L1622.4,1342.0 M1647.7,1342.5 L1707.3,1341.8 M1715.3,1342.5 L1752.8,1341.6 M434.3,1365.7 L506.7,1366.3 M511.8,1365.7 L590.0,1365.4 M659.9,1365.7 L730.0,1365.1 M864.8,1365.7 L937.1,1366.2 M965.6,1365.7 L1031.3,1365.8 M1045.5,1365.7 L1066.6,1366.5 M1179.4,1365.7 L1237.0,1366.1 M1241.3,1365.7 L1298.9,1366.1 M1429.9,1365.7 L1460.2,1366.2 M1472.8,1365.7 L1492.9,1365.0 M1493.6,1365.7 L1525.5,1365.2 M1621.9,1365.7 L1668.4,1365.4 M509.9,1386.9 L576.3,1387.3 M643.9,1386.9 L708.7,1387.1 M859.9,1386.9 L925.7,1387.5 M942.1,1386.9 L1027.2,1386.6 M1029.7,1386.9 L1070.8,1386.8 M1240.8,1386.9 L1303.8,1387.1 M1324.6,1386.9 L1353.3,1387.1 M1644.2,1386.9 L1695.7,1386.7 M518.9,1415.2 L545.8,1415.4 M630.1,1415.2 L675.0,1415.3 M682.9,1415.2 L714.3,1414.5 M740.4,1415.2 L820.1,1415.1 M832.2,1415.2 L891.5,1414.2 M1014.1,1415.2 L1042.4,1415.1 M1149.6,1415.2 L1221.7,1416.1 M1250.2,1415.2 L1317.3,1415.9 M1446.0,1415.2 L1521.7,1415.8 M1547.9,1415.2 L1600.0,1414.8 M1611.1,1415.2 L1698.1,1415.4 M1703.5,1415.2 L1735.6,1415.0 M434.3,1434.0 L502.4,1433.7 M512.0,1434.0 L542.0,1433.7 M833.1,1434.0 L860.3,1433.8 M1000.4,1434.0 L1036.9,1433.7 M1053.4,1434.0 L1135.3,1434.0 M1137.7,1434.0 L1166.1,1434.0 M1167.0,1434.0 L1245.4,1434.6 M1300.4,1434.0 L1352.9,1434.5 M1414.0,1434.0 L1444.7,1433.8 M1472.7,1434.0 L1512.3,1434.1 M1537.9,1434.0 L1572.3,1433.3 M1600.5,1434.0 L1672.7,1433.7 M1690.3,1434.0 L1735.5,1434.4 M471.5,1450.8 L521.2,1450.7 M728.2,1450.8 L771.2,1449.8 M860.2,1450.8 L921.0,1451.2 M927.2,1450.8 L1009.6,1451.6 M1010.6,1450.8 L1033.5,1450.8 M1036.1,1450.8 L1093.9,1450.0 M1370.1,1450.8 L1432.1,1450.0 M1548.0,1450.8 L1615.9,1451.6 M1624.1,1450.8 L1669.8,1450.7 M1689.8,1450.8 L1728.5,1450.7 M434.3,1476.9 L463.2,1476.4 M537.4,1476.9 L599.6,1476.8 M621.6,1476.9 L697.9,1476.0 M807.6,1476.9 L851.4,1477.0 M854.4,1476.9 L920.8,1476.9 M1009.5,1476.9 L1071.5,1477.2 M1091.0,1476.9 L1128.8,1476.2 M1157.0,1476.9 L1207.7,1477.6 M1220.6,1476.9 L1269.4,1476.8 M1463.2,1476.9 L1489.6,1477.0 M1507.6,1476.9 L1575.2,1477.7 M1603.3,1476.9 L1664.2,1476.6 M1674.5,1476.9 L1731.0,1477.2 M434.3,1495.7 L523.7,1494.7 M552.4,1495.7 L601.7,1496.2 M724.0,1495.7 L812.6,1495.3 M907.3,1495.7 L932.1,1495.5 M1263.9,1495.7 L1324.6,1495.6 M1546.5,1495.7 L1611.4,1496.4 M1622.5,1495.7 L1675.4,1495.1" stroke="#494949" stroke-width="1" fill="none" clip-path="url(#z4)"/>
<clipPath id="z4b"><polygon points="677.0,760.0 1100.0,760.0 900.0,976.0 677.0,976.0"/></clipPath>
<path d="M768.5,449.3 L749.5,475.8 M748.7,477.6 L730.6,504.9 M674.8,583.2 L657.2,609.4 M645.7,624.7 L632.7,642.6 M608.2,678.4 L593.4,699.1 M588.5,706.5 L572.8,728.0 M565.3,739.6 L550.5,760.7 M543.9,770.1 L531.5,787.7 M518.9,805.8 L508.4,819.8 M502.6,829.1 L485.7,854.2 M439.7,919.0 L429.9,933.7 M825.2,410.6 L804.2,440.6 M750.2,517.7 L742.8,528.9 M639.9,675.3 L628.9,692.3 M619.3,704.8 L601.5,729.1 M588.6,748.6 L579.8,760.3 M545.3,810.4 L525.7,836.6 M809.1,463.4 L790.8,489.6 M784.5,498.4 L759.0,535.5 M694.5,627.0 L678.7,649.3 M674.5,655.6 L653.5,684.2 M650.6,689.8 L632.2,714.6 M606.9,752.1 L588.9,776.8 M471.1,946.1 L462.2,958.4 M454.0,970.5 L440.3,990.6 M795.3,515.0 L772.5,548.3 M768.3,553.5 L744.9,586.5 M717.9,625.5 L708.6,637.8 M705.6,643.1 L688.8,667.5 M662.1,705.2 L641.9,732.7 M500.1,936.6 L477.6,968.5 M472.0,976.7 L459.1,996.3 M793.2,544.4 L770.5,577.0 M768.1,580.2 L751.8,602.1 M664.8,727.7 L652.7,745.9 M647.0,753.1 L631.9,772.9 M614.3,799.8 L605.9,812.6 M598.3,822.7 L592.9,832.1 M549.8,891.9 L541.4,904.9 M520.6,933.7 L505.4,956.1 M484.1,985.8 L465.3,1011.9 M883.8,451.6 L861.1,484.4 M850.9,498.5 L844.8,507.8 M681.6,740.3 L675.8,748.7 M656.7,775.9 L646.9,788.9 M642.7,795.8 L623.1,824.2 M594.9,864.2 L578.7,887.3 M511.9,982.7 L494.1,1006.6 M898.5,461.9 L886.0,478.7 M880.5,487.5 L872.2,498.9 M779.2,632.2 L767.8,648.2 M663.8,797.0 L658.1,806.6 M574.1,925.0 L568.1,934.4 M523.3,997.7 L504.9,1023.7 M902.3,497.3 L895.2,507.9 M886.1,520.5 L861.1,557.4 M829.1,602.0 L809.2,629.9 M801.2,641.7 L784.5,665.2 M734.9,736.5 L718.5,760.3 M706.9,776.5 L680.5,812.6 M663.3,838.7 L657.1,847.7 M644.2,866.0 L633.6,881.5 M534.2,1023.0 L521.2,1043.2 M934.1,486.9 L921.9,503.3 M895.6,541.9 L874.8,569.9 M866.7,583.2 L858.1,594.2 M828.8,637.4 L815.1,655.2 M757.6,739.0 L742.0,762.1 M719.3,793.7 L700.8,818.7 M549.1,1036.8 L527.6,1067.6 M884.3,596.2 L864.8,624.6 M769.8,759.6 L758.2,776.3 M756.2,779.0 L744.6,796.1 M741.6,799.9 L733.0,811.7 M652.7,926.8 L633.4,952.7 M564.7,1052.6 L552.8,1068.4 M966.7,509.6 L952.9,530.0 M941.0,546.3 L923.9,569.8 M913.0,586.4 L903.8,598.9 M892.6,615.5 L875.5,638.4 M700.7,889.6 L684.0,914.4 M678.0,921.9 L670.1,932.6 M670.3,933.0 L645.9,966.3 M636.0,982.0 L614.3,1012.3 M579.9,1062.0 L573.4,1072.9 M983.0,521.1 L968.4,543.2 M855.3,703.5 L841.7,722.0 M641.9,1008.3 L634.8,1019.4 M629.1,1026.5 L616.2,1044.5 M953.5,602.3 L943.4,617.9 M868.8,723.2 L854.8,741.7 M782.7,846.2 L762.7,874.7 M756.5,883.7 L742.4,904.7 M740.2,906.9 L722.9,930.3 M683.9,987.3 L671.1,1004.4 M660.2,1021.1 L641.9,1047.8 M617.6,1082.0 L610.9,1093.0 M1002.7,570.2 L980.4,602.5 M971.7,614.4 L958.4,631.7 M923.2,683.7 L917.6,691.9 M895.9,722.6 L870.9,758.9 M833.8,811.4 L817.9,832.7 M791.5,871.8 L769.3,905.0 M732.9,955.5 L708.5,990.5 M1039.1,560.4 L1025.7,578.4 M971.2,657.4 L964.6,667.9 M953.9,682.0 L938.4,705.8 M934.1,710.3 L911.8,740.5 M829.8,859.2 L814.7,880.5 M813.8,882.1 L791.2,913.6 M1051.3,568.9 L1026.1,604.6 M1022.3,610.3 L1016.3,618.9 M1010.4,627.3 L1004.9,636.1 M1003.8,636.7 L984.2,664.9 M913.9,765.1 L905.8,776.4 M897.3,788.8 L880.0,814.7 M866.4,833.0 L853.0,851.1 M844.5,864.2 L839.3,873.3 M804.2,921.8 L782.8,952.3 M739.3,1014.5 L721.0,1042.0 M702.4,1067.2 L694.3,1078.8 M693.0,1080.7 L681.9,1098.0 M1069.9,581.9 L1054.3,604.0 M996.4,686.9 L981.3,708.4 M888.0,841.7 L879.0,854.5 M877.9,856.2 L852.4,893.0 M786.0,987.4 L769.2,1011.9 M761.4,1022.6 L737.5,1058.2 M733.8,1062.0 L712.0,1094.6 M1088.8,595.1 L1073.7,615.7 M1066.4,627.1 L1053.9,645.6 M1042.1,661.8 L1032.4,676.6 M1026.9,683.5 L1008.2,709.4 M996.8,726.5 L988.8,736.3 M929.5,822.5 L913.3,847.1 M887.5,882.6 L877.0,898.5 M807.4,996.9 L790.2,1023.0 M784.4,1029.8 L765.3,1058.0 M735.7,1099.4 L715.1,1130.0 M1109.2,609.4 L1093.6,633.2 M1079.0,652.6 L1069.3,667.3 M1055.3,686.4 L1041.0,706.5 M1040.0,708.2 L1017.6,739.4 M878.9,938.4 L861.8,963.3 M852.0,976.8 L828.5,1011.4 M799.4,1051.9 L793.4,1060.6 M1061.6,709.4 L1047.9,728.8 M1024.4,762.5 L1011.6,781.3 M989.0,813.0 L977.5,828.1 M948.5,871.0 L937.4,886.0 M836.9,1030.3 L820.8,1053.8 M787.0,1101.6 L779.9,1112.8 M774.7,1119.2 L764.6,1133.1 M756.0,1145.9 L731.2,1182.3 M1139.6,630.7 L1129.9,643.7 M1127.2,648.5 L1110.1,673.8 M1078.0,718.8 L1059.0,745.7 M1010.6,815.1 L987.2,849.9 M927.5,933.8 L903.7,969.4 M873.9,1010.2 L863.3,1026.6 M817.9,1090.2 L802.8,1113.2 M797.3,1119.7 L778.5,1146.2 M769.0,1160.1 L754.0,1181.1 M1090.6,745.0 L1074.3,769.8 M994.0,883.0 L980.9,900.0 M971.0,915.8 L950.4,944.2 M910.4,1002.3 L894.9,1024.5 M838.5,1105.0 L814.1,1140.2 M795.8,1166.0 L787.4,1178.5 M773.5,1197.9 L755.2,1223.7 M1129.7,714.7 L1122.0,725.4 M1109.0,744.3 L1083.1,780.5 M1023.1,867.0 L1012.1,881.9 M948.9,973.0 L940.1,986.9 M927.2,1003.9 L911.5,1024.7 M904.9,1035.8 L895.3,1048.1 M1059.0,840.7 L1039.5,867.8 M1030.5,881.3 L1019.5,898.2 M934.0,1019.2 L924.1,1033.3 M856.2,1130.3 L847.0,1144.7 M1095.7,831.1 L1081.0,851.5 M1043.2,906.1 L1035.3,918.3 M1025.6,931.3 L1006.2,959.3 M1001.3,965.9 L986.8,985.5 M876.8,1143.7 L859.6,1169.3 M846.1,1187.6 L828.9,1212.0 M1176.6,743.1 L1154.6,775.9 M1146.5,786.1 L1134.8,802.7 M1061.7,907.2 L1040.4,939.3 M1026.7,957.2 L1004.7,986.9 M993.6,1004.5 L983.1,1018.2 M974.9,1031.1 L955.7,1059.5 M952.2,1063.7 L928.9,1097.3 M915.6,1115.8 L897.3,1140.5 M889.0,1153.9 L864.9,1188.9 M1234.4,697.1 L1227.2,705.9 M1216.6,722.4 L1203.1,740.2 M1201.1,744.5 L1177.0,779.8 M1146.9,822.0 L1121.5,857.7 M1114.6,868.2 L1094.5,896.7 M1083.5,912.6 L1073.4,925.7 M1051.2,958.7 L1034.8,981.1 M959.8,1089.2 L949.6,1102.0 M872.9,1213.3 L855.1,1239.3 M1246.0,705.2 L1234.7,720.5 M1230.1,728.0 L1214.8,749.2 M1110.6,898.6 L1095.8,918.4 M1077.4,946.1 L1054.1,977.7 M1043.7,994.1 L1029.2,1016.2 M1005.0,1049.5 L981.3,1082.4 M891.4,1211.6 L871.8,1238.0 M1259.2,714.4 L1236.1,747.4 M1159.2,857.2 L1140.5,885.4 M1086.6,960.9 L1071.9,983.0 M947.2,1160.0 L938.6,1173.8 M937.7,1173.5 L929.5,1185.6 M913.9,1207.5 L899.7,1228.7 M898.9,1228.9 L885.4,1249.9 M871.3,1268.4 L848.7,1302.2 M1158.4,886.4 L1148.2,899.5 M1119.4,942.1 L1107.8,960.1 M1100.6,968.9 L1079.7,1000.0 M1067.3,1016.4 L1051.5,1039.4 M1013.8,1092.9 L992.5,1122.0 M986.6,1131.7 L975.1,1148.3 M943.9,1192.6 L934.2,1207.0 M920.4,1226.3 L910.9,1239.9 M908.3,1243.5 L885.7,1276.5 M1274.2,766.3 L1257.2,790.6 M1249.0,802.2 L1241.5,814.1 M1235.2,821.9 L1217.7,847.4 M1179.3,901.9 L1164.7,921.8 M1163.3,924.6 L1147.3,947.5 M1141.8,955.3 L1123.5,980.3 M1116.5,991.4 L1104.7,1008.6 M1098.1,1017.7 L1085.2,1037.4 M983.4,1181.6 L971.6,1198.4 M961.9,1212.3 L951.0,1226.3 M915.0,1279.3 L905.7,1293.2 M1294.2,768.3 L1278.8,790.4 M1270.5,802.0 L1251.8,828.7 M1217.9,877.2 L1211.3,887.6 M1089.7,1060.3 L1076.1,1080.8 M977.0,1221.3 L970.4,1230.6 M956.8,1250.1 L946.0,1267.1 M942.9,1270.0 L920.9,1301.3 M1325.2,760.6 L1299.3,796.8 M1272.4,836.0 L1258.5,855.2 M1251.6,865.7 L1236.4,886.3 M1225.7,902.7 L1200.8,938.0 M1125.0,1046.5 L1101.3,1078.8 M1088.4,1098.8 L1067.9,1129.0 M1063.0,1135.1 L1044.0,1163.5 M957.2,1286.2 L946.5,1301.2 M1345.5,774.9 L1323.1,805.4 M1165.8,1031.6 L1154.7,1047.2 M1111.6,1109.0 L1096.1,1131.2 M1083.4,1149.2 L1072.4,1166.3 M1000.4,1267.7 L977.6,1301.3 M967.1,1315.3 L952.5,1334.7 M927.2,482.0 L936.5,488.5 M1121.8,618.3 L1156.1,642.1 M1314.8,753.4 L1330.3,763.4 M1354.2,781.0 L1387.0,802.9 M829.6,440.2 L845.5,451.4 M1005.3,563.2 L1020.4,573.1 M1109.9,636.4 L1139.2,657.2 M1275.2,752.2 L1312.1,777.5 M1129.0,667.9 L1148.6,682.8 M1172.2,698.1 L1189.1,710.1 M1322.0,803.0 L1335.3,812.9 M772.1,444.2 L805.2,468.3 M1071.8,654.0 L1091.6,667.1 M1113.2,683.0 L1146.6,705.6 M1164.1,718.6 L1183.4,733.2 M1216.2,755.1 L1241.3,773.0 M1286.2,804.1 L1305.2,818.4 M875.4,541.5 L893.6,554.8 M998.2,627.5 L1028.6,649.2 M1086.3,689.2 L1121.2,713.6 M1133.2,722.0 L1158.1,739.2 M1271.0,818.5 L1296.1,836.3 M785.3,497.7 L819.0,520.7 M833.7,531.5 L845.9,540.7 M874.0,559.7 L895.6,575.5 M961.8,621.3 L977.6,633.0 M1008.4,653.8 L1036.8,673.4 M1096.9,715.8 L1107.7,723.7 M1114.3,728.0 L1143.2,747.0 M1210.8,795.6 L1223.6,804.2 M1278.8,843.2 L1310.5,865.6 M945.2,637.0 L967.4,652.6 M1067.9,722.9 L1088.3,736.2 M1247.8,848.9 L1275.7,869.0 M842.2,586.9 L874.4,608.9 M917.1,639.3 L933.9,651.2 M1011.3,705.3 L1027.6,717.8 M1047.0,730.3 L1058.3,737.9 M1119.1,780.8 L1133.8,792.0 M1193.2,832.7 L1223.8,855.1 M891.3,647.8 L924.7,672.2 M1100.1,794.1 L1125.0,812.7 M1179.0,849.3 L1208.8,871.0 M704.6,540.6 L727.8,557.5 M760.1,579.4 L791.6,600.6 M936.7,703.1 L967.3,725.3 M1047.9,780.9 L1082.3,804.0 M690.2,561.3 L709.1,573.5 M714.7,578.5 L738.9,595.2 M781.6,625.3 L813.8,647.9 M951.1,744.0 L986.7,767.8 M1067.4,825.4 L1093.0,842.3 M1189.4,910.8 L1207.8,924.7 M764.3,643.4 L775.2,650.0 M873.8,720.0 L907.5,742.5 M1052.1,844.9 L1071.5,859.3 M1187.2,939.5 L1206.5,953.5 M1222.7,964.4 L1249.5,983.0 M679.5,601.5 L706.8,621.3 M715.1,626.4 L733.5,639.8 M748.4,649.8 L781.3,673.8 M836.9,711.7 L852.0,721.9 M863.0,729.9 L898.8,755.5 M926.1,774.2 L938.0,781.4 M1037.4,852.1 L1053.5,864.2 M653.2,614.0 L688.6,639.7 M711.8,655.0 L743.2,677.0 M799.5,716.5 L828.1,737.3 M835.9,741.9 L864.8,761.9 M1046.8,889.6 L1068.5,905.0 M676.8,655.6 L705.7,675.2 M760.9,714.5 L772.7,723.5 M822.9,757.9 L846.2,774.3 M850.0,776.9 L865.5,787.8 M880.7,798.4 L905.2,815.9 M915.9,823.1 L951.2,846.9 M1050.8,917.5 L1078.1,935.7 M632.8,643.2 L646.6,652.2 M692.9,685.3 L726.7,709.7 M737.5,716.5 L767.9,736.6 M813.8,769.9 L846.7,794.0 M890.8,823.8 L924.0,847.7 M982.6,888.1 L1005.8,903.2 M1132.3,993.0 L1150.3,1005.1 M838.8,812.4 L867.9,833.7 M886.1,845.6 L910.7,862.1 M921.7,870.5 L949.4,891.0 M1035.4,950.1 L1046.6,957.3 M1062.1,968.8 L1080.6,981.5 M1135.3,1020.1 L1170.3,1043.4 M712.4,749.5 L746.8,773.1 M767.5,788.1 L789.9,804.7 M830.5,832.1 L845.9,842.9 M983.3,939.2 L998.4,950.3 M1016.4,962.4 L1049.3,985.7 M627.4,713.7 L648.0,728.3 M652.9,731.5 L682.9,753.1 M864.3,879.5 L883.5,892.3 M894.5,900.7 L913.6,913.7 M588.3,706.7 L617.5,728.2 M629.3,735.3 L641.0,743.1 M665.2,760.5 L687.3,775.4 M705.9,789.0 L731.7,806.7 M748.6,818.9 L778.3,840.5 M928.6,944.9 L947.6,957.8 M963.8,969.6 L979.2,979.4 M988.8,987.1 L1008.5,999.6 M609.3,742.7 L641.3,765.9 M738.3,833.1 L749.9,840.0 M902.5,948.1 L923.3,962.9 M932.9,969.3 L968.7,995.0 M1051.4,1052.3 L1087.4,1076.5 M566.5,737.9 L586.5,752.8 M596.3,758.7 L621.4,775.7 M787.3,892.5 L802.6,902.2 M940.4,999.6 L965.2,1017.8 M985.6,1031.3 L1016.2,1051.9 M626.6,803.6 L642.2,815.5 M665.9,831.2 L683.8,842.7 M825.2,942.7 L840.6,952.5 M914.7,1005.4 L950.6,1031.1 M960.6,1037.6 L982.7,1052.3 M1000.0,1065.1 L1031.0,1086.7 M1042.5,1094.9 L1057.0,1105.5 M1070.6,1114.6 L1103.4,1137.9 M546.0,767.2 L566.1,780.5 M571.7,785.2 L603.8,807.0 M673.6,856.5 L685.7,865.9 M746.2,907.4 L770.8,924.3 M920.6,1029.5 L949.8,1049.5 M974.6,1067.3 L1002.0,1086.0 M534.3,783.9 L561.7,803.2 M569.3,808.4 L592.4,823.6 M724.1,916.8 L754.5,937.1 M523.8,798.8 L551.6,819.3 M613.0,861.3 L624.3,869.3 M634.2,876.1 L661.8,895.5 M668.1,899.9 L698.4,921.8 M732.5,945.0 L768.2,969.1 M813.9,1002.0 L837.1,1017.6 M885.8,1052.3 L909.2,1068.8 M974.6,1114.5 L1000.5,1133.6 M1013.1,1141.4 L1048.8,1165.9 M547.2,843.8 L565.0,856.4 M611.1,888.5 L631.7,904.1 M656.0,920.0 L683.2,939.0 M715.9,961.9 L729.6,972.6 M742.5,980.5 L752.2,986.6 M767.1,997.8 L780.6,1008.4 M794.8,1017.1 L825.8,1037.9 M963.6,1135.4 L996.6,1157.7 M1028.9,1181.1 L1046.0,1192.6 M497.4,836.6 L518.9,851.7 M577.2,892.4 L590.4,902.0 M606.0,912.6 L623.9,924.4 M845.8,1080.5 L864.9,1094.3 M956.0,1157.6 L967.5,1165.7 M564.8,908.7 L598.1,931.6 M613.0,942.4 L634.7,958.3 M654.9,971.8 L680.4,990.4 M990.1,1206.5 L1010.1,1219.7 M586.2,942.3 L600.5,952.8 M602.4,953.7 L624.9,969.7 M843.2,1122.3 L851.7,1129.3 M934.2,1186.0 L953.6,1198.9 M982.8,1220.0 L1003.1,1234.5 M1011.1,1239.8 L1036.0,1258.3 M569.5,958.6 L583.1,967.8 M625.6,997.9 L635.9,1006.3 M769.2,1098.4 L778.3,1104.3 M796.6,1117.7 L824.8,1137.7 M871.8,1170.3 L896.8,1188.3 M910.9,1197.7 L947.1,1222.4 M990.7,1253.5 L1018.2,1273.2 M451.0,902.9 L483.7,926.0 M616.3,1018.7 L628.5,1028.3 M672.4,1057.9 L702.6,1079.5 M791.6,1141.4 L813.5,1157.7 M829.4,1167.9 L862.0,1190.5 M905.6,1221.3 L941.4,1247.0 M962.2,1260.9 L996.3,1285.4 M440.5,917.8 L465.6,935.8 M468.5,937.4 L479.7,944.5 M492.6,954.3 L507.2,965.4 M615.3,1040.2 L647.1,1062.4 M682.4,1087.2 L715.8,1110.9 M470.1,961.5 L486.7,972.5 M521.5,997.4 L555.9,1020.6 M608.1,1058.1 L637.2,1079.1 M657.2,1092.5 L665.1,1098.7 M738.9,1149.7 L762.1,1165.4 M882.5,1250.2 L893.6,1257.2 M940.0,1290.5 L956.7,1303.1" stroke="#444444" stroke-width="1" fill="none" clip-path="url(#z4b)"/>
<path d="M1180,180 C1200,230 1230,260 1260,280 C1290,300 1310,330 1330,380" fill="none" stroke="#393939" stroke-width="1.20" stroke-linecap="round" stroke-linejoin="round" />
<path d="M1240,167 C1250,200 1270,230 1300,250" fill="none" stroke="#393939" stroke-width="1.10" stroke-linecap="round" stroke-linejoin="round" />
<path d="M880,190 C900,210 930,215 960,205" fill="none" stroke="#444" stroke-width="1.00" stroke-linecap="round" stroke-linejoin="round" />
<path d="M677,223 C715,245 745,272 762,298 C776,322 782,350 792,368 C804,386 822,396 842,404 L866,414" fill="none" stroke="#585858" stroke-width="3.60" stroke-linecap="round" stroke-linejoin="round" />
<path d="M677,246 L802,314" fill="none" stroke="#4e4e4e" stroke-width="1.40" stroke-linecap="round" stroke-linejoin="round" />
<path d="M724,678 C740,686 752,694 766,700 L792,708" fill="none" stroke="#585858" stroke-width="4.00" stroke-linecap="round" stroke-linejoin="round" />
<path d="M724,721 L753,705 L768,699" fill="none" stroke="#585858" stroke-width="3.50" stroke-linecap="round" stroke-linejoin="round" />
<path d="M841,692 C858,684 880,674 904,665 C920,658 934,648 946,634 L960,628 L1120,628 C1200,626 1260,620 1300,622 C1330,628 1343,640 1355,650 C1370,657 1400,657 1486,659" fill="none" stroke="#515151" stroke-width="6.50" stroke-linecap="round" stroke-linejoin="round" />
<path d="M945,630 L945,790" fill="none" stroke="#535353" stroke-width="5.00" stroke-linecap="round" stroke-linejoin="round" />
<path d="M724,923 C760,910 800,898 848,885 C870,876 900,869 926,869 L1000,867 C1030,866 1050,862 1090,850" fill="none" stroke="#555" stroke-width="3.00" stroke-linecap="round" stroke-linejoin="round" />
<path d="M1050,962 C1090,935 1107,920 1150,893 C1190,872 1216,856 1260,840 C1306,824 1340,808 1373,797 C1410,787 1441,784 1486,781" fill="none" stroke="#575757" stroke-width="3.20" stroke-linecap="round" stroke-linejoin="round" />
<path d="M1268,725 C1266,760 1266,786 1250,811 C1240,822 1234,830 1236,842 L1240,880" fill="none" stroke="#505050" stroke-width="2.20" stroke-linecap="round" stroke-linejoin="round" />
<path d="M1441,770 L1441,976" fill="none" stroke="#505050" stroke-width="2.00" stroke-linecap="round" stroke-linejoin="round" />
<path d="M1290,437 C1300,470 1320,490 1340,500 C1370,520 1395,545 1420,570" fill="none" stroke="#4e4e4e" stroke-width="1.80" stroke-linecap="round" stroke-linejoin="round" />
<path d="M677,560 C720,580 760,600 800,640" fill="none" stroke="#4a4a4a" stroke-width="1.40" stroke-linecap="round" stroke-linejoin="round" />
<path d="M690,760 C700,800 720,860 760,976" fill="none" stroke="#4c4c4c" stroke-width="1.60" stroke-linecap="round" stroke-linejoin="round" />
<path d="M1110,976 C1150,930 1180,900 1190,880" fill="none" stroke="#4c4c4c" stroke-width="1.40" stroke-linecap="round" stroke-linejoin="round" />
<path d="M1000,520 C1030,580 1060,620 1100,640" fill="none" stroke="#4a4a4a" stroke-width="1.20" stroke-linecap="round" stroke-linejoin="round" />
<ellipse cx="732" cy="668" rx="12" ry="5" fill="#1e1e1e"/>
<polygon points="852.0,303.0 840.0,318.0 822.0,336.0 810.0,352.0 806.0,370.0 812.0,380.0 826.0,376.0 838.0,360.0 846.0,340.0 850.0,320.0" fill="#2b2b2b" />
<path d="M806.0,362.0 L852.0,310.0" fill="none" stroke="#3c3c3c" stroke-width="1.20" stroke-linecap="round" stroke-linejoin="round" />
<path d="M806.0,371.0 L852.0,319.0" fill="none" stroke="#3c3c3c" stroke-width="1.20" stroke-linecap="round" stroke-linejoin="round" />
<path d="M806.0,380.0 L852.0,328.0" fill="none" stroke="#3c3c3c" stroke-width="1.20" stroke-linecap="round" stroke-linejoin="round" />
<path d="M806.0,389.0 L852.0,337.0" fill="none" stroke="#3c3c3c" stroke-width="1.20" stroke-linecap="round" stroke-linejoin="round" />
<path d="M806.0,398.0 L852.0,346.0" fill="none" stroke="#3c3c3c" stroke-width="1.20" stroke-linecap="round" stroke-linejoin="round" />
<path d="M806.0,407.0 L852.0,355.0" fill="none" stroke="#3c3c3c" stroke-width="1.20" stroke-linecap="round" stroke-linejoin="round" />
<path d="M806.0,416.0 L852.0,364.0" fill="none" stroke="#3c3c3c" stroke-width="1.20" stroke-linecap="round" stroke-linejoin="round" />
<polygon points="1064.0,207.5 1068.6,210.9 1072.0,215.4 1074.9,218.3 1076.4,222.1 1082.0,218.8 1085.9,220.3 1088.8,223.3 1091.2,228.3 1090.6,233.7 1091.0,239.0 1095.4,241.0 1095.5,245.8 1092.6,251.0 1093.3,257.0 1086.5,259.3 1083.0,256.6 1078.6,257.0 1074.0,260.4 1073.0,266.0 1068.6,267.4 1064.0,267.0 1059.6,264.1 1055.0,261.5 1051.1,265.0 1046.0,263.8 1040.4,261.9 1037.0,257.0 1031.9,253.4 1025.8,254.8 1022.9,250.7 1022.4,245.8 1027.3,242.1 1030.3,236.8 1035.9,231.1 1038.3,226.8 1037.0,222.1 1041.4,220.4 1046.0,221.0 1050.6,220.2 1054.1,217.5 1057.3,214.3 1062.0,212.2" fill="#1a1c68" stroke="#5b55a8" stroke-width="1.30" stroke-linejoin="round" fill-opacity="0.9"/>
<polygon points="916.8,279.3 921.0,282.0 922.6,286.9 925.8,290.5 927.5,295.6 932.5,297.3 931.2,302.2 935.0,306.1 934.8,310.8 938.0,307.3 942.6,308.5 947.5,311.7 948.3,317.5 951.3,320.9 952.1,325.2 952.2,329.8 955.0,333.3 951.5,336.2 953.0,341.2 950.5,344.5 947.8,347.6 946.0,351.3 941.6,353.0 936.3,352.3 932.5,355.8 930.1,360.1 925.8,362.5 921.5,360.7 916.8,360.3 913.9,356.4 910.0,353.5 904.7,350.8 898.8,351.3 895.6,348.4 891.8,346.9 887.5,346.8 881.8,345.0 878.5,340.0 876.5,335.4 874.0,331.0 869.5,326.5 867.0,322.3 867.3,317.5 869.4,313.5 870.0,308.6 875.6,306.6 876.3,301.8 879.6,299.3 884.0,299.3 887.5,297.3 893.3,297.1 898.8,295.0 902.9,293.9 905.5,290.5 909.5,287.0 911.7,281.6" fill="#1a1c68" stroke="#5b55a8" stroke-width="1.30" stroke-linejoin="round" fill-opacity="0.9"/>
<polygon points="885.3,349.0 889.5,348.4 893.2,351.9 897.4,351.0 901.2,353.2 905.5,351.3 908.8,354.0 911.0,357.8 914.5,360.3 920.0,360.6 923.5,364.8 923.5,369.1 924.5,373.1 928.0,376.0 930.2,379.8 935.6,380.4 937.0,385.0 941.9,386.6 944.4,391.1 948.3,394.0 944.7,397.9 946.0,403.0 942.9,406.0 938.9,406.9 934.8,407.5 929.5,407.6 924.9,410.4 920.0,412.0 915.3,410.8 912.3,415.5 907.7,414.6 903.5,415.0 900.0,418.0 896.1,419.5 891.5,418.8 888.3,422.7 884.6,424.7 880.0,424.0 874.9,423.3 870.3,420.7 865.0,421.0 858.3,421.0 856.0,416.5 851.5,414.3 851.0,409.5 848.5,405.9 844.8,403.0 843.9,397.8 842.2,393.0 838.0,389.5 838.0,382.8 841.6,380.3 846.3,379.5 849.3,376.0 854.3,374.8 858.3,371.5 858.7,366.1 862.2,362.2 865.0,358.0 867.8,354.2 873.4,355.0 876.3,351.3 881.4,352.6" fill="#1a1c68" stroke="#5b55a8" stroke-width="1.30" stroke-linejoin="round" fill-opacity="0.9"/>
<polygon points="865.0,407.5 869.3,405.3 874.1,406.6 878.5,405.3 881.4,401.3 886.4,401.9 890.0,399.4 894.3,398.5 898.5,397.5 902.0,394.8 905.4,391.9 910.0,391.8 915.0,393.1 919.0,396.3 919.6,401.2 924.3,403.7 923.9,409.1 928.0,412.0 932.3,414.5 933.2,420.3 939.7,420.5 941.5,425.5 943.2,429.3 941.6,434.0 946.2,437.0 946.0,441.3 942.9,444.4 945.4,449.7 941.5,452.5 938.1,455.1 934.7,457.7 932.5,461.5 931.0,467.4 925.8,470.5 922.8,467.2 919.0,465.5 914.5,466.0 910.4,463.0 905.5,461.5 902.4,458.6 900.3,454.7 896.5,452.5 892.0,453.3 887.6,454.1 883.3,456.3 878.6,454.9 874.0,454.8 869.9,450.9 865.0,448.0 865.9,443.5 863.8,438.7 866.0,434.4 867.3,430.0 867.3,425.5 868.9,420.7 867.3,416.4 866.8,411.9" fill="#1a1c68" stroke="#5b55a8" stroke-width="1.30" stroke-linejoin="round" fill-opacity="0.9"/>
<polygon points="861.0,462.8 865.2,462.1 869.2,461.1 872.4,458.5 875.0,455.0 879.0,457.9 883.6,453.9 887.6,456.6 891.6,458.8 896.0,457.0 899.6,459.1 903.9,460.0 908.4,460.3 910.2,466.2 915.0,466.0 919.0,468.2 923.6,467.6 927.3,470.9 932.0,470.0 936.4,472.2 940.6,474.9 944.2,478.4 949.0,480.0 952.1,483.6 952.3,487.7 950.9,492.0 952.2,495.9 952.0,500.0 949.6,503.7 948.0,507.5 949.0,512.0 944.0,513.4 940.0,510.0 936.0,512.7 931.9,515.4 930.7,520.9 926.5,523.5 924.4,526.9 921.5,529.9 917.7,532.2 917.5,537.0 913.9,534.9 909.8,534.2 906.0,532.5 902.3,534.8 901.7,540.2 897.0,541.5 892.3,540.7 888.6,538.0 885.0,535.5 881.5,532.5 876.4,531.4 873.1,526.8 868.0,525.8 867.9,521.5 867.6,517.4 863.1,514.4 863.5,510.0 861.4,505.8 865.1,501.3 865.2,497.0 861.6,492.9 860.4,488.6 862.4,484.2 862.2,479.9 860.8,475.7 863.8,471.3 861.9,467.1" fill="#1a1c68" stroke="#5b55a8" stroke-width="1.30" stroke-linejoin="round" fill-opacity="0.9"/>
<polygon points="1066.0,340.0 1070.6,340.8 1075.1,340.7 1079.5,338.8 1084.0,339.0 1088.3,340.2 1091.5,342.7 1093.0,347.0 1097.1,350.6 1097.0,356.0 1104.0,358.0 1107.2,360.8 1108.4,365.6 1113.0,367.0 1117.4,371.6 1117.0,378.0 1114.1,380.8 1111.4,383.8 1109.0,387.0 1108.8,391.5 1108.2,396.0 1110.3,400.6 1108.0,405.0 1108.6,410.0 1111.9,414.7 1110.0,420.0 1108.8,424.0 1110.7,428.1 1109.3,432.0 1109.5,436.0 1109.0,440.0 1104.1,441.3 1100.1,444.3 1096.0,447.0 1092.4,449.5 1088.0,449.0 1084.0,447.2 1083.0,442.7 1080.0,440.0 1077.2,437.1 1074.4,434.2 1071.0,432.0 1067.5,427.3 1062.0,425.0 1057.3,422.3 1052.0,423.1 1047.0,422.0 1044.9,418.2 1044.7,414.2 1045.0,410.0 1044.1,405.2 1037.9,404.7 1037.0,400.0 1038.7,394.9 1036.3,390.0 1036.0,385.0 1033.7,380.1 1032.0,375.0 1033.4,370.0 1034.2,364.9 1036.0,360.0 1039.8,358.5 1042.7,355.4 1045.9,352.9 1050.0,352.0 1052.2,348.3 1055.9,346.5 1060.5,346.0 1062.7,342.3" fill="#1a1c68" stroke="#5b55a8" stroke-width="1.30" stroke-linejoin="round" fill-opacity="0.9"/>
<polygon points="1195.0,312.0 1199.3,308.4 1205.3,309.6 1210.0,307.0 1214.5,310.1 1220.6,308.5 1225.0,312.0 1227.4,316.3 1228.8,321.1 1232.0,325.0 1237.3,325.2 1239.2,331.1 1244.0,332.0 1245.7,336.2 1245.4,340.6 1245.0,345.0 1240.5,349.0 1240.0,355.0 1241.2,359.6 1239.5,363.8 1238.0,368.0 1233.3,367.1 1230.5,372.2 1226.0,372.0 1223.2,374.9 1219.7,377.3 1216.6,379.9 1215.0,384.0 1209.3,382.1 1205.0,378.0 1199.7,376.7 1197.0,372.0 1192.5,370.0 1188.0,368.0 1183.7,365.9 1181.7,362.1 1180.0,358.0 1175.1,354.9 1170.0,352.0 1165.6,349.1 1165.2,343.1 1161.0,340.0 1165.4,338.9 1165.9,333.4 1170.0,332.0 1175.6,330.7 1180.0,327.0 1183.9,323.3 1185.0,318.0 1189.5,314.2" fill="#1a1c68" stroke="#5b55a8" stroke-width="1.30" stroke-linejoin="round" fill-opacity="0.9"/>
<polygon points="932.5,466.0 935.0,461.8 939.7,459.7 940.8,454.1 946.0,452.5 947.9,448.4 950.4,444.9 956.6,445.1 957.2,439.7 961.8,438.3 964.0,434.5 966.8,431.1 969.5,427.4 974.5,426.6 977.5,423.3 981.3,427.0 986.8,429.0 988.8,434.5 994.3,432.7 1000.0,432.3 1001.8,436.6 1005.8,438.9 1008.1,442.7 1011.3,445.8 1016.3,448.3 1017.6,454.4 1022.5,457.0 1023.8,462.0 1027.9,465.6 1029.3,470.5 1031.6,474.7 1030.6,480.1 1033.8,484.0 1034.6,488.7 1030.0,492.7 1032.0,497.5 1032.5,502.8 1030.4,507.5 1028.0,512.0 1024.8,516.0 1022.3,520.5 1020.0,525.0 1015.4,526.2 1013.6,531.7 1008.2,531.6 1005.0,535.0 999.4,535.0 995.4,539.4 990.0,540.0 984.7,540.6 979.7,539.7 975.0,537.0 969.9,536.1 966.9,531.2 962.0,530.0 959.0,526.3 957.0,521.7 951.0,520.3 950.0,515.0 949.4,510.9 945.9,507.5 947.0,503.0 943.9,499.5 945.0,495.0 944.8,490.2 943.1,486.0 941.1,481.9 937.7,478.5 936.7,474.0 933.5,470.5" fill="#1a1c68" stroke="#5b55a8" stroke-width="1.30" stroke-linejoin="round" fill-opacity="0.9"/>
<polygon points="1045.3,500.8 1047.8,497.0 1052.6,495.5 1053.8,490.4 1058.9,489.2 1061.0,485.0 1062.5,480.8 1066.1,478.5 1068.2,474.8 1070.6,471.4 1074.5,469.3 1078.1,466.8 1079.9,462.0 1083.4,459.3 1088.0,458.0 1092.9,458.5 1096.5,453.7 1101.9,456.1 1106.0,453.5 1109.2,458.6 1115.0,460.3 1120.2,461.1 1123.0,466.8 1128.5,467.0 1129.9,472.0 1133.6,475.3 1137.5,478.3 1142.9,480.4 1145.7,485.1 1148.8,489.5 1149.8,494.8 1153.9,497.8 1157.8,500.8 1154.1,502.9 1150.6,505.2 1149.4,510.2 1144.1,510.3 1142.0,514.3 1139.8,517.7 1137.9,521.3 1133.1,523.0 1133.0,527.8 1127.8,529.4 1127.3,535.6 1122.9,538.0 1119.5,541.3 1116.1,544.7 1112.6,547.9 1109.2,551.3 1106.0,554.8 1101.5,553.4 1097.5,550.3 1092.5,550.3 1090.3,546.7 1085.9,545.0 1084.4,540.8 1083.7,536.0 1079.0,534.5 1074.4,533.0 1073.7,528.1 1070.2,525.7 1066.5,523.4 1065.5,518.8 1062.2,515.7 1060.2,511.2 1056.7,508.3 1051.9,507.0 1047.7,504.9" fill="#1a1c68" stroke="#5b55a8" stroke-width="1.30" stroke-linejoin="round" fill-opacity="0.9"/>
<polygon points="1164.5,539.0 1168.2,536.6 1167.9,531.5 1171.9,529.3 1173.5,525.5 1173.6,520.9 1178.4,517.9 1176.9,512.8 1178.7,508.7 1181.8,505.2 1182.5,500.8 1186.8,497.9 1187.6,492.5 1191.1,489.0 1193.8,485.0 1199.0,483.8 1201.7,479.5 1205.0,476.0 1208.5,473.9 1212.8,473.0 1215.0,469.1 1218.5,467.0 1223.0,466.6 1225.7,462.6 1230.7,463.0 1233.5,459.3 1238.3,460.9 1242.5,463.8 1246.4,467.2 1251.5,466.0 1253.9,469.7 1258.9,469.6 1262.5,471.4 1265.0,475.0 1267.3,479.5 1273.2,480.3 1274.8,485.4 1278.5,488.5 1283.3,490.2 1286.0,494.6 1289.8,497.5 1292.0,502.0 1288.4,504.7 1288.2,510.3 1284.2,512.6 1280.8,515.5 1277.8,519.5 1272.2,520.2 1269.5,524.5 1265.1,526.6 1262.8,531.4 1258.3,533.5 1254.3,537.6 1251.5,542.5 1249.7,547.4 1246.4,550.9 1240.7,551.9 1238.0,556.0 1235.2,559.4 1233.0,563.2 1230.6,567.0 1226.8,569.5 1223.6,572.0 1219.4,573.6 1218.0,578.0 1215.5,581.6 1212.8,584.8 1207.8,585.4 1205.0,588.5 1199.9,587.2 1196.6,583.6 1193.8,579.5 1188.9,577.4 1185.8,573.7 1185.3,567.9 1180.0,566.2 1178.0,561.5 1177.6,556.6 1172.6,554.5 1170.6,550.7 1170.0,545.9 1167.8,542.1" fill="#1a1c68" stroke="#5b55a8" stroke-width="1.30" stroke-linejoin="round" fill-opacity="0.9"/>
<polygon points="1242.5,574.0 1243.8,569.4 1248.2,567.3 1249.6,562.7 1253.8,560.5 1258.4,558.6 1260.2,553.2 1265.0,551.5 1270.0,549.8 1272.6,545.6 1274.5,540.7 1278.5,538.0 1283.4,535.4 1284.5,529.0 1289.8,526.8 1290.6,522.8 1295.1,520.2 1294.3,515.5 1294.6,510.8 1299.7,509.4 1300.2,504.8 1303.3,502.0 1308.8,500.4 1314.5,499.8 1317.3,504.0 1321.5,506.5 1325.8,508.8 1329.0,511.6 1332.8,513.0 1337.0,513.3 1336.3,517.9 1340.7,520.5 1341.5,524.5 1343.1,529.0 1343.8,533.7 1346.0,538.0 1350.6,539.9 1355.0,542.2 1357.3,547.0 1360.6,550.2 1364.5,551.6 1369.4,549.2 1373.0,551.5 1376.3,554.2 1377.5,558.3 1372.6,560.9 1371.5,567.2 1366.3,569.5 1365.6,574.8 1363.0,579.1 1359.5,583.0 1356.6,585.9 1354.1,589.5 1350.4,591.2 1346.0,592.0 1342.1,593.3 1339.3,596.6 1336.2,599.3 1332.3,600.7 1328.0,601.0 1322.4,602.9 1319.0,607.8 1314.5,609.0 1310.0,610.0 1305.5,609.6 1301.0,607.5 1296.5,610.0 1292.4,613.4 1290.2,618.7 1285.3,621.3 1280.6,618.2 1276.3,614.5 1273.9,610.7 1271.6,606.9 1267.2,604.9 1265.0,601.0 1260.2,599.2 1258.8,594.7 1257.0,590.5 1253.8,587.5 1249.2,585.6 1247.4,581.4 1244.2,578.3" fill="#1a1c68" stroke="#5b55a8" stroke-width="1.30" stroke-linejoin="round" fill-opacity="0.9"/>
<polygon points="989.0,557.0 992.2,554.5 996.9,554.3 997.8,548.3 1002.5,548.0 1004.5,543.9 1006.2,539.6 1012.8,539.4 1013.8,534.5 1016.4,530.0 1020.6,527.6 1025.0,525.5 1028.7,529.3 1033.4,531.2 1038.5,532.3 1042.9,533.5 1047.3,535.3 1052.0,534.5 1056.2,536.6 1055.9,541.7 1059.0,544.4 1061.0,548.0 1062.8,552.7 1069.1,552.0 1070.3,557.5 1074.5,559.3 1075.0,563.4 1074.5,567.6 1077.5,571.5 1075.3,575.8 1077.3,579.8 1076.8,584.0 1072.1,585.8 1067.7,588.1 1065.5,593.0 1062.4,595.6 1058.6,597.2 1056.3,601.1 1052.0,602.0 1047.8,602.2 1044.4,604.6 1040.8,606.5 1038.3,611.5 1033.7,614.4 1029.5,617.8 1024.0,617.5 1020.5,613.3 1017.0,610.9 1013.2,608.6 1014.3,602.2 1008.8,601.4 1007.0,597.5 1003.1,594.6 998.3,593.0 995.8,588.5 991.3,585.1 989.5,580.4 989.0,575.0 991.5,570.5 988.2,566.0 990.2,561.5" fill="#1a1c68" stroke="#5b55a8" stroke-width="1.30" stroke-linejoin="round" fill-opacity="0.9"/>
<polygon points="1108.3,611.0 1110.6,606.7 1115.7,604.7 1116.9,599.5 1122.7,598.2 1124.0,593.0 1127.1,589.7 1128.5,585.1 1131.1,581.5 1133.2,577.4 1137.5,575.0 1139.8,571.3 1144.4,570.3 1148.4,568.6 1150.5,564.6 1153.3,561.5 1157.1,565.1 1162.7,563.2 1166.8,566.0 1170.2,569.5 1173.9,572.4 1178.0,575.0 1182.5,576.2 1186.6,578.4 1190.4,580.8 1193.8,584.0 1199.0,584.1 1201.1,589.4 1204.5,592.7 1209.5,593.0 1213.1,595.5 1212.1,601.0 1215.7,603.5 1218.5,606.5 1215.1,609.6 1214.8,614.9 1210.4,617.3 1209.2,622.1 1205.0,624.5 1201.0,627.2 1198.1,631.1 1194.7,634.5 1191.5,638.0 1189.0,642.2 1184.7,644.7 1180.6,647.4 1178.0,651.5 1172.6,652.0 1168.0,654.0 1164.5,658.3 1160.2,656.2 1155.7,655.3 1150.7,656.1 1146.5,653.8 1143.4,651.0 1141.2,647.4 1136.8,645.7 1133.8,642.8 1133.0,638.0 1130.9,633.4 1125.7,631.8 1122.3,628.4 1119.5,624.5 1117.8,620.2 1114.7,617.1 1110.0,615.3" fill="#1a1c68" stroke="#5b55a8" stroke-width="1.30" stroke-linejoin="round" fill-opacity="0.9"/>
<polygon points="908.5,583.0 914.1,584.0 919.8,584.3 920.9,588.2 923.1,591.7 924.3,595.5 930.3,596.6 935.5,593.3 940.9,591.1 946.8,591.0 948.4,595.8 951.3,600.0 948.4,604.2 952.1,609.2 949.4,613.5 949.0,618.0 946.3,621.3 943.2,624.2 940.0,627.0 935.6,629.0 935.5,633.8 934.0,639.3 934.4,645.0 929.5,646.6 924.7,642.7 919.8,645.0 914.8,644.3 910.8,647.3 908.9,652.2 904.0,654.0 898.4,649.5 899.6,644.2 897.6,639.0 897.3,633.8 894.4,630.0 898.2,625.5 898.5,621.3 897.5,617.3 895.0,613.5 895.8,609.0 894.2,604.1 897.3,600.0 899.5,596.6 901.9,593.3 904.4,590.1 907.0,586.9" fill="#1a1c68" stroke="#5b55a8" stroke-width="1.30" stroke-linejoin="round" fill-opacity="0.9"/>
<polygon points="1382.0,556.0 1386.5,552.6 1386.5,547.0 1391.0,546.5 1395.7,546.7 1400.0,544.8 1403.3,542.1 1407.6,540.4 1409.0,535.8 1411.2,531.2 1415.8,529.0 1420.7,531.2 1426.0,530.0 1427.8,534.0 1423.8,538.1 1427.0,542.1 1426.9,546.2 1425.9,550.2 1425.3,554.2 1425.8,558.3 1423.4,562.3 1427.3,566.4 1426.9,570.4 1426.7,574.5 1426.0,578.5 1421.3,575.7 1415.8,576.3 1412.3,580.5 1407.1,581.3 1402.3,583.0 1399.7,578.7 1397.8,574.0 1392.7,572.7 1389.4,569.1 1386.5,565.0 1385.0,560.1" fill="#1a1c68" stroke="#5b55a8" stroke-width="1.30" stroke-linejoin="round" fill-opacity="0.9"/>
<polygon points="999.5,710.8 1003.0,708.8 1005.9,705.8 1009.5,703.8 1013.0,701.8 1016.4,698.9 1019.8,696.0 1020.6,691.0 1024.3,688.3 1026.6,683.1 1033.1,682.0 1035.5,677.0 1036.8,672.3 1040.9,670.0 1042.5,665.7 1046.8,663.5 1051.7,665.0 1056.1,663.9 1060.3,661.3 1064.6,662.6 1067.4,666.4 1071.5,668.0 1075.1,669.9 1079.4,670.8 1082.6,673.2 1085.0,677.0 1087.2,680.8 1092.1,681.9 1094.0,686.0 1097.2,688.7 1098.6,692.7 1100.7,696.1 1103.0,699.5 1104.4,705.1 1105.3,710.8 1100.8,713.4 1100.2,719.0 1096.3,722.0 1097.0,726.5 1098.1,731.0 1097.9,735.5 1096.3,740.0 1096.8,744.7 1098.5,749.0 1096.2,752.7 1093.0,755.5 1089.5,758.0 1087.2,762.8 1083.0,765.2 1078.3,767.0 1074.1,768.7 1069.2,769.4 1066.1,773.1 1062.5,776.0 1059.2,773.3 1058.0,768.5 1053.5,767.0 1049.9,764.6 1048.9,759.6 1044.5,758.0 1039.3,756.8 1037.1,751.9 1033.3,749.0 1033.0,744.3 1028.3,742.6 1026.5,738.9 1024.3,735.5 1020.2,733.0 1015.5,731.1 1013.0,726.5 1010.3,723.4 1007.2,720.5 1006.1,716.1 1001.0,715.0" fill="#1a1c68" stroke="#5b55a8" stroke-width="1.30" stroke-linejoin="round" fill-opacity="0.9"/>
<polygon points="1175.0,701.8 1176.6,696.4 1183.3,695.3 1185.0,690.0 1187.0,685.3 1193.2,684.9 1195.0,680.0 1198.6,676.2 1201.8,672.1 1205.0,668.0 1207.7,664.0 1212.2,662.7 1216.0,660.3 1220.8,658.6 1223.9,653.5 1229.5,653.5 1233.1,655.9 1237.2,656.3 1240.9,658.6 1245.3,658.0 1248.8,661.3 1252.0,664.8 1253.5,669.3 1257.0,671.8 1261.0,673.8 1264.0,677.9 1265.5,682.8 1268.1,687.3 1273.7,688.0 1276.8,691.8 1280.5,696.0 1283.5,700.8 1281.3,706.2 1276.8,709.8 1274.0,713.7 1272.7,718.8 1267.8,721.0 1264.6,724.6 1263.1,729.5 1258.8,732.3 1255.3,736.5 1249.3,735.8 1245.3,739.0 1240.7,741.0 1236.2,743.4 1231.8,745.8 1229.5,750.3 1225.0,752.5 1223.3,748.2 1217.2,748.3 1216.0,743.5 1211.1,742.3 1208.4,738.2 1205.0,735.0 1200.7,732.2 1198.0,728.0 1195.0,724.0 1193.3,718.6 1190.1,714.5 1185.0,712.0 1180.6,709.6 1177.3,706.3" fill="#1a1c68" stroke="#5b55a8" stroke-width="1.30" stroke-linejoin="round" fill-opacity="0.9"/>
<polygon points="1346.5,700.8 1348.0,696.4 1350.1,692.4 1351.4,687.9 1355.5,685.0 1359.5,683.0 1360.9,677.8 1365.3,676.2 1369.0,673.8 1369.5,668.8 1375.0,666.8 1375.0,661.5 1378.0,658.0 1379.8,652.3 1384.8,649.0 1388.6,653.3 1393.8,655.8 1398.3,659.4 1400.5,664.8 1405.7,667.2 1409.5,671.5 1413.7,668.7 1418.5,667.0 1426.0,669.3 1427.2,673.3 1426.1,677.4 1427.8,681.4 1427.2,685.5 1425.5,689.5 1426.3,693.6 1428.1,697.6 1425.4,701.7 1425.2,705.7 1425.3,709.8 1426.4,713.8 1425.8,717.9 1426.9,721.9 1423.9,726.0 1426.0,730.0 1422.6,733.5 1418.1,735.9 1414.7,739.4 1411.8,743.5 1408.2,746.8 1405.4,750.9 1400.5,752.5 1397.5,755.2 1393.8,757.0 1391.7,752.6 1387.3,750.0 1384.8,745.8 1379.9,745.2 1376.8,741.6 1373.5,738.1 1369.0,736.8 1369.7,732.2 1367.3,728.8 1364.5,725.5 1364.4,721.1 1366.3,717.5 1369.0,714.3 1365.0,710.2 1360.0,707.5 1355.0,706.3 1350.6,703.8" fill="#1a1c68" stroke="#5b55a8" stroke-width="1.30" stroke-linejoin="round" fill-opacity="0.9"/>
<polygon points="791.5,709.5 796.4,708.0 800.6,705.4 802.8,700.5 807.2,701.2 811.0,699.6 814.6,697.3 818.5,696.0 822.6,693.5 827.3,693.1 831.7,691.5 836.5,691.5 841.0,693.8 843.8,697.0 848.1,698.7 850.0,702.8 852.3,709.5 848.9,712.5 849.9,717.3 847.8,720.8 848.5,725.3 847.0,730.2 850.0,734.3 849.8,739.7 850.5,744.9 852.3,750.0 854.7,754.5 850.1,759.0 852.5,763.5 852.3,768.0 851.0,772.7 846.5,774.2 843.3,777.0 841.3,772.6 836.5,772.5 834.8,777.3 832.0,781.5 828.4,784.6 825.3,788.3 821.6,785.2 818.5,781.5 811.8,779.3 807.0,779.5 805.0,783.8 803.1,779.2 799.1,776.2 796.0,772.5 795.8,766.6 798.3,761.3 794.7,758.1 792.8,754.0 793.4,748.4 789.3,745.5 786.9,742.1 787.6,737.5 784.8,734.3 789.8,731.0 791.5,725.3 791.2,719.5 789.3,714.0" fill="#1a1c68" stroke="#5b55a8" stroke-width="1.30" stroke-linejoin="round" fill-opacity="0.9"/>
<polygon points="956.8,807.5 959.5,804.1 963.6,801.8 966.9,798.8 968.0,794.0 971.5,791.2 974.5,787.9 977.8,785.0 979.3,780.5 981.5,775.6 986.3,773.9 990.5,771.5 995.8,769.3 999.5,764.8 1001.2,768.5 1002.5,772.3 1004.0,776.0 1008.6,778.9 1010.4,784.7 1015.3,787.3 1018.3,790.7 1023.9,789.8 1026.5,794.0 1031.7,796.5 1035.5,800.8 1038.1,803.9 1040.0,807.5 1038.0,811.0 1034.3,813.4 1032.0,816.8 1031.0,821.0 1026.4,824.5 1024.3,830.0 1025.4,834.8 1024.3,839.3 1022.0,843.5 1021.4,848.3 1017.6,852.0 1017.5,857.0 1013.0,857.5 1010.8,852.0 1006.3,852.5 1001.2,851.1 997.8,847.7 995.0,843.5 991.0,839.5 988.3,834.5 986.0,829.6 980.1,829.4 977.0,825.5 972.3,823.7 968.4,820.9 965.8,816.5 963.4,812.9 958.1,812.2" fill="#1a1c68" stroke="#5b55a8" stroke-width="1.30" stroke-linejoin="round" fill-opacity="0.9"/>
<polygon points="1426.0,475.0 1425.9,470.4 1431.4,468.2 1431.7,463.8 1432.3,459.5 1435.4,456.3 1436.0,452.0 1441.1,453.0 1444.9,447.8 1450.0,449.0 1453.7,452.1 1459.3,449.9 1462.0,455.5 1467.0,455.0 1470.6,457.3 1473.5,461.1 1477.2,463.3 1482.5,462.4 1486.0,465.0 1488.1,470.0 1487.5,475.0 1486.0,480.0 1482.1,481.8 1478.4,483.8 1474.4,485.4 1473.7,491.4 1470.7,494.3 1466.1,495.1 1462.5,497.3 1458.4,498.7 1456.2,502.8 1453.8,506.5 1448.8,506.8 1444.5,508.0 1441.7,511.2 1438.7,514.2 1437.0,518.8 1432.7,520.0 1430.5,524.1 1426.0,525.0 1426.3,520.8 1427.8,516.7 1427.7,512.5 1425.4,508.3 1424.9,504.2 1428.4,500.0 1427.1,495.8 1426.2,491.7 1426.9,487.5 1423.6,483.3 1427.3,479.2" fill="#1a1c68" stroke="#5b55a8" stroke-width="1.30" stroke-linejoin="round" fill-opacity="0.9"/>
<circle cx="801.9" cy="315.5" r="2.3" fill="#d83c50" />
<circle cx="801.9" cy="315.5" r="1.1" fill="#f27a96" />
<circle cx="966.0" cy="415.4" r="2.3" fill="#d83c50" />
<circle cx="966.0" cy="415.4" r="1.1" fill="#f27a96" />
<circle cx="985.4" cy="414.3" r="2.3" fill="#d83c50" />
<circle cx="985.4" cy="414.3" r="1.1" fill="#f27a96" />
<circle cx="1009.0" cy="418.8" r="2.3" fill="#d83c50" />
<circle cx="1009.0" cy="418.8" r="1.1" fill="#f27a96" />
<circle cx="1022.5" cy="412.0" r="2.3" fill="#d83c50" />
<circle cx="1022.5" cy="412.0" r="1.1" fill="#f27a96" />
<circle cx="856.0" cy="427.8" r="2.3" fill="#d83c50" />
<circle cx="856.0" cy="427.8" r="1.1" fill="#f27a96" />
<circle cx="1081.0" cy="461.5" r="2.3" fill="#d83c50" />
<circle cx="1081.0" cy="461.5" r="1.1" fill="#f27a96" />
<circle cx="824.5" cy="466.0" r="2.3" fill="#d83c50" />
<circle cx="824.5" cy="466.0" r="1.1" fill="#f27a96" />
<circle cx="835.8" cy="463.8" r="2.3" fill="#d83c50" />
<circle cx="835.8" cy="463.8" r="1.1" fill="#f27a96" />
<circle cx="853.8" cy="459.3" r="2.3" fill="#d83c50" />
<circle cx="853.8" cy="459.3" r="1.1" fill="#f27a96" />
<circle cx="858.3" cy="463.8" r="2.3" fill="#d83c50" />
<circle cx="858.3" cy="463.8" r="1.1" fill="#f27a96" />
<circle cx="823.0" cy="463.9" r="2.3" fill="#d83c50" />
<circle cx="823.0" cy="463.9" r="1.1" fill="#f27a96" />
<circle cx="836.5" cy="463.9" r="2.3" fill="#d83c50" />
<circle cx="836.5" cy="463.9" r="1.1" fill="#f27a96" />
<circle cx="854.5" cy="460.5" r="2.3" fill="#d83c50" />
<circle cx="854.5" cy="460.5" r="1.1" fill="#f27a96" />
<circle cx="859.0" cy="462.8" r="2.3" fill="#d83c50" />
<circle cx="859.0" cy="462.8" r="1.1" fill="#f27a96" />
<circle cx="808.4" cy="496.5" r="2.3" fill="#d83c50" />
<circle cx="808.4" cy="496.5" r="1.1" fill="#f27a96" />
<circle cx="808.4" cy="503.3" r="2.3" fill="#d83c50" />
<circle cx="808.4" cy="503.3" r="1.1" fill="#f27a96" />
<circle cx="814.0" cy="529.1" r="2.3" fill="#d83c50" />
<circle cx="814.0" cy="529.1" r="1.1" fill="#f27a96" />
<circle cx="836.5" cy="539.3" r="2.3" fill="#d83c50" />
<circle cx="836.5" cy="539.3" r="1.1" fill="#f27a96" />
<circle cx="872.5" cy="541.5" r="2.3" fill="#d83c50" />
<circle cx="872.5" cy="541.5" r="1.1" fill="#f27a96" />
<circle cx="877.0" cy="547.1" r="2.3" fill="#d83c50" />
<circle cx="877.0" cy="547.1" r="1.1" fill="#f27a96" />
<circle cx="883.8" cy="561.8" r="2.3" fill="#d83c50" />
<circle cx="883.8" cy="561.8" r="1.1" fill="#f27a96" />
<circle cx="863.5" cy="575.3" r="2.3" fill="#d83c50" />
<circle cx="863.5" cy="575.3" r="1.1" fill="#f27a96" />
<circle cx="886.0" cy="579.8" r="2.3" fill="#d83c50" />
<circle cx="886.0" cy="579.8" r="1.1" fill="#f27a96" />
<circle cx="881.5" cy="587.6" r="2.3" fill="#d83c50" />
<circle cx="881.5" cy="587.6" r="1.1" fill="#f27a96" />
<circle cx="850.0" cy="587.6" r="2.3" fill="#d83c50" />
<circle cx="850.0" cy="587.6" r="1.1" fill="#f27a96" />
<circle cx="854.5" cy="595.5" r="2.3" fill="#d83c50" />
<circle cx="854.5" cy="595.5" r="1.1" fill="#f27a96" />
<circle cx="870.3" cy="594.4" r="2.3" fill="#d83c50" />
<circle cx="870.3" cy="594.4" r="1.1" fill="#f27a96" />
<circle cx="859.0" cy="602.3" r="2.3" fill="#d83c50" />
<circle cx="859.0" cy="602.3" r="1.1" fill="#f27a96" />
<circle cx="866.9" cy="606.8" r="2.3" fill="#d83c50" />
<circle cx="866.9" cy="606.8" r="1.1" fill="#f27a96" />
<circle cx="861.3" cy="619.1" r="2.3" fill="#d83c50" />
<circle cx="861.3" cy="619.1" r="1.1" fill="#f27a96" />
<circle cx="792.6" cy="595.5" r="2.3" fill="#d83c50" />
<circle cx="792.6" cy="595.5" r="1.1" fill="#f27a96" />
<circle cx="864.6" cy="668.6" r="2.3" fill="#d83c50" />
<circle cx="864.6" cy="668.6" r="1.1" fill="#f27a96" />
<circle cx="884.9" cy="678.8" r="2.3" fill="#d83c50" />
<circle cx="884.9" cy="678.8" r="1.1" fill="#f27a96" />
<circle cx="859.0" cy="685.5" r="2.3" fill="#d83c50" />
<circle cx="859.0" cy="685.5" r="1.1" fill="#f27a96" />
<circle cx="901.8" cy="661.9" r="2.3" fill="#d83c50" />
<circle cx="901.8" cy="661.9" r="1.1" fill="#f27a96" />
<circle cx="904.0" cy="668.6" r="2.3" fill="#d83c50" />
<circle cx="904.0" cy="668.6" r="1.1" fill="#f27a96" />
<circle cx="908.5" cy="681.0" r="2.3" fill="#d83c50" />
<circle cx="908.5" cy="681.0" r="1.1" fill="#f27a96" />
<circle cx="865.8" cy="669.0" r="2.3" fill="#d83c50" />
<circle cx="865.8" cy="669.0" r="1.1" fill="#f27a96" />
<circle cx="886.0" cy="678.0" r="2.3" fill="#d83c50" />
<circle cx="886.0" cy="678.0" r="1.1" fill="#f27a96" />
<circle cx="859.0" cy="684.8" r="2.3" fill="#d83c50" />
<circle cx="859.0" cy="684.8" r="1.1" fill="#f27a96" />
<circle cx="852.3" cy="692.6" r="2.3" fill="#d83c50" />
<circle cx="852.3" cy="692.6" r="1.1" fill="#f27a96" />
<circle cx="873.6" cy="700.5" r="2.3" fill="#d83c50" />
<circle cx="873.6" cy="700.5" r="1.1" fill="#f27a96" />
<circle cx="913.0" cy="707.3" r="2.3" fill="#d83c50" />
<circle cx="913.0" cy="707.3" r="1.1" fill="#f27a96" />
<circle cx="873.6" cy="746.6" r="2.3" fill="#d83c50" />
<circle cx="873.6" cy="746.6" r="1.1" fill="#f27a96" />
<circle cx="878.1" cy="777.0" r="2.3" fill="#d83c50" />
<circle cx="878.1" cy="777.0" r="1.1" fill="#f27a96" />
<circle cx="887.1" cy="790.5" r="2.3" fill="#d83c50" />
<circle cx="887.1" cy="790.5" r="1.1" fill="#f27a96" />
<circle cx="891.6" cy="813.0" r="2.3" fill="#d83c50" />
<circle cx="891.6" cy="813.0" r="1.1" fill="#f27a96" />
<circle cx="890.5" cy="833.3" r="2.3" fill="#d83c50" />
<circle cx="890.5" cy="833.3" r="1.1" fill="#f27a96" />
<circle cx="914.1" cy="850.1" r="2.3" fill="#d83c50" />
<circle cx="914.1" cy="850.1" r="1.1" fill="#f27a96" />
<circle cx="917.5" cy="747.8" r="2.3" fill="#d83c50" />
<circle cx="917.5" cy="747.8" r="1.1" fill="#f27a96" />
<circle cx="917.5" cy="760.1" r="2.3" fill="#d83c50" />
<circle cx="917.5" cy="760.1" r="1.1" fill="#f27a96" />
<circle cx="919.8" cy="778.1" r="2.3" fill="#d83c50" />
<circle cx="919.8" cy="778.1" r="1.1" fill="#f27a96" />
<circle cx="922.0" cy="813.0" r="2.3" fill="#d83c50" />
<circle cx="922.0" cy="813.0" r="1.1" fill="#f27a96" />
<circle cx="923.1" cy="833.3" r="2.3" fill="#d83c50" />
<circle cx="923.1" cy="833.3" r="1.1" fill="#f27a96" />
<circle cx="940.0" cy="801.8" r="2.3" fill="#d83c50" />
<circle cx="940.0" cy="801.8" r="1.1" fill="#f27a96" />
<circle cx="936.6" cy="746.6" r="2.3" fill="#d83c50" />
<circle cx="936.6" cy="746.6" r="1.1" fill="#f27a96" />
<circle cx="945.6" cy="747.8" r="2.3" fill="#d83c50" />
<circle cx="945.6" cy="747.8" r="1.1" fill="#f27a96" />
<circle cx="953.5" cy="746.6" r="2.3" fill="#d83c50" />
<circle cx="953.5" cy="746.6" r="1.1" fill="#f27a96" />
<circle cx="962.5" cy="746.6" r="2.3" fill="#d83c50" />
<circle cx="962.5" cy="746.6" r="1.1" fill="#f27a96" />
<circle cx="969.3" cy="746.6" r="2.3" fill="#d83c50" />
<circle cx="969.3" cy="746.6" r="1.1" fill="#f27a96" />
<circle cx="980.5" cy="746.6" r="2.3" fill="#d83c50" />
<circle cx="980.5" cy="746.6" r="1.1" fill="#f27a96" />
<circle cx="989.5" cy="746.6" r="2.3" fill="#d83c50" />
<circle cx="989.5" cy="746.6" r="1.1" fill="#f27a96" />
<circle cx="969.3" cy="682.5" r="2.3" fill="#d83c50" />
<circle cx="969.3" cy="682.5" r="1.1" fill="#f27a96" />
<circle cx="969.3" cy="698.3" r="2.3" fill="#d83c50" />
<circle cx="969.3" cy="698.3" r="1.1" fill="#f27a96" />
<circle cx="969.3" cy="711.8" r="2.3" fill="#d83c50" />
<circle cx="969.3" cy="711.8" r="1.1" fill="#f27a96" />
<circle cx="969.3" cy="718.5" r="2.3" fill="#d83c50" />
<circle cx="969.3" cy="718.5" r="1.1" fill="#f27a96" />
<circle cx="969.3" cy="727.5" r="2.3" fill="#d83c50" />
<circle cx="969.3" cy="727.5" r="1.1" fill="#f27a96" />
<circle cx="969.3" cy="734.3" r="2.3" fill="#d83c50" />
<circle cx="969.3" cy="734.3" r="1.1" fill="#f27a96" />
<circle cx="969.3" cy="738.8" r="2.3" fill="#d83c50" />
<circle cx="969.3" cy="738.8" r="1.1" fill="#f27a96" />
<circle cx="969.3" cy="759.0" r="2.3" fill="#d83c50" />
<circle cx="969.3" cy="759.0" r="1.1" fill="#f27a96" />
<circle cx="969.3" cy="765.8" r="2.3" fill="#d83c50" />
<circle cx="969.3" cy="765.8" r="1.1" fill="#f27a96" />
<circle cx="969.3" cy="777.0" r="2.3" fill="#d83c50" />
<circle cx="969.3" cy="777.0" r="1.1" fill="#f27a96" />
<circle cx="969.3" cy="833.3" r="2.3" fill="#d83c50" />
<circle cx="969.3" cy="833.3" r="1.1" fill="#f27a96" />
<circle cx="987.3" cy="666.8" r="2.3" fill="#d83c50" />
<circle cx="987.3" cy="666.8" r="1.1" fill="#f27a96" />
<circle cx="987.3" cy="673.5" r="2.3" fill="#d83c50" />
<circle cx="987.3" cy="673.5" r="1.1" fill="#f27a96" />
<circle cx="987.3" cy="682.5" r="2.3" fill="#d83c50" />
<circle cx="987.3" cy="682.5" r="1.1" fill="#f27a96" />
<circle cx="987.3" cy="698.3" r="2.3" fill="#d83c50" />
<circle cx="987.3" cy="698.3" r="1.1" fill="#f27a96" />
<circle cx="987.3" cy="705.0" r="2.3" fill="#d83c50" />
<circle cx="987.3" cy="705.0" r="1.1" fill="#f27a96" />
<circle cx="987.3" cy="711.8" r="2.3" fill="#d83c50" />
<circle cx="987.3" cy="711.8" r="1.1" fill="#f27a96" />
<circle cx="987.3" cy="718.5" r="2.3" fill="#d83c50" />
<circle cx="987.3" cy="718.5" r="1.1" fill="#f27a96" />
<circle cx="987.3" cy="727.5" r="2.3" fill="#d83c50" />
<circle cx="987.3" cy="727.5" r="1.1" fill="#f27a96" />
<circle cx="987.3" cy="754.5" r="2.3" fill="#d83c50" />
<circle cx="987.3" cy="754.5" r="1.1" fill="#f27a96" />
<circle cx="987.3" cy="763.5" r="2.3" fill="#d83c50" />
<circle cx="987.3" cy="763.5" r="1.1" fill="#f27a96" />
<circle cx="959.0" cy="672.5" r="2.3" fill="#d83c50" />
<circle cx="959.0" cy="672.5" r="1.1" fill="#f27a96" />
<circle cx="977.0" cy="672.5" r="2.3" fill="#d83c50" />
<circle cx="977.0" cy="672.5" r="1.1" fill="#f27a96" />
<circle cx="986.0" cy="672.5" r="2.3" fill="#d83c50" />
<circle cx="986.0" cy="672.5" r="1.1" fill="#f27a96" />
<circle cx="995.0" cy="672.5" r="2.3" fill="#d83c50" />
<circle cx="995.0" cy="672.5" r="1.1" fill="#f27a96" />
<circle cx="1004.0" cy="672.5" r="2.3" fill="#d83c50" />
<circle cx="1004.0" cy="672.5" r="1.1" fill="#f27a96" />
<circle cx="1013.0" cy="672.5" r="2.3" fill="#d83c50" />
<circle cx="1013.0" cy="672.5" r="1.1" fill="#f27a96" />
<circle cx="1022.0" cy="672.5" r="2.3" fill="#d83c50" />
<circle cx="1022.0" cy="672.5" r="1.1" fill="#f27a96" />
<circle cx="1035.5" cy="672.5" r="2.3" fill="#d83c50" />
<circle cx="1035.5" cy="672.5" r="1.1" fill="#f27a96" />
<circle cx="1076.0" cy="672.5" r="2.3" fill="#d83c50" />
<circle cx="1076.0" cy="672.5" r="1.1" fill="#f27a96" />
<circle cx="1085.0" cy="672.5" r="2.3" fill="#d83c50" />
<circle cx="1085.0" cy="672.5" r="1.1" fill="#f27a96" />
<circle cx="1094.0" cy="672.5" r="2.3" fill="#d83c50" />
<circle cx="1094.0" cy="672.5" r="1.1" fill="#f27a96" />
<circle cx="1103.0" cy="672.5" r="2.3" fill="#d83c50" />
<circle cx="1103.0" cy="672.5" r="1.1" fill="#f27a96" />
<circle cx="1116.5" cy="672.5" r="2.3" fill="#d83c50" />
<circle cx="1116.5" cy="672.5" r="1.1" fill="#f27a96" />
<circle cx="1125.5" cy="672.5" r="2.3" fill="#d83c50" />
<circle cx="1125.5" cy="672.5" r="1.1" fill="#f27a96" />
<circle cx="1130.0" cy="672.5" r="2.3" fill="#d83c50" />
<circle cx="1130.0" cy="672.5" r="1.1" fill="#f27a96" />
<circle cx="1161.5" cy="672.5" r="2.3" fill="#d83c50" />
<circle cx="1161.5" cy="672.5" r="1.1" fill="#f27a96" />
<circle cx="1179.5" cy="672.5" r="2.3" fill="#d83c50" />
<circle cx="1179.5" cy="672.5" r="1.1" fill="#f27a96" />
<circle cx="1188.5" cy="672.5" r="2.3" fill="#d83c50" />
<circle cx="1188.5" cy="672.5" r="1.1" fill="#f27a96" />
<circle cx="1195.3" cy="672.5" r="2.3" fill="#d83c50" />
<circle cx="1195.3" cy="672.5" r="1.1" fill="#f27a96" />
<circle cx="1094.0" cy="656.8" r="2.3" fill="#d83c50" />
<circle cx="1094.0" cy="656.8" r="1.1" fill="#f27a96" />
<circle cx="1105.3" cy="656.8" r="2.3" fill="#d83c50" />
<circle cx="1105.3" cy="656.8" r="1.1" fill="#f27a96" />
<circle cx="1114.3" cy="656.8" r="2.3" fill="#d83c50" />
<circle cx="1114.3" cy="656.8" r="1.1" fill="#f27a96" />
<circle cx="956.8" cy="682.6" r="2.3" fill="#d83c50" />
<circle cx="956.8" cy="682.6" r="1.1" fill="#f27a96" />
<circle cx="968.0" cy="682.6" r="2.3" fill="#d83c50" />
<circle cx="968.0" cy="682.6" r="1.1" fill="#f27a96" />
<circle cx="977.0" cy="682.6" r="2.3" fill="#d83c50" />
<circle cx="977.0" cy="682.6" r="1.1" fill="#f27a96" />
<circle cx="986.0" cy="682.6" r="2.3" fill="#d83c50" />
<circle cx="986.0" cy="682.6" r="1.1" fill="#f27a96" />
<circle cx="995.0" cy="682.6" r="2.3" fill="#d83c50" />
<circle cx="995.0" cy="682.6" r="1.1" fill="#f27a96" />
<circle cx="1024.3" cy="682.6" r="2.3" fill="#d83c50" />
<circle cx="1024.3" cy="682.6" r="1.1" fill="#f27a96" />
<circle cx="1051.3" cy="682.6" r="2.3" fill="#d83c50" />
<circle cx="1051.3" cy="682.6" r="1.1" fill="#f27a96" />
<circle cx="1060.3" cy="682.6" r="2.3" fill="#d83c50" />
<circle cx="1060.3" cy="682.6" r="1.1" fill="#f27a96" />
<circle cx="1080.5" cy="682.6" r="2.3" fill="#d83c50" />
<circle cx="1080.5" cy="682.6" r="1.1" fill="#f27a96" />
<circle cx="1105.3" cy="682.6" r="2.3" fill="#d83c50" />
<circle cx="1105.3" cy="682.6" r="1.1" fill="#f27a96" />
<circle cx="1118.8" cy="682.6" r="2.3" fill="#d83c50" />
<circle cx="1118.8" cy="682.6" r="1.1" fill="#f27a96" />
<circle cx="968.0" cy="697.3" r="2.3" fill="#d83c50" />
<circle cx="968.0" cy="697.3" r="1.1" fill="#f27a96" />
<circle cx="986.0" cy="697.3" r="2.3" fill="#d83c50" />
<circle cx="986.0" cy="697.3" r="1.1" fill="#f27a96" />
<circle cx="1042.3" cy="697.3" r="2.3" fill="#d83c50" />
<circle cx="1042.3" cy="697.3" r="1.1" fill="#f27a96" />
<circle cx="1051.3" cy="697.3" r="2.3" fill="#d83c50" />
<circle cx="1051.3" cy="697.3" r="1.1" fill="#f27a96" />
<circle cx="1062.5" cy="697.3" r="2.3" fill="#d83c50" />
<circle cx="1062.5" cy="697.3" r="1.1" fill="#f27a96" />
<circle cx="1071.5" cy="697.3" r="2.3" fill="#d83c50" />
<circle cx="1071.5" cy="697.3" r="1.1" fill="#f27a96" />
<circle cx="1080.5" cy="697.3" r="2.3" fill="#d83c50" />
<circle cx="1080.5" cy="697.3" r="1.1" fill="#f27a96" />
<circle cx="1089.5" cy="697.3" r="2.3" fill="#d83c50" />
<circle cx="1089.5" cy="697.3" r="1.1" fill="#f27a96" />
<circle cx="1127.8" cy="697.3" r="2.3" fill="#d83c50" />
<circle cx="1127.8" cy="697.3" r="1.1" fill="#f27a96" />
<circle cx="1148.0" cy="697.3" r="2.3" fill="#d83c50" />
<circle cx="1148.0" cy="697.3" r="1.1" fill="#f27a96" />
<circle cx="1136.8" cy="702.9" r="2.3" fill="#d83c50" />
<circle cx="1136.8" cy="702.9" r="1.1" fill="#f27a96" />
<circle cx="1148.0" cy="702.9" r="2.3" fill="#d83c50" />
<circle cx="1148.0" cy="702.9" r="1.1" fill="#f27a96" />
<circle cx="965.8" cy="711.9" r="2.3" fill="#d83c50" />
<circle cx="965.8" cy="711.9" r="1.1" fill="#f27a96" />
<circle cx="977.0" cy="711.9" r="2.3" fill="#d83c50" />
<circle cx="977.0" cy="711.9" r="1.1" fill="#f27a96" />
<circle cx="986.0" cy="711.9" r="2.3" fill="#d83c50" />
<circle cx="986.0" cy="711.9" r="1.1" fill="#f27a96" />
<circle cx="995.0" cy="711.9" r="2.3" fill="#d83c50" />
<circle cx="995.0" cy="711.9" r="1.1" fill="#f27a96" />
<circle cx="1042.3" cy="711.9" r="2.3" fill="#d83c50" />
<circle cx="1042.3" cy="711.9" r="1.1" fill="#f27a96" />
<circle cx="1085.0" cy="711.9" r="2.3" fill="#d83c50" />
<circle cx="1085.0" cy="711.9" r="1.1" fill="#f27a96" />
<circle cx="952.3" cy="728.8" r="2.3" fill="#d83c50" />
<circle cx="952.3" cy="728.8" r="1.1" fill="#f27a96" />
<circle cx="963.5" cy="728.8" r="2.3" fill="#d83c50" />
<circle cx="963.5" cy="728.8" r="1.1" fill="#f27a96" />
<circle cx="977.0" cy="728.8" r="2.3" fill="#d83c50" />
<circle cx="977.0" cy="728.8" r="1.1" fill="#f27a96" />
<circle cx="986.0" cy="728.8" r="2.3" fill="#d83c50" />
<circle cx="986.0" cy="728.8" r="1.1" fill="#f27a96" />
<circle cx="995.0" cy="728.8" r="2.3" fill="#d83c50" />
<circle cx="995.0" cy="728.8" r="1.1" fill="#f27a96" />
<circle cx="1082.8" cy="732.1" r="2.3" fill="#d83c50" />
<circle cx="1082.8" cy="732.1" r="1.1" fill="#f27a96" />
<circle cx="1089.5" cy="732.1" r="2.3" fill="#d83c50" />
<circle cx="1089.5" cy="732.1" r="1.1" fill="#f27a96" />
<circle cx="1096.3" cy="732.1" r="2.3" fill="#d83c50" />
<circle cx="1096.3" cy="732.1" r="1.1" fill="#f27a96" />
<circle cx="1107.5" cy="732.1" r="2.3" fill="#d83c50" />
<circle cx="1107.5" cy="732.1" r="1.1" fill="#f27a96" />
<circle cx="1145.8" cy="732.1" r="2.3" fill="#d83c50" />
<circle cx="1145.8" cy="732.1" r="1.1" fill="#f27a96" />
<circle cx="1166.0" cy="732.1" r="2.3" fill="#d83c50" />
<circle cx="1166.0" cy="732.1" r="1.1" fill="#f27a96" />
<circle cx="1197.5" cy="732.1" r="2.3" fill="#d83c50" />
<circle cx="1197.5" cy="732.1" r="1.1" fill="#f27a96" />
<circle cx="952.3" cy="746.8" r="2.3" fill="#d83c50" />
<circle cx="952.3" cy="746.8" r="1.1" fill="#f27a96" />
<circle cx="961.3" cy="746.8" r="2.3" fill="#d83c50" />
<circle cx="961.3" cy="746.8" r="1.1" fill="#f27a96" />
<circle cx="970.3" cy="746.8" r="2.3" fill="#d83c50" />
<circle cx="970.3" cy="746.8" r="1.1" fill="#f27a96" />
<circle cx="979.3" cy="746.8" r="2.3" fill="#d83c50" />
<circle cx="979.3" cy="746.8" r="1.1" fill="#f27a96" />
<circle cx="988.3" cy="746.8" r="2.3" fill="#d83c50" />
<circle cx="988.3" cy="746.8" r="1.1" fill="#f27a96" />
<circle cx="995.0" cy="746.8" r="2.3" fill="#d83c50" />
<circle cx="995.0" cy="746.8" r="1.1" fill="#f27a96" />
<circle cx="1006.3" cy="746.8" r="2.3" fill="#d83c50" />
<circle cx="1006.3" cy="746.8" r="1.1" fill="#f27a96" />
<circle cx="1015.3" cy="746.8" r="2.3" fill="#d83c50" />
<circle cx="1015.3" cy="746.8" r="1.1" fill="#f27a96" />
<circle cx="1024.3" cy="746.8" r="2.3" fill="#d83c50" />
<circle cx="1024.3" cy="746.8" r="1.1" fill="#f27a96" />
<circle cx="1033.3" cy="746.8" r="2.3" fill="#d83c50" />
<circle cx="1033.3" cy="746.8" r="1.1" fill="#f27a96" />
<circle cx="1042.3" cy="746.8" r="2.3" fill="#d83c50" />
<circle cx="1042.3" cy="746.8" r="1.1" fill="#f27a96" />
<circle cx="1051.3" cy="746.8" r="2.3" fill="#d83c50" />
<circle cx="1051.3" cy="746.8" r="1.1" fill="#f27a96" />
<circle cx="1062.5" cy="746.8" r="2.3" fill="#d83c50" />
<circle cx="1062.5" cy="746.8" r="1.1" fill="#f27a96" />
<circle cx="1071.5" cy="746.8" r="2.3" fill="#d83c50" />
<circle cx="1071.5" cy="746.8" r="1.1" fill="#f27a96" />
<circle cx="1080.5" cy="746.8" r="2.3" fill="#d83c50" />
<circle cx="1080.5" cy="746.8" r="1.1" fill="#f27a96" />
<circle cx="1089.5" cy="746.8" r="2.3" fill="#d83c50" />
<circle cx="1089.5" cy="746.8" r="1.1" fill="#f27a96" />
<circle cx="1105.3" cy="746.8" r="2.3" fill="#d83c50" />
<circle cx="1105.3" cy="746.8" r="1.1" fill="#f27a96" />
<circle cx="1143.5" cy="746.8" r="2.3" fill="#d83c50" />
<circle cx="1143.5" cy="746.8" r="1.1" fill="#f27a96" />
<circle cx="970.3" cy="753.5" r="2.3" fill="#d83c50" />
<circle cx="970.3" cy="753.5" r="1.1" fill="#f27a96" />
<circle cx="988.3" cy="753.5" r="2.3" fill="#d83c50" />
<circle cx="988.3" cy="753.5" r="1.1" fill="#f27a96" />
<circle cx="997.3" cy="753.5" r="2.3" fill="#d83c50" />
<circle cx="997.3" cy="753.5" r="1.1" fill="#f27a96" />
<circle cx="1105.3" cy="753.5" r="2.3" fill="#d83c50" />
<circle cx="1105.3" cy="753.5" r="1.1" fill="#f27a96" />
<circle cx="969.1" cy="689.4" r="2.3" fill="#d83c50" />
<circle cx="969.1" cy="689.4" r="1.1" fill="#f27a96" />
<circle cx="969.1" cy="698.4" r="2.3" fill="#d83c50" />
<circle cx="969.1" cy="698.4" r="1.1" fill="#f27a96" />
<circle cx="969.1" cy="710.8" r="2.3" fill="#d83c50" />
<circle cx="969.1" cy="710.8" r="1.1" fill="#f27a96" />
<circle cx="969.1" cy="717.5" r="2.3" fill="#d83c50" />
<circle cx="969.1" cy="717.5" r="1.1" fill="#f27a96" />
<circle cx="969.1" cy="728.8" r="2.3" fill="#d83c50" />
<circle cx="969.1" cy="728.8" r="1.1" fill="#f27a96" />
<circle cx="969.1" cy="740.0" r="2.3" fill="#d83c50" />
<circle cx="969.1" cy="740.0" r="1.1" fill="#f27a96" />
<circle cx="969.1" cy="746.8" r="2.3" fill="#d83c50" />
<circle cx="969.1" cy="746.8" r="1.1" fill="#f27a96" />
<circle cx="969.1" cy="755.8" r="2.3" fill="#d83c50" />
<circle cx="969.1" cy="755.8" r="1.1" fill="#f27a96" />
<circle cx="969.1" cy="767.0" r="2.3" fill="#d83c50" />
<circle cx="969.1" cy="767.0" r="1.1" fill="#f27a96" />
<circle cx="969.1" cy="778.3" r="2.3" fill="#d83c50" />
<circle cx="969.1" cy="778.3" r="1.1" fill="#f27a96" />
<circle cx="969.1" cy="789.5" r="2.3" fill="#d83c50" />
<circle cx="969.1" cy="789.5" r="1.1" fill="#f27a96" />
<circle cx="969.1" cy="832.3" r="2.3" fill="#d83c50" />
<circle cx="969.1" cy="832.3" r="1.1" fill="#f27a96" />
<circle cx="1024.3" cy="677.0" r="2.3" fill="#d83c50" />
<circle cx="1024.3" cy="677.0" r="1.1" fill="#f27a96" />
<circle cx="1024.3" cy="683.8" r="2.3" fill="#d83c50" />
<circle cx="1024.3" cy="683.8" r="1.1" fill="#f27a96" />
<circle cx="1024.3" cy="762.5" r="2.3" fill="#d83c50" />
<circle cx="1024.3" cy="762.5" r="1.1" fill="#f27a96" />
<circle cx="1024.3" cy="771.5" r="2.3" fill="#d83c50" />
<circle cx="1024.3" cy="771.5" r="1.1" fill="#f27a96" />
<circle cx="1105.3" cy="682.6" r="2.3" fill="#d83c50" />
<circle cx="1105.3" cy="682.6" r="1.1" fill="#f27a96" />
<circle cx="1105.3" cy="690.5" r="2.3" fill="#d83c50" />
<circle cx="1105.3" cy="690.5" r="1.1" fill="#f27a96" />
<circle cx="1105.3" cy="697.3" r="2.3" fill="#d83c50" />
<circle cx="1105.3" cy="697.3" r="1.1" fill="#f27a96" />
<circle cx="1105.3" cy="744.5" r="2.3" fill="#d83c50" />
<circle cx="1105.3" cy="744.5" r="1.1" fill="#f27a96" />
<circle cx="1105.3" cy="751.3" r="2.3" fill="#d83c50" />
<circle cx="1105.3" cy="751.3" r="1.1" fill="#f27a96" />
<circle cx="1105.3" cy="776.0" r="2.3" fill="#d83c50" />
<circle cx="1105.3" cy="776.0" r="1.1" fill="#f27a96" />
<circle cx="1145.8" cy="695.0" r="2.3" fill="#d83c50" />
<circle cx="1145.8" cy="695.0" r="1.1" fill="#f27a96" />
<circle cx="1145.8" cy="704.0" r="2.3" fill="#d83c50" />
<circle cx="1145.8" cy="704.0" r="1.1" fill="#f27a96" />
<circle cx="1145.8" cy="731.0" r="2.3" fill="#d83c50" />
<circle cx="1145.8" cy="731.0" r="1.1" fill="#f27a96" />
<circle cx="1145.8" cy="746.8" r="2.3" fill="#d83c50" />
<circle cx="1145.8" cy="746.8" r="1.1" fill="#f27a96" />
<circle cx="1035.5" cy="794.0" r="2.3" fill="#d83c50" />
<circle cx="1035.5" cy="794.0" r="1.1" fill="#f27a96" />
<circle cx="1049.0" cy="807.5" r="2.3" fill="#d83c50" />
<circle cx="1049.0" cy="807.5" r="1.1" fill="#f27a96" />
<circle cx="1056.9" cy="828.9" r="2.3" fill="#d83c50" />
<circle cx="1056.9" cy="828.9" r="1.1" fill="#f27a96" />
<circle cx="1069.3" cy="845.8" r="2.3" fill="#d83c50" />
<circle cx="1069.3" cy="845.8" r="1.1" fill="#f27a96" />
<circle cx="1037.8" cy="868.3" r="2.3" fill="#d83c50" />
<circle cx="1037.8" cy="868.3" r="1.1" fill="#f27a96" />
<circle cx="969.1" cy="832.3" r="2.3" fill="#d83c50" />
<circle cx="969.1" cy="832.3" r="1.1" fill="#f27a96" />
<circle cx="1024.3" cy="836.8" r="2.3" fill="#d83c50" />
<circle cx="1024.3" cy="836.8" r="1.1" fill="#f27a96" />
<circle cx="1386.5" cy="478.4" r="2.3" fill="#d83c50" />
<circle cx="1386.5" cy="478.4" r="1.1" fill="#f27a96" />
<circle cx="1285.3" cy="518.9" r="2.3" fill="#d83c50" />
<circle cx="1285.3" cy="518.9" r="1.1" fill="#f27a96" />
<circle cx="1227.9" cy="583.0" r="2.3" fill="#d83c50" />
<circle cx="1227.9" cy="583.0" r="1.1" fill="#f27a96" />
<circle cx="1274.0" cy="580.8" r="2.3" fill="#d83c50" />
<circle cx="1274.0" cy="580.8" r="1.1" fill="#f27a96" />
<circle cx="1313.4" cy="571.8" r="2.3" fill="#d83c50" />
<circle cx="1313.4" cy="571.8" r="1.1" fill="#f27a96" />
<circle cx="1313.4" cy="579.6" r="2.3" fill="#d83c50" />
<circle cx="1313.4" cy="579.6" r="1.1" fill="#f27a96" />
<circle cx="1312.3" cy="593.1" r="2.3" fill="#d83c50" />
<circle cx="1312.3" cy="593.1" r="1.1" fill="#f27a96" />
<circle cx="1342.6" cy="579.6" r="2.3" fill="#d83c50" />
<circle cx="1342.6" cy="579.6" r="1.1" fill="#f27a96" />
<circle cx="1360.6" cy="557.1" r="2.3" fill="#d83c50" />
<circle cx="1360.6" cy="557.1" r="1.1" fill="#f27a96" />
<circle cx="1367.4" cy="572.9" r="2.3" fill="#d83c50" />
<circle cx="1367.4" cy="572.9" r="1.1" fill="#f27a96" />
<circle cx="1384.3" cy="572.9" r="2.3" fill="#d83c50" />
<circle cx="1384.3" cy="572.9" r="1.1" fill="#f27a96" />
<circle cx="1388.8" cy="578.5" r="2.3" fill="#d83c50" />
<circle cx="1388.8" cy="578.5" r="1.1" fill="#f27a96" />
<circle cx="1383.1" cy="585.3" r="2.3" fill="#d83c50" />
<circle cx="1383.1" cy="585.3" r="1.1" fill="#f27a96" />
<circle cx="1402.3" cy="596.5" r="2.3" fill="#d83c50" />
<circle cx="1402.3" cy="596.5" r="1.1" fill="#f27a96" />
<circle cx="1407.9" cy="606.6" r="2.3" fill="#d83c50" />
<circle cx="1407.9" cy="606.6" r="1.1" fill="#f27a96" />
<circle cx="1411.3" cy="612.3" r="2.3" fill="#d83c50" />
<circle cx="1411.3" cy="612.3" r="1.1" fill="#f27a96" />
<circle cx="1402.3" cy="612.3" r="2.3" fill="#d83c50" />
<circle cx="1402.3" cy="612.3" r="1.1" fill="#f27a96" />
<circle cx="1385.4" cy="612.3" r="2.3" fill="#d83c50" />
<circle cx="1385.4" cy="612.3" r="1.1" fill="#f27a96" />
<circle cx="1384.3" cy="623.5" r="2.3" fill="#d83c50" />
<circle cx="1384.3" cy="623.5" r="1.1" fill="#f27a96" />
<circle cx="1384.3" cy="634.8" r="2.3" fill="#d83c50" />
<circle cx="1384.3" cy="634.8" r="1.1" fill="#f27a96" />
<circle cx="1385.4" cy="642.6" r="2.3" fill="#d83c50" />
<circle cx="1385.4" cy="642.6" r="1.1" fill="#f27a96" />
<circle cx="1350.5" cy="641.5" r="2.3" fill="#d83c50" />
<circle cx="1350.5" cy="641.5" r="1.1" fill="#f27a96" />
<circle cx="1366.3" cy="641.5" r="2.3" fill="#d83c50" />
<circle cx="1366.3" cy="641.5" r="1.1" fill="#f27a96" />
<circle cx="1379.8" cy="641.5" r="2.3" fill="#d83c50" />
<circle cx="1379.8" cy="641.5" r="1.1" fill="#f27a96" />
<circle cx="1386.5" cy="641.5" r="2.3" fill="#d83c50" />
<circle cx="1386.5" cy="641.5" r="1.1" fill="#f27a96" />
<circle cx="1400.0" cy="641.5" r="2.3" fill="#d83c50" />
<circle cx="1400.0" cy="641.5" r="1.1" fill="#f27a96" />
<circle cx="1409.0" cy="641.5" r="2.3" fill="#d83c50" />
<circle cx="1409.0" cy="641.5" r="1.1" fill="#f27a96" />
<circle cx="1222.3" cy="610.0" r="2.3" fill="#d83c50" />
<circle cx="1222.3" cy="610.0" r="1.1" fill="#f27a96" />
<circle cx="1238.0" cy="610.0" r="2.3" fill="#d83c50" />
<circle cx="1238.0" cy="610.0" r="1.1" fill="#f27a96" />
<circle cx="1265.0" cy="610.0" r="2.3" fill="#d83c50" />
<circle cx="1265.0" cy="610.0" r="1.1" fill="#f27a96" />
<circle cx="1285.3" cy="610.0" r="2.3" fill="#d83c50" />
<circle cx="1285.3" cy="610.0" r="1.1" fill="#f27a96" />
<circle cx="1312.3" cy="610.0" r="2.3" fill="#d83c50" />
<circle cx="1312.3" cy="610.0" r="1.1" fill="#f27a96" />
<circle cx="1285.3" cy="628.0" r="2.3" fill="#d83c50" />
<circle cx="1285.3" cy="628.0" r="1.1" fill="#f27a96" />
<circle cx="1285.3" cy="634.8" r="2.3" fill="#d83c50" />
<circle cx="1285.3" cy="634.8" r="1.1" fill="#f27a96" />
<circle cx="1285.3" cy="643.8" r="2.3" fill="#d83c50" />
<circle cx="1285.3" cy="643.8" r="1.1" fill="#f27a96" />
<circle cx="1285.3" cy="657.3" r="2.3" fill="#d83c50" />
<circle cx="1285.3" cy="657.3" r="1.1" fill="#f27a96" />
<circle cx="1285.3" cy="670.8" r="2.3" fill="#d83c50" />
<circle cx="1285.3" cy="670.8" r="1.1" fill="#f27a96" />
<circle cx="1285.3" cy="679.8" r="2.3" fill="#d83c50" />
<circle cx="1285.3" cy="679.8" r="1.1" fill="#f27a96" />
<circle cx="1312.3" cy="630.3" r="2.3" fill="#d83c50" />
<circle cx="1312.3" cy="630.3" r="1.1" fill="#f27a96" />
<circle cx="1312.3" cy="643.8" r="2.3" fill="#d83c50" />
<circle cx="1312.3" cy="643.8" r="1.1" fill="#f27a96" />
<circle cx="1312.3" cy="657.3" r="2.3" fill="#d83c50" />
<circle cx="1312.3" cy="657.3" r="1.1" fill="#f27a96" />
<circle cx="1274.0" cy="642.6" r="2.3" fill="#d83c50" />
<circle cx="1274.0" cy="642.6" r="1.1" fill="#f27a96" />
<circle cx="1235.8" cy="643.8" r="2.3" fill="#d83c50" />
<circle cx="1235.8" cy="643.8" r="1.1" fill="#f27a96" />
<circle cx="1319.0" cy="642.6" r="2.3" fill="#d83c50" />
<circle cx="1319.0" cy="642.6" r="1.1" fill="#f27a96" />
<circle cx="1355.0" cy="655.0" r="2.3" fill="#d83c50" />
<circle cx="1355.0" cy="655.0" r="1.1" fill="#f27a96" />
<circle cx="1334.8" cy="628.0" r="2.3" fill="#d83c50" />
<circle cx="1334.8" cy="628.0" r="1.1" fill="#f27a96" />
<circle cx="1267.3" cy="657.3" r="2.3" fill="#d83c50" />
<circle cx="1267.3" cy="657.3" r="1.1" fill="#f27a96" />
<circle cx="1278.5" cy="657.3" r="2.3" fill="#d83c50" />
<circle cx="1278.5" cy="657.3" r="1.1" fill="#f27a96" />
<circle cx="1287.5" cy="657.3" r="2.3" fill="#d83c50" />
<circle cx="1287.5" cy="657.3" r="1.1" fill="#f27a96" />
<circle cx="1301.0" cy="657.3" r="2.3" fill="#d83c50" />
<circle cx="1301.0" cy="657.3" r="1.1" fill="#f27a96" />
<circle cx="1314.5" cy="657.3" r="2.3" fill="#d83c50" />
<circle cx="1314.5" cy="657.3" r="1.1" fill="#f27a96" />
<circle cx="1319.0" cy="657.3" r="2.3" fill="#d83c50" />
<circle cx="1319.0" cy="657.3" r="1.1" fill="#f27a96" />
<circle cx="1233.5" cy="670.8" r="2.3" fill="#d83c50" />
<circle cx="1233.5" cy="670.8" r="1.1" fill="#f27a96" />
<circle cx="1242.5" cy="670.8" r="2.3" fill="#d83c50" />
<circle cx="1242.5" cy="670.8" r="1.1" fill="#f27a96" />
<circle cx="1256.0" cy="670.8" r="2.3" fill="#d83c50" />
<circle cx="1256.0" cy="670.8" r="1.1" fill="#f27a96" />
<circle cx="1267.3" cy="670.8" r="2.3" fill="#d83c50" />
<circle cx="1267.3" cy="670.8" r="1.1" fill="#f27a96" />
<circle cx="1274.0" cy="670.8" r="2.3" fill="#d83c50" />
<circle cx="1274.0" cy="670.8" r="1.1" fill="#f27a96" />
<circle cx="1278.5" cy="670.8" r="2.3" fill="#d83c50" />
<circle cx="1278.5" cy="670.8" r="1.1" fill="#f27a96" />
<circle cx="1285.3" cy="670.8" r="2.3" fill="#d83c50" />
<circle cx="1285.3" cy="670.8" r="1.1" fill="#f27a96" />
<circle cx="1294.3" cy="670.8" r="2.3" fill="#d83c50" />
<circle cx="1294.3" cy="670.8" r="1.1" fill="#f27a96" />
<circle cx="1301.0" cy="670.8" r="2.3" fill="#d83c50" />
<circle cx="1301.0" cy="670.8" r="1.1" fill="#f27a96" />
<circle cx="1319.0" cy="670.8" r="2.3" fill="#d83c50" />
<circle cx="1319.0" cy="670.8" r="1.1" fill="#f27a96" />
<circle cx="1334.8" cy="670.8" r="2.3" fill="#d83c50" />
<circle cx="1334.8" cy="670.8" r="1.1" fill="#f27a96" />
<circle cx="1342.6" cy="670.8" r="2.3" fill="#d83c50" />
<circle cx="1342.6" cy="670.8" r="1.1" fill="#f27a96" />
<circle cx="1349.4" cy="670.8" r="2.3" fill="#d83c50" />
<circle cx="1349.4" cy="670.8" r="1.1" fill="#f27a96" />
<circle cx="1357.3" cy="670.8" r="2.3" fill="#d83c50" />
<circle cx="1357.3" cy="670.8" r="1.1" fill="#f27a96" />
<circle cx="1364.0" cy="670.8" r="2.3" fill="#d83c50" />
<circle cx="1364.0" cy="670.8" r="1.1" fill="#f27a96" />
<circle cx="1309.4" cy="643.4" r="2.3" fill="#d83c50" />
<circle cx="1309.4" cy="643.4" r="1.1" fill="#f27a96" />
<circle cx="1309.4" cy="656.9" r="2.3" fill="#d83c50" />
<circle cx="1309.4" cy="656.9" r="1.1" fill="#f27a96" />
<circle cx="1309.4" cy="700.8" r="2.3" fill="#d83c50" />
<circle cx="1309.4" cy="700.8" r="1.1" fill="#f27a96" />
<circle cx="1309.4" cy="718.8" r="2.3" fill="#d83c50" />
<circle cx="1309.4" cy="718.8" r="1.1" fill="#f27a96" />
<circle cx="1309.4" cy="732.3" r="2.3" fill="#d83c50" />
<circle cx="1309.4" cy="732.3" r="1.1" fill="#f27a96" />
<circle cx="1309.4" cy="748.0" r="2.3" fill="#d83c50" />
<circle cx="1309.4" cy="748.0" r="1.1" fill="#f27a96" />
<circle cx="1347.6" cy="746.9" r="2.3" fill="#d83c50" />
<circle cx="1347.6" cy="746.9" r="1.1" fill="#f27a96" />
<circle cx="968.0" cy="578.0" r="2.3" fill="#d83c50" />
<circle cx="968.0" cy="578.0" r="1.1" fill="#f27a96" />
<circle cx="968.3" cy="587.0" r="2.3" fill="#d83c50" />
<circle cx="968.3" cy="587.0" r="1.1" fill="#f27a96" />
<circle cx="967.7" cy="596.0" r="2.3" fill="#d83c50" />
<circle cx="967.7" cy="596.0" r="1.1" fill="#f27a96" />
<circle cx="968.0" cy="605.0" r="2.3" fill="#d83c50" />
<circle cx="968.0" cy="605.0" r="1.1" fill="#f27a96" />
<circle cx="967.9" cy="614.0" r="2.3" fill="#d83c50" />
<circle cx="967.9" cy="614.0" r="1.1" fill="#f27a96" />
<circle cx="967.5" cy="632.0" r="2.3" fill="#d83c50" />
<circle cx="967.5" cy="632.0" r="1.1" fill="#f27a96" />
<circle cx="977.7" cy="560.0" r="2.3" fill="#d83c50" />
<circle cx="977.7" cy="560.0" r="1.1" fill="#f27a96" />
<circle cx="976.9" cy="569.0" r="2.3" fill="#d83c50" />
<circle cx="976.9" cy="569.0" r="1.1" fill="#f27a96" />
<circle cx="977.4" cy="578.0" r="2.3" fill="#d83c50" />
<circle cx="977.4" cy="578.0" r="1.1" fill="#f27a96" />
<circle cx="977.2" cy="605.0" r="2.3" fill="#d83c50" />
<circle cx="977.2" cy="605.0" r="1.1" fill="#f27a96" />
<circle cx="995.8" cy="560.0" r="2.3" fill="#d83c50" />
<circle cx="995.8" cy="560.0" r="1.1" fill="#f27a96" />
<circle cx="995.6" cy="569.0" r="2.3" fill="#d83c50" />
<circle cx="995.6" cy="569.0" r="1.1" fill="#f27a96" />
<circle cx="995.6" cy="578.0" r="2.3" fill="#d83c50" />
<circle cx="995.6" cy="578.0" r="1.1" fill="#f27a96" />
<circle cx="996.2" cy="587.0" r="2.3" fill="#d83c50" />
<circle cx="996.2" cy="587.0" r="1.1" fill="#f27a96" />
<circle cx="996.1" cy="596.0" r="2.3" fill="#d83c50" />
<circle cx="996.1" cy="596.0" r="1.1" fill="#f27a96" />
<circle cx="995.7" cy="605.0" r="2.3" fill="#d83c50" />
<circle cx="995.7" cy="605.0" r="1.1" fill="#f27a96" />
<circle cx="996.2" cy="614.0" r="2.3" fill="#d83c50" />
<circle cx="996.2" cy="614.0" r="1.1" fill="#f27a96" />
<circle cx="996.4" cy="623.0" r="2.3" fill="#d83c50" />
<circle cx="996.4" cy="623.0" r="1.1" fill="#f27a96" />
<circle cx="1024.0" cy="632.0" r="2.3" fill="#d83c50" />
<circle cx="1024.0" cy="632.0" r="1.1" fill="#f27a96" />
<circle cx="1078.8" cy="578.0" r="2.3" fill="#d83c50" />
<circle cx="1078.8" cy="578.0" r="1.1" fill="#f27a96" />
<circle cx="1078.6" cy="596.0" r="2.3" fill="#d83c50" />
<circle cx="1078.6" cy="596.0" r="1.1" fill="#f27a96" />
<circle cx="1079.2" cy="605.0" r="2.3" fill="#d83c50" />
<circle cx="1079.2" cy="605.0" r="1.1" fill="#f27a96" />
<circle cx="1078.6" cy="623.0" r="2.3" fill="#d83c50" />
<circle cx="1078.6" cy="623.0" r="1.1" fill="#f27a96" />
<circle cx="1104.0" cy="569.0" r="2.3" fill="#d83c50" />
<circle cx="1104.0" cy="569.0" r="1.1" fill="#f27a96" />
<circle cx="1104.4" cy="596.0" r="2.3" fill="#d83c50" />
<circle cx="1104.4" cy="596.0" r="1.1" fill="#f27a96" />
<circle cx="1104.3" cy="605.0" r="2.3" fill="#d83c50" />
<circle cx="1104.3" cy="605.0" r="1.1" fill="#f27a96" />
<circle cx="1104.1" cy="614.0" r="2.3" fill="#d83c50" />
<circle cx="1104.1" cy="614.0" r="1.1" fill="#f27a96" />
<circle cx="1104.2" cy="623.0" r="2.3" fill="#d83c50" />
<circle cx="1104.2" cy="623.0" r="1.1" fill="#f27a96" />
<circle cx="1104.0" cy="632.0" r="2.3" fill="#d83c50" />
<circle cx="1104.0" cy="632.0" r="1.1" fill="#f27a96" />
<circle cx="939.0" cy="645.3" r="2.3" fill="#d83c50" />
<circle cx="939.0" cy="645.3" r="1.1" fill="#f27a96" />
<circle cx="948.0" cy="645.3" r="2.3" fill="#d83c50" />
<circle cx="948.0" cy="645.3" r="1.1" fill="#f27a96" />
<circle cx="966.0" cy="645.3" r="2.3" fill="#d83c50" />
<circle cx="966.0" cy="645.3" r="1.1" fill="#f27a96" />
<circle cx="993.0" cy="645.3" r="2.3" fill="#d83c50" />
<circle cx="993.0" cy="645.3" r="1.1" fill="#f27a96" />
<circle cx="1011.0" cy="645.3" r="2.3" fill="#d83c50" />
<circle cx="1011.0" cy="645.3" r="1.1" fill="#f27a96" />
<circle cx="1020.0" cy="645.3" r="2.3" fill="#d83c50" />
<circle cx="1020.0" cy="645.3" r="1.1" fill="#f27a96" />
<circle cx="1047.0" cy="645.3" r="2.3" fill="#d83c50" />
<circle cx="1047.0" cy="645.3" r="1.1" fill="#f27a96" />
<circle cx="1056.0" cy="645.3" r="2.3" fill="#d83c50" />
<circle cx="1056.0" cy="645.3" r="1.1" fill="#f27a96" />
<circle cx="1065.0" cy="645.3" r="2.3" fill="#d83c50" />
<circle cx="1065.0" cy="645.3" r="1.1" fill="#f27a96" />
<circle cx="1074.0" cy="645.3" r="2.3" fill="#d83c50" />
<circle cx="1074.0" cy="645.3" r="1.1" fill="#f27a96" />
<circle cx="1092.0" cy="645.3" r="2.3" fill="#d83c50" />
<circle cx="1092.0" cy="645.3" r="1.1" fill="#f27a96" />
<circle cx="1101.0" cy="645.3" r="2.3" fill="#d83c50" />
<circle cx="1101.0" cy="645.3" r="1.1" fill="#f27a96" />
<circle cx="966.0" cy="658.0" r="2.3" fill="#d83c50" />
<circle cx="966.0" cy="658.0" r="1.1" fill="#f27a96" />
<circle cx="984.0" cy="658.0" r="2.3" fill="#d83c50" />
<circle cx="984.0" cy="658.0" r="1.1" fill="#f27a96" />
<circle cx="993.0" cy="658.0" r="2.3" fill="#d83c50" />
<circle cx="993.0" cy="658.0" r="1.1" fill="#f27a96" />
<circle cx="1011.0" cy="658.0" r="2.3" fill="#d83c50" />
<circle cx="1011.0" cy="658.0" r="1.1" fill="#f27a96" />
<circle cx="1029.0" cy="658.0" r="2.3" fill="#d83c50" />
<circle cx="1029.0" cy="658.0" r="1.1" fill="#f27a96" />
<circle cx="1056.0" cy="658.0" r="2.3" fill="#d83c50" />
<circle cx="1056.0" cy="658.0" r="1.1" fill="#f27a96" />
<circle cx="1065.0" cy="658.0" r="2.3" fill="#d83c50" />
<circle cx="1065.0" cy="658.0" r="1.1" fill="#f27a96" />
<circle cx="1092.0" cy="658.0" r="2.3" fill="#d83c50" />
<circle cx="1092.0" cy="658.0" r="1.1" fill="#f27a96" />
<circle cx="1101.0" cy="658.0" r="2.3" fill="#d83c50" />
<circle cx="1101.0" cy="658.0" r="1.1" fill="#f27a96" />
<circle cx="930.0" cy="672.7" r="2.3" fill="#d83c50" />
<circle cx="930.0" cy="672.7" r="1.1" fill="#f27a96" />
<circle cx="939.0" cy="672.7" r="2.3" fill="#d83c50" />
<circle cx="939.0" cy="672.7" r="1.1" fill="#f27a96" />
<circle cx="957.0" cy="672.7" r="2.3" fill="#d83c50" />
<circle cx="957.0" cy="672.7" r="1.1" fill="#f27a96" />
<circle cx="975.0" cy="672.7" r="2.3" fill="#d83c50" />
<circle cx="975.0" cy="672.7" r="1.1" fill="#f27a96" />
<circle cx="1047.0" cy="672.7" r="2.3" fill="#d83c50" />
<circle cx="1047.0" cy="672.7" r="1.1" fill="#f27a96" />
<circle cx="1065.0" cy="672.7" r="2.3" fill="#d83c50" />
<circle cx="1065.0" cy="672.7" r="1.1" fill="#f27a96" />
<circle cx="1083.0" cy="672.7" r="2.3" fill="#d83c50" />
<circle cx="1083.0" cy="672.7" r="1.1" fill="#f27a96" />
<circle cx="1092.0" cy="672.7" r="2.3" fill="#d83c50" />
<circle cx="1092.0" cy="672.7" r="1.1" fill="#f27a96" />
<circle cx="1049.0" cy="597.0" r="2.3" fill="#d83c50" />
<circle cx="1049.0" cy="597.0" r="1.1" fill="#f27a96" />
<circle cx="1066.0" cy="600.0" r="2.3" fill="#d83c50" />
<circle cx="1066.0" cy="600.0" r="1.1" fill="#f27a96" />
<circle cx="1080.0" cy="580.0" r="2.3" fill="#d83c50" />
<circle cx="1080.0" cy="580.0" r="1.1" fill="#f27a96" />
<circle cx="1096.0" cy="590.0" r="2.3" fill="#d83c50" />
<circle cx="1096.0" cy="590.0" r="1.1" fill="#f27a96" />
<circle cx="1120.0" cy="560.0" r="2.3" fill="#d83c50" />
<circle cx="1120.0" cy="560.0" r="1.1" fill="#f27a96" />
<circle cx="1140.0" cy="540.0" r="2.3" fill="#d83c50" />
<circle cx="1140.0" cy="540.0" r="1.1" fill="#f27a96" />
<circle cx="1160.0" cy="520.0" r="2.3" fill="#d83c50" />
<circle cx="1160.0" cy="520.0" r="1.1" fill="#f27a96" />
<circle cx="1170.0" cy="500.0" r="2.3" fill="#d83c50" />
<circle cx="1170.0" cy="500.0" r="1.1" fill="#f27a96" />
<circle cx="1175.0" cy="465.0" r="2.3" fill="#d83c50" />
<circle cx="1175.0" cy="465.0" r="1.1" fill="#f27a96" />
<circle cx="1165.0" cy="450.0" r="2.3" fill="#d83c50" />
<circle cx="1165.0" cy="450.0" r="1.1" fill="#f27a96" />
<circle cx="1040.0" cy="455.0" r="2.3" fill="#d83c50" />
<circle cx="1040.0" cy="455.0" r="1.1" fill="#f27a96" />
<circle cx="1040.0" cy="520.0" r="2.3" fill="#d83c50" />
<circle cx="1040.0" cy="520.0" r="1.1" fill="#f27a96" />
<rect x="1052.8" y="226.6" width="21.3" height="20.3" fill="#8289bd" stroke="#9ca2d6" stroke-width="1.40"/>
<rect x="897.6" y="322.0" width="21.4" height="20.3" fill="#8289bd" stroke="#9ca2d6" stroke-width="1.40"/>
<rect x="878.5" y="381.6" width="22.5" height="21.4" fill="#8289bd" stroke="#9ca2d6" stroke-width="1.40"/>
<rect x="890.9" y="425.5" width="21.4" height="21.4" fill="#8289bd" stroke="#9ca2d6" stroke-width="1.40"/>
<rect x="888.6" y="479.5" width="21.4" height="21.4" fill="#8289bd" stroke="#9ca2d6" stroke-width="1.40"/>
<rect x="1052.8" y="370.6" width="21.3" height="20.3" fill="#8289bd" stroke="#9ca2d6" stroke-width="1.40"/>
<rect x="1080.9" y="387.5" width="21.4" height="21.4" fill="#8289bd" stroke="#9ca2d6" stroke-width="1.40"/>
<rect x="1192.3" y="322.3" width="21.4" height="19.1" fill="#8289bd" stroke="#9ca2d6" stroke-width="1.40"/>
<rect x="969.6" y="470.5" width="20.4" height="20.3" fill="#8289bd" stroke="#9ca2d6" stroke-width="1.40"/>
<rect x="982.0" y="473.9" width="21.4" height="20.2" fill="#8289bd" stroke="#9ca2d6" stroke-width="1.40"/>
<rect x="1092.5" y="486.1" width="20.3" height="21.4" fill="#8289bd" stroke="#9ca2d6" stroke-width="1.40"/>
<rect x="1200.5" y="534.5" width="21.4" height="21.4" fill="#8289bd" stroke="#9ca2d6" stroke-width="1.40"/>
<rect x="1224.1" y="487.3" width="20.3" height="21.3" fill="#8289bd" stroke="#9ca2d6" stroke-width="1.40"/>
<rect x="1310.0" y="536.9" width="20.3" height="21.4" fill="#8289bd" stroke="#9ca2d6" stroke-width="1.40"/>
<rect x="1325.8" y="534.6" width="22.5" height="20.3" fill="#8289bd" stroke="#9ca2d6" stroke-width="1.40"/>
<rect x="1284.1" y="567.3" width="21.4" height="20.2" fill="#8289bd" stroke="#9ca2d6" stroke-width="1.40"/>
<rect x="1022.0" y="565.3" width="21.3" height="20.0" fill="#8289bd" stroke="#9ca2d6" stroke-width="1.40"/>
<rect x="1152.1" y="604.3" width="21.4" height="21.3" fill="#8289bd" stroke="#9ca2d6" stroke-width="1.40"/>
<rect x="914.0" y="625.3" width="20.7" height="20.0" fill="#8289bd" stroke="#9ca2d6" stroke-width="1.40"/>
<rect x="1409.0" y="556.0" width="17.0" height="20.3" fill="#8289bd" stroke="#9ca2d6" stroke-width="1.40"/>
<rect x="1046.8" y="706.3" width="21.2" height="22.5" fill="#8289bd" stroke="#9ca2d6" stroke-width="1.40"/>
<rect x="1057.0" y="706.3" width="21.3" height="22.5" fill="#8289bd" stroke="#9ca2d6" stroke-width="1.40"/>
<rect x="1222.8" y="695.1" width="21.3" height="21.4" fill="#8289bd" stroke="#9ca2d6" stroke-width="1.40"/>
<rect x="1373.5" y="695.1" width="22.5" height="21.4" fill="#8289bd" stroke="#9ca2d6" stroke-width="1.40"/>
<rect x="1387.0" y="698.5" width="21.4" height="21.4" fill="#8289bd" stroke="#9ca2d6" stroke-width="1.40"/>
<rect x="820.8" y="729.8" width="21.3" height="22.5" fill="#8289bd" stroke="#9ca2d6" stroke-width="1.40"/>
<rect x="982.6" y="805.3" width="21.4" height="20.2" fill="#8289bd" stroke="#9ca2d6" stroke-width="1.40"/>
<rect x="915.0" y="638.0" width="19.0" height="7.0" fill="#e8e8f0"/>
<rect x="1412.0" y="563.0" width="14.0" height="13.0" fill="#dcdce8"/>
<circle cx="966.3" cy="466.0" r="6.8" fill="#9a2fc4" />
<circle cx="975.0" cy="503.0" r="6.5" fill="#9a2fc4" />
<circle cx="985.0" cy="503.0" r="6.5" fill="#9a2fc4" />
<circle cx="993.0" cy="503.0" r="6.0" fill="#9a2fc4" />
<circle cx="1056.0" cy="502.0" r="7.0" fill="#9a2fc4" />
<circle cx="1069.0" cy="502.0" r="7.0" fill="#9a2fc4" />
<circle cx="1082.0" cy="502.0" r="7.0" fill="#9a2fc4" />
<circle cx="1042.0" cy="610.7" r="6.0" fill="#9a2fc4" />
<circle cx="811.8" cy="747.8" r="7.0" fill="#9a2fc4" />
<circle cx="1219.4" cy="670.4" r="8.0" fill="#9a2fc4" />
<circle cx="967.0" cy="528.0" r="5.0" fill="#9a2fc4" />
<polygon points="1047.0,663.0 1055.0,671.0 1047.0,680.0 1039.0,671.0" fill="#9a2fc4" />
<circle cx="958.0" cy="588.7" r="7.8" fill="#ff1414" />
<circle cx="988.0" cy="584.0" r="7.8" fill="#f25a4a" />
<circle cx="972.0" cy="645.3" r="7.8" fill="#f25a4a" />
<circle cx="968.0" cy="673.3" r="7.8" fill="#f25a4a" />
<circle cx="924.7" cy="672.7" r="7.8" fill="#ff1010" />
<circle cx="1116.5" cy="708.5" r="7.8" fill="#ff1414" />
<circle cx="1145.8" cy="671.4" r="7.8" fill="#f25a4a" />
<circle cx="1309.4" cy="670.4" r="7.8" fill="#ff4a48" />
<circle cx="1024.3" cy="702.9" r="7.8" fill="#d860a0" />
<polygon points="960.0,530.0 966.0,526.0 971.0,533.0 965.0,538.0" fill="#f06050" />
<text x="1085.0" y="385.0" font-size="12.0" text-anchor="middle" font-family="Liberation Sans" font-weight="normal" fill="#d8d8d8" stroke="#2c2c2c" stroke-width="2" paint-order="stroke" letter-spacing="1">Altadena</text>
<text x="815.0" y="487.5" font-size="11.5" text-anchor="middle" font-family="Liberation Sans" font-weight="normal" fill="#d8d8d8" stroke="#2c2c2c" stroke-width="2" paint-order="stroke" letter-spacing="1">Linda Vista</text>
<text x="1007.0" y="664.5" font-size="12.0" text-anchor="middle" font-family="Liberation Sans" font-weight="normal" fill="#d8d8d8" stroke="#2c2c2c" stroke-width="2" paint-order="stroke" letter-spacing="1">Pasadena</text>
<text x="961.0" y="891.5" font-size="11.5" text-anchor="middle" font-family="Liberation Sans" font-weight="normal" fill="#d8d8d8" stroke="#2c2c2c" stroke-width="2" paint-order="stroke" letter-spacing="1">South</text>
<text x="961.0" y="905.0" font-size="11.5" text-anchor="middle" font-family="Liberation Sans" font-weight="normal" fill="#d8d8d8" stroke="#2c2c2c" stroke-width="2" paint-order="stroke" letter-spacing="1">Pasadena</text>
<text x="714.0" y="936.0" font-size="11.0" text-anchor="middle" font-family="Liberation Sans" font-weight="normal" fill="#d8d8d8" stroke="#2c2c2c" stroke-width="2" paint-order="stroke" letter-spacing="1">Highland</text>
<text x="714.0" y="950.0" font-size="11.0" text-anchor="middle" font-family="Liberation Sans" font-weight="normal" fill="#d8d8d8" stroke="#2c2c2c" stroke-width="2" paint-order="stroke" letter-spacing="1">Park</text>
<text x="1246.0" y="852.0" font-size="11.5" text-anchor="middle" font-family="Liberation Sans" font-weight="normal" fill="#d8d8d8" stroke="#2c2c2c" stroke-width="2" paint-order="stroke" letter-spacing="1">San Marino</text>
<text x="1387.0" y="450.0" font-size="11.5" text-anchor="middle" font-family="Liberation Sans" font-weight="normal" fill="#d8d8d8" stroke="#2c2c2c" stroke-width="2" paint-order="stroke" letter-spacing="1">Sierra</text>
<text x="1387.0" y="463.0" font-size="11.5" text-anchor="middle" font-family="Liberation Sans" font-weight="normal" fill="#d8d8d8" stroke="#2c2c2c" stroke-width="2" paint-order="stroke" letter-spacing="1">Madre</text>
<text x="828" y="340" font-size="7" text-anchor="middle" font-family="Liberation Sans" fill="#999">Devils</text>
<text x="828" y="349" font-size="7" text-anchor="middle" font-family="Liberation Sans" fill="#999">Gate</text>
<text x="828" y="358" font-size="7" text-anchor="middle" font-family="Liberation Sans" fill="#999">Reservoir</text></svg>
</div>

<!-- LEGEND -->
<div class="panel" style="left:299px;top:360px;width:425px;height:482px;"></div>
<div class="hr" style="left:299px;top:412.5px;width:425px;"></div>
<div class="hr" style="left:299px;top:518px;width:425px;"></div>
<div class="hr" style="left:299px;top:622px;width:425px;"></div>
<div class="abs" style="left:330px;top:567px;width:20px;height:20px;border:2px solid #d8d8d8;"></div>

<!-- FEATURES -->
<div class="panel" style="left:1341px;top:72px;width:611px;height:353px;"></div>
<div class="abs" style="left:1354.5px;top:290px;width:576px;height:85.5px;border:2px solid #a2a2a2;"></div>

<!-- SUMMARIZE -->
<div class="panel" style="left:1426px;top:462px;width:332px;height:305px;"></div>
<div class="hr" style="left:1435px;top:541px;width:313px;"></div>
<div class="hr" style="left:1435px;top:577.5px;width:313px;"></div>
<div class="hr" style="left:1435px;top:613.5px;width:313px;"></div>
<div class="hr" style="left:1435px;top:649.5px;width:313px;"></div>
<div class="hr" style="left:1435px;top:685.5px;width:313px;"></div>
<div class="hr" style="left:1435px;top:722px;width:313px;"></div>

<!-- ICONS (page coords) -->
<svg style="left:0;top:0;" width="2134" height="1200" viewBox="0 0 2134 1200">
 <defs>
  <g id="hammer" fill="none" stroke="#4a4a4a" stroke-width="1.1" stroke-linejoin="round">
   <path d="M5.2,11.6 Q5,10.2 6.5,9.4 L8.4,8.5 Q10.6,5.4 14.2,5 L19.4,5.3 Q17,5.6 14.6,6.3 Q13.8,7.6 13.9,9.3 L12.3,11.1 Q11.2,9.9 10.1,10.6 L7.6,13.2 Q6,13.9 5.2,11.6 Z"/>
   <path d="M12.3,11.2 L14.1,9.3 L24.6,21.6 Q24.8,22.4 23.9,23.2 L23.2,23.6 Q22.5,23.8 22.1,23.3 Z"/>
  </g>
  <g id="grid" fill="none" stroke="#3c3c3c" stroke-width="1.2">
   <rect x="9.9" y="8.9" width="4.4" height="3.8" fill="#cfcfcf" stroke="none"/>
   <rect x="5.7" y="8.9" width="4.2" height="3.8" fill="#d8d8d8" stroke="none"/>
   <rect x="5.7" y="17.5" width="4.2" height="3.8" fill="#c8c8c8" stroke="none"/>
   <rect x="18.7" y="8.9" width="4.2" height="3.8" fill="#d8d8d8" stroke="none"/>
   <path d="M5.2,4.6 H23 V11 M5.2,4.6 V21.6 H18.7 M5.2,8.9 H23 M5.2,13.1 H14.3 M5.2,17.4 H10 M9.9,4.6 V21.6 M14.3,4.6 V13.6 M18.7,4.6 V12.6"/>
   <path d="M12.5,16.5 Q14.5,13.5 18,12.2 L21.5,12.4 Q19.8,13 18.8,14.2 L17.6,15.6 Q16.6,14.8 15.7,15.5 L13.8,17.6 Q12.9,17.6 12.5,16.5 Z" stroke-width="1" stroke="#555"/>
   <path d="M17.6,15.6 L18.8,14.2 L24.6,21.5 Q24.8,22.6 23.5,23.3 Q22.8,23.5 22.3,22.9 Z" stroke-width="1" stroke="#555"/>
  </g>
 </defs>
 <!-- legend close -->
 <path d="M693.2,382 L701.6,390.4 M701.6,382 L693.2,390.4" stroke="#5a5a5a" stroke-width="1.1"/>
 <!-- legend polygon -->
 <polygon points="330,461.2 355.5,474.2 355.5,487 330,487" fill="#b083c4" stroke="#d59ae0" stroke-width="0.8"/>
 <circle cx="338.3" cy="714.9" r="8.6" fill="#f5444c"/>
 <circle cx="338.4" cy="744.1" r="2" fill="#d4404e"/>
 <circle cx="338.3" cy="772.9" r="8.6" fill="#fbb000"/>
 <circle cx="338.4" cy="802.1" r="2" fill="#eaa830"/>
 <!-- features -->
 <circle cx="1492.6" cy="242.5" r="3.4" fill="#d32c1e"/>
 <circle cx="1908.6" cy="243.3" r="11.3" fill="none" stroke="#707070" stroke-width="1.9"/>
 <circle cx="1908.7" cy="238.5" r="1.4" fill="#6a6a6a"/>
 <path d="M1908.7,242.6 V250.3" stroke="#6a6a6a" stroke-width="1.9"/>
 <path d="M1906.3,250.6 H1911.1" stroke="#6a6a6a" stroke-width="1.3"/>
 <path d="M1886.3,327 L1898.9,339.3 M1898.9,327 L1886.3,339.3" stroke="#555" stroke-width="1.4"/>
 <!-- summarize -->
 <path d="M1734,480.8 L1737.3,477.5 L1740.6,480.8" fill="none" stroke="#666" stroke-width="1.1"/>
 <use href="#hammer" x="1440" y="510"/>
 <use href="#hammer" x="1440" y="546.2"/>
 <use href="#hammer" x="1440" y="582.4"/>
 <use href="#hammer" x="1440" y="618.6"/>
 <use href="#hammer" x="1440" y="654.8"/>
 <use href="#grid" x="1440" y="690"/>
 <use href="#grid" x="1440" y="726.2"/>
</svg>

<div class="t" id="leg_t" style="left:310.30px;top:376.85px;font-size:17.42px;font-weight:400;color:#4b4b4b;transform:scaleX(1.0827);transform-origin:0 0;">Legend</div>
<div class="t" id="leg_h1" style="left:313.30px;top:429.19px;font-size:14.54px;font-weight:400;color:#2f3440;transform:scaleX(1.1204);transform-origin:0 0;-webkit-text-stroke:0.45px #2f3440;">Half-Mile Walking Distances from Schools</div>
<div class="t" id="leg_m" style="left:363.40px;top:465.77px;font-size:13.85px;font-weight:400;color:#707070;transform:scaleX(1.0035);transform-origin:0 0;">0.5 Miles</div>
<div class="t" id="leg_h2" style="left:313.50px;top:535.04px;font-size:14.95px;font-weight:400;color:#2f3440;transform:scaleX(1.0344);transform-origin:0 0;-webkit-text-stroke:0.45px #2f3440;">PUSD Schools - Schools</div>
<div class="t" id="leg_h3" style="left:313.30px;top:638.73px;font-size:15.09px;font-weight:400;color:#2f3440;transform:scaleX(1.0723);transform-origin:0 0;-webkit-text-stroke:0.45px #2f3440;">Traffic Collisions</div>
<div class="t" id="leg_ct" style="left:320.80px;top:675.13px;font-size:15.91px;font-weight:400;color:#686868;transform:scaleX(1.0148);transform-origin:0 0;">Collision Type</div>
<div class="t" id="leg_pf" style="left:354.40px;top:707.17px;font-size:13.03px;font-weight:400;color:#6e6e6e;transform:scaleX(1.0344);transform-origin:0 0;">Pedestrian Fatality</div>
<div class="t" id="leg_pi" style="left:354.40px;top:735.97px;font-size:13.03px;font-weight:400;color:#6e6e6e;transform:scaleX(1.0484);transform-origin:0 0;">Pedestrian Injury</div>
<div class="t" id="leg_bf" style="left:354.40px;top:765.17px;font-size:13.03px;font-weight:400;color:#6e6e6e;transform:scaleX(1.0415);transform-origin:0 0;">Bicycle Fatality</div>
<div class="t" id="leg_bi" style="left:354.40px;top:793.97px;font-size:13.03px;font-weight:400;color:#6e6e6e;transform:scaleX(1.0604);transform-origin:0 0;">Bicycle Injury</div>
<div class="t" id="f_t" style="left:1357.80px;top:95.22px;font-size:21.95px;font-weight:400;color:#353535;transform:scaleX(1.0752);transform-origin:0 0;-webkit-text-stroke:0.1px #353535;">Features to summarize</div>
<div class="t" id="f_d1" style="left:1357.70px;top:129.24px;font-size:19.20px;font-weight:400;color:#949494;transform:scaleX(1.0763);transform-origin:0 0;">Choose the input layer containing the features you want to</div>
<div class="t" id="f_d2" style="left:1357.70px;top:155.94px;font-size:19.20px;font-weight:400;color:#949494;transform:scaleX(1.0567);transform-origin:0 0;">calculate statistics for.</div>
<div class="t" id="f_in" style="left:1354.00px;top:231.00px;font-size:19.62px;font-weight:400;color:#6a6a6a;transform:scaleX(1.0582);transform-origin:0 0;">Input features</div>
<div class="t" id="f_tc" style="left:1375.40px;top:306.05px;font-size:20.03px;font-weight:400;color:#707070;transform:scaleX(1.0239);transform-origin:0 0;">Traffic Collisions</div>
<div class="t" id="f_cnt" style="left:1375.40px;top:336.25px;font-size:20.03px;font-weight:400;color:#858585;transform:scaleX(1.0320);transform-origin:0 0;">Count of features: 1675</div>
<div class="t" id="s_t" style="left:1433.60px;top:472.18px;font-size:12.07px;font-weight:400;color:#424242;transform:scaleX(1.0429);transform-origin:0 0;-webkit-text-stroke:0.1px #424242;">Summarize data</div>
<div class="t" id="s_r0" style="left:1485.70px;top:518.31px;font-size:10.15px;font-weight:400;color:#818181;transform:scaleX(1.0787);transform-origin:0 0;">Aggregate Points</div>
<div class="t" id="s_r1" style="left:1485.70px;top:554.51px;font-size:10.15px;font-weight:400;color:#818181;transform:scaleX(1.0547);transform-origin:0 0;">Join Features</div>
<div class="t" id="s_r2" style="left:1485.70px;top:590.71px;font-size:10.15px;font-weight:400;color:#818181;transform:scaleX(1.0610);transform-origin:0 0;">Summarize Center and Dispersion</div>
<div class="t" id="s_r3" style="left:1485.70px;top:626.91px;font-size:10.15px;font-weight:400;color:#818181;transform:scaleX(1.0640);transform-origin:0 0;">Summarize Nearby</div>
<div class="t" id="s_r4" style="left:1485.70px;top:663.11px;font-size:10.15px;font-weight:400;color:#818181;transform:scaleX(1.0736);transform-origin:0 0;">Summarize Within</div>
<div class="t" id="s_r5" style="left:1485.70px;top:699.31px;font-size:10.15px;font-weight:400;color:#818181;transform:scaleX(1.0472);transform-origin:0 0;">Zonal Statistics</div>
<div class="t" id="s_r6" style="left:1485.70px;top:735.51px;font-size:10.15px;font-weight:400;color:#818181;transform:scaleX(1.0339);transform-origin:0 0;">Zonal Statistics as Table</div>
</body></html>
